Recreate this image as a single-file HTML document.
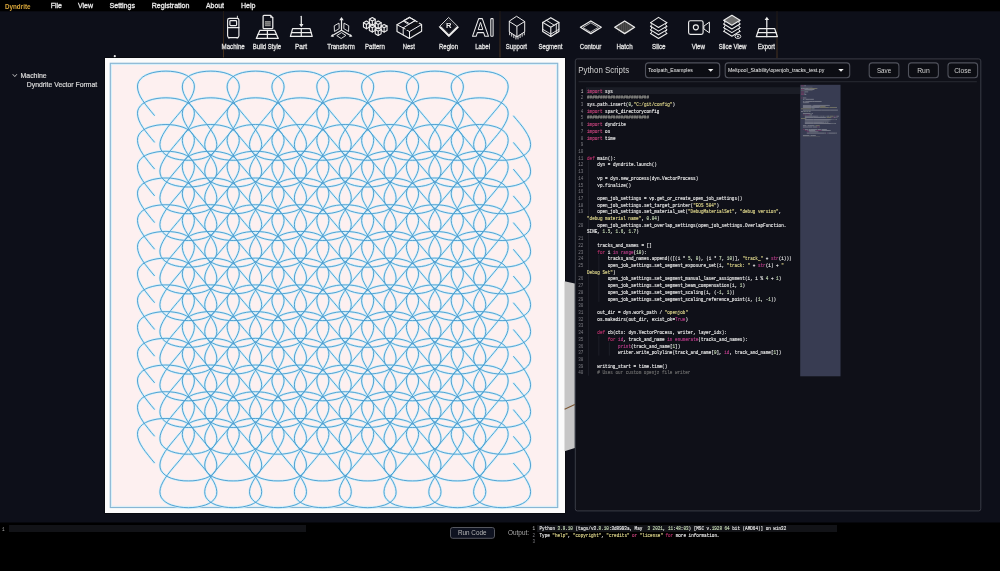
<!DOCTYPE html>
<html><head><meta charset="utf-8"><title>Dyndrite</title>
<style>html,body{margin:0;padding:0;width:1000px;height:571px;overflow:hidden;background:#0d0f19}
svg{display:block;will-change:transform;font-family:"Liberation Sans",sans-serif}.code .k{fill:#c8447e;stroke:#c8447e;stroke-width:0.16px}.code .d{fill:#b8306a;stroke:#b8306a;stroke-width:0.16px}.code .b{fill:#b83c88;stroke:#b83c88;stroke-width:0.16px}.code .s{fill:#dcd48a;stroke:#dcd48a;stroke-width:0.16px}.code .n{fill:#c2d6b2;stroke:#c2d6b2;stroke-width:0.16px}.code .c{fill:#6c6c6c;stroke:#6c6c6c;stroke-width:0.16px}.code .h{fill:#8a8a86;stroke:#8a8a86;stroke-width:0.16px}.code .i{fill:#e6e6e6;stroke:#e6e6e6;stroke-width:0.16px}.code .ln{fill:#7e7e84}.code .ln1{fill:#c8c8c8}</style></head>
<body><svg width="1000" height="571" viewBox="0 0 1000 571"><defs><linearGradient id="sepg" x1="0" y1="0" x2="0" y2="1"><stop offset="0" stop-color="#1e1814"/><stop offset="1" stop-color="#4a3420"/></linearGradient></defs><rect x="0" y="0" width="1000" height="571" fill="#0d0f19"/><rect x="0" y="0" width="1000" height="11.3" fill="#000"/><text x="5" y="8.5" font-size="7.8" fill="#dba83a" font-weight="bold" textLength="25.5" lengthAdjust="spacingAndGlyphs">Dyndrite</text><text x="50.75" y="8.4" font-size="7.5" fill="#e8e8e8" textLength="11.25" lengthAdjust="spacingAndGlyphs" stroke="#e8e8e8" stroke-width="0.3">File</text><text x="78" y="8.4" font-size="7.5" fill="#e8e8e8" textLength="15" lengthAdjust="spacingAndGlyphs" stroke="#e8e8e8" stroke-width="0.3">View</text><text x="109.5" y="8.4" font-size="7.5" fill="#e8e8e8" textLength="25.5" lengthAdjust="spacingAndGlyphs" stroke="#e8e8e8" stroke-width="0.3">Settings</text><text x="151.75" y="8.4" font-size="7.5" fill="#e8e8e8" textLength="37.75" lengthAdjust="spacingAndGlyphs" stroke="#e8e8e8" stroke-width="0.3">Registration</text><text x="206" y="8.4" font-size="7.5" fill="#e8e8e8" textLength="18" lengthAdjust="spacingAndGlyphs" stroke="#e8e8e8" stroke-width="0.3">About</text><text x="241" y="8.4" font-size="7.5" fill="#e8e8e8" textLength="14.5" lengthAdjust="spacingAndGlyphs" stroke="#e8e8e8" stroke-width="0.3">Help</text><rect x="223.0" y="11" width="1" height="47" fill="url(#sepg)"/><rect x="499.5" y="11" width="1" height="47" fill="url(#sepg)"/><rect x="776.5" y="11" width="1" height="47" fill="url(#sepg)"/><text x="221.6" y="49" font-size="6.8" fill="#dedede" textLength="23.2" lengthAdjust="spacingAndGlyphs" stroke="#e2e2e2" stroke-width="0.3">Machine</text><text x="252.8" y="49" font-size="6.8" fill="#dedede" textLength="28.4" lengthAdjust="spacingAndGlyphs" stroke="#e2e2e2" stroke-width="0.3">Build Style</text><text x="295" y="49" font-size="6.8" fill="#dedede" textLength="12" lengthAdjust="spacingAndGlyphs" stroke="#e2e2e2" stroke-width="0.3">Part</text><text x="327.2" y="49" font-size="6.8" fill="#dedede" textLength="27.6" lengthAdjust="spacingAndGlyphs" stroke="#e2e2e2" stroke-width="0.3">Transform</text><text x="365" y="49" font-size="6.8" fill="#dedede" textLength="19.8" lengthAdjust="spacingAndGlyphs" stroke="#e2e2e2" stroke-width="0.3">Pattern</text><text x="402.8" y="49" font-size="6.8" fill="#dedede" textLength="12.0" lengthAdjust="spacingAndGlyphs" stroke="#e2e2e2" stroke-width="0.3">Nest</text><text x="439" y="49" font-size="6.8" fill="#dedede" textLength="19" lengthAdjust="spacingAndGlyphs" stroke="#e2e2e2" stroke-width="0.3">Region</text><text x="475.2" y="49" font-size="6.8" fill="#dedede" textLength="14.8" lengthAdjust="spacingAndGlyphs" stroke="#e2e2e2" stroke-width="0.3">Label</text><text x="505.8" y="49" font-size="6.8" fill="#dedede" textLength="21.2" lengthAdjust="spacingAndGlyphs" stroke="#e2e2e2" stroke-width="0.3">Support</text><text x="538.4" y="49" font-size="6.8" fill="#dedede" textLength="24.0" lengthAdjust="spacingAndGlyphs" stroke="#e2e2e2" stroke-width="0.3">Segment</text><text x="579.8" y="49" font-size="6.8" fill="#dedede" textLength="21.6" lengthAdjust="spacingAndGlyphs" stroke="#e2e2e2" stroke-width="0.3">Contour</text><text x="616.4" y="49" font-size="6.8" fill="#dedede" textLength="16.2" lengthAdjust="spacingAndGlyphs" stroke="#e2e2e2" stroke-width="0.3">Hatch</text><text x="652" y="49" font-size="6.8" fill="#dedede" textLength="13.5" lengthAdjust="spacingAndGlyphs" stroke="#e2e2e2" stroke-width="0.3">Slice</text><text x="691.7" y="49" font-size="6.8" fill="#dedede" textLength="13.3" lengthAdjust="spacingAndGlyphs" stroke="#e2e2e2" stroke-width="0.3">View</text><text x="718.7" y="49" font-size="6.8" fill="#dedede" textLength="27.8" lengthAdjust="spacingAndGlyphs" stroke="#e2e2e2" stroke-width="0.3">Slice View</text><text x="757.7" y="49" font-size="6.8" fill="#dedede" textLength="17.3" lengthAdjust="spacingAndGlyphs" stroke="#e2e2e2" stroke-width="0.3">Export</text><g><rect x="227.6" y="18.3" width="11.3" height="19.3" rx="1.8" fill="none" stroke="#ececec" stroke-width="1.15"/><rect x="229.9" y="20.6" width="6.7" height="5" rx="0.9" fill="none" stroke="#ececec" stroke-width="1.15"/><path d="M227.6 27.6 H238.9" fill="none" stroke="#ececec" stroke-width="1.25" stroke-linejoin="round" stroke-linecap="round"/><path d="M237.4 16.2 V18.3" fill="none" stroke="#ececec" stroke-width="0.9" stroke-linejoin="round" stroke-linecap="round"/><path d="M228 37.2 h1.6 v1.2 h-1.6 Z M236.6 37.2 h1.6 v1.2 h-1.6 Z" fill="#ececec"/><path d="M264 15.4 H270.6 L272.8 17.6 V27.7 Q272.8 28.6 271.9 28.6 H264 Q263.1 28.6 263.1 27.7 V16.3 Q263.1 15.4 264 15.4 Z" fill="none" stroke="#ececec" stroke-width="1.25" stroke-linejoin="round" stroke-linecap="round"/><path d="M270.6 15.4 V17.6 H272.8" fill="none" stroke="#ececec" stroke-width="0.8" stroke-linejoin="round" stroke-linecap="round"/><path d="M264.9 21 H270.7 V26.2 H264.9 Z" fill="#8a8a8a"/><path d="M264.9 22.7 H270.7 M264.9 24.4 H270.7" fill="none" stroke="#4a4a4a" stroke-width="0.5" stroke-linejoin="round" stroke-linecap="round"/><path d="M259.9 30.3 L274.6 30.3 L278.3 38.4 L256.3 38.4 Z" fill="none" stroke="#ececec" stroke-width="1.25" stroke-linejoin="round" stroke-linecap="round"/><path d="M258.1 34.4 H276.5 M267.4 30.3 V38.4" fill="none" stroke="#ececec" stroke-width="1.25" stroke-linejoin="round" stroke-linecap="round"/><path d="M301.3 16.3 V24.5" fill="none" stroke="#ececec" stroke-width="1.25" stroke-linejoin="round" stroke-linecap="round"/><path d="M299.2 24 L303.5 24 L301.35 27.3 Z" fill="#ececec"/><path d="M292.6 28.7 L310 28.7 L312.2 36.4 L290.4 36.4 Z" fill="none" stroke="#ececec" stroke-width="1.25" stroke-linejoin="round" stroke-linecap="round"/><path d="M291.5 32.5 H311.1 M301.3 28.7 V36.4" fill="none" stroke="#ececec" stroke-width="1.25" stroke-linejoin="round" stroke-linecap="round"/><path d="M341.5 30.2 V19.5 M341.5 30.2 L332.5 35.5 M341.5 30.2 L350.5 35.5" fill="none" stroke="#ececec" stroke-width="1.25" stroke-linejoin="round" stroke-linecap="round"/><path d="M339.3 20.2 L343.7 20.2 L341.5 16.9 Z" fill="#ececec"/><path d="M330.6 36.6 L333.9 37.1 L332.3 34.1 Z M352.4 36.6 L349.1 37.1 L350.7 34.1 Z" fill="#ececec"/><path d="M334.6 25.6 L339 23.1 L339.2 28.6 L334.8 31.3 Z" fill="none" stroke="#ececec" stroke-width="0.9" stroke-linejoin="round" stroke-linecap="round"/><path d="M348.4 25.6 L344 23.1 L343.8 28.6 L348.2 31.3 Z" fill="none" stroke="#ececec" stroke-width="0.9" stroke-linejoin="round" stroke-linecap="round"/><path d="M337.1 35.4 L341.5 32.6 L345.9 35.4 L341.5 38.3 Z" fill="none" stroke="#ececec" stroke-width="0.9" stroke-linejoin="round" stroke-linecap="round"/><path d="M372.3 17.6 L375.25 19.3 L375.25 23.6 L372.3 25.3 L369.35 23.6 L369.35 19.3 Z" fill="none" stroke="#ececec" stroke-width="1.1" stroke-linejoin="round" stroke-linecap="round"/><path d="M369.35 19.3 L372.3 21 L375.25 19.3 M372.3 21 V25.3" fill="none" stroke="#ececec" stroke-width="1.1" stroke-linejoin="round" stroke-linecap="round"/><path d="M378.2 21 L381.15 22.7 L381.15 27 L378.2 28.7 L375.25 27 L375.25 22.7 Z" fill="none" stroke="#ececec" stroke-width="1.1" stroke-linejoin="round" stroke-linecap="round"/><path d="M375.25 22.7 L378.2 24.4 L381.15 22.7 M378.2 24.4 V28.7" fill="none" stroke="#ececec" stroke-width="1.1" stroke-linejoin="round" stroke-linecap="round"/><path d="M384.1 24.4 L387.05 26.1 L387.05 30.4 L384.1 32.1 L381.15 30.4 L381.15 26.1 Z" fill="none" stroke="#ececec" stroke-width="1.1" stroke-linejoin="round" stroke-linecap="round"/><path d="M381.15 26.1 L384.1 27.8 L387.05 26.1 M384.1 27.8 V32.1" fill="none" stroke="#ececec" stroke-width="1.1" stroke-linejoin="round" stroke-linecap="round"/><path d="M366.4 21 L369.35 22.7 L369.35 27 L366.4 28.7 L363.45 27 L363.45 22.7 Z" fill="none" stroke="#ececec" stroke-width="1.1" stroke-linejoin="round" stroke-linecap="round"/><path d="M363.45 22.7 L366.4 24.4 L369.35 22.7 M366.4 24.4 V28.7" fill="none" stroke="#ececec" stroke-width="1.1" stroke-linejoin="round" stroke-linecap="round"/><path d="M372.3 24.4 L375.25 26.1 L375.25 30.4 L372.3 32.1 L369.35 30.4 L369.35 26.1 Z" fill="none" stroke="#ececec" stroke-width="1.1" stroke-linejoin="round" stroke-linecap="round"/><path d="M369.35 26.1 L372.3 27.8 L375.25 26.1 M372.3 27.8 V32.1" fill="none" stroke="#ececec" stroke-width="1.1" stroke-linejoin="round" stroke-linecap="round"/><path d="M378.2 27.8 L381.15 29.5 L381.15 33.8 L378.2 35.5 L375.25 33.8 L375.25 29.5 Z" fill="none" stroke="#ececec" stroke-width="1.1" stroke-linejoin="round" stroke-linecap="round"/><path d="M375.25 29.5 L378.2 31.2 L381.15 29.5 M378.2 31.2 V35.5" fill="none" stroke="#ececec" stroke-width="1.1" stroke-linejoin="round" stroke-linecap="round"/><path d="M409.7 17.4 L421.6 24.5 L421.6 31.3 L409.5 38.4 L397 31.4 L397 24.8 L403.4 21 Z" fill="none" stroke="#ececec" stroke-width="1.15" stroke-linejoin="round" stroke-linecap="round"/><path d="M409.7 17.4 L415.2 20.6 L409.7 23.8 L404.2 20.6 Z" fill="none" stroke="#ececec" stroke-width="1.0" stroke-linejoin="round" stroke-linecap="round"/><path d="M403.4 21 L408.6 24.5 L403.2 27.9 L397 24.8" fill="none" stroke="#ececec" stroke-width="1.0" stroke-linejoin="round" stroke-linecap="round"/><path d="M403.2 27.9 V34.8" fill="none" stroke="#ececec" stroke-width="1.0" stroke-linejoin="round" stroke-linecap="round"/><path d="M403.2 27.9 L409.5 31.6 L421.6 24.5" fill="none" stroke="#ececec" stroke-width="1.0" stroke-linejoin="round" stroke-linecap="round"/><path d="M409.5 31.6 V38.4" fill="none" stroke="#ececec" stroke-width="1.0" stroke-linejoin="round" stroke-linecap="round"/><path d="M408.6 24.5 L415.2 20.6" fill="none" stroke="#ececec" stroke-width="1.0" stroke-linejoin="round" stroke-linecap="round"/><path d="M406 29.6 L418.6 22.5" fill="none" stroke="#111" stroke-width="1.6" stroke-linejoin="round" stroke-linecap="round"/><path d="M411.5 34.2 L420.6 28.9" fill="none" stroke="#111" stroke-width="1.5" stroke-linejoin="round" stroke-linecap="round"/><path d="M448.9 17.7 L458.3 27 L448.9 36.6 L439.6 27 Z" fill="none" stroke="#ececec" stroke-width="0.9" stroke-linejoin="round" stroke-linecap="round"/><path d="M440.4 27.2 L448.9 35.6 L457.5 27.2" fill="none" stroke="#ececec" stroke-width="2.0" stroke-linejoin="round" stroke-linecap="round"/><path d="M448.9 20.2 L455.8 27 L448.9 33.4 L442.1 27 Z" fill="none" stroke="#5a5a5a" stroke-width="0.6" stroke-linejoin="round" stroke-linecap="round"/><text x="448.8" y="28.1" font-size="7.6" font-weight="bold" fill="#ececec" text-anchor="middle" font-family="Liberation Sans">R</text><path d="M472.5 36.3 L478.7 18.6 L482.3 18.6 L488.5 36.3 L484.9 36.3 L483.6 32.6 L477.4 32.6 L476.1 36.3 Z" fill="none" stroke="#ececec" stroke-width="1.05" stroke-linejoin="round" stroke-linecap="round"/><path d="M478.3 29.2 L480.5 22.4 L482.7 29.2 Z" fill="none" stroke="#ececec" stroke-width="1.0" stroke-linejoin="round" stroke-linecap="round"/><rect x="490.8" y="18.6" width="2.3" height="17.7" rx="0.6" fill="none" stroke="#ececec" stroke-width="1.05"/><path d="M516.9 16.5 L524.7 21.5 L524.7 31.8 L516.9 36.9 L509.3 31.8 L509.3 21.5 Z" fill="none" stroke="#ececec" stroke-width="1" stroke-linejoin="round" stroke-linecap="round"/><path d="M509.3 21.5 L516.9 26.3 L524.7 21.5 M516.9 26.3 V36.9" fill="none" stroke="#ececec" stroke-width="1" stroke-linejoin="round" stroke-linecap="round"/><path d=" M509.6 32 V34.8 M511.7 33.41 V36.21 M513.8 34.82 V37.62 M515.9 36.23 V39.03 M518 36.18 V38.98 M520.1 34.81 V37.61 M522.2 33.43 V36.23 M524.3 32.06 V34.86" fill="none" stroke="#ececec" stroke-width="0.9" stroke-linejoin="round" stroke-linecap="round"/><path d="M550.8 17.7 L558.9 22.4 L558.9 31.5 L550.8 36.4 L542.7 31.5 L542.7 22.4 Z" fill="none" stroke="#ececec" stroke-width="1.2" stroke-linejoin="round" stroke-linecap="round"/><path d="M542.7 22.4 L550.8 27.2 L558.9 22.4 M550.8 27.2 V36.4" fill="none" stroke="#ececec" stroke-width="1.1" stroke-linejoin="round" stroke-linecap="round"/><path d="M542.7 29.3 L550.8 34.1 L558.9 29.3" fill="none" stroke="#ececec" stroke-width="0.9" stroke-linejoin="round" stroke-linecap="round"/><path d="M546.2 20.2 L554.2 25.2 M556.3 24 V33" fill="none" stroke="#ececec" stroke-width="0.9" stroke-linejoin="round" stroke-linecap="round"/><path d="M580.4 27.3 L590.85 21 L601.3 27.3 L590.85 33.6 Z" fill="none" stroke="#ececec" stroke-width="1.25" stroke-linejoin="round" stroke-linecap="round"/><path d="M583.3 27.3 L590.85 22.8 L598.4 27.3 L590.85 31.8 Z" fill="none" stroke="#bdbdbd" stroke-width="0.9" stroke-linejoin="round" stroke-linecap="round"/><path d="M614.7 27.3 L624.65 21 L634.6 27.3 L624.65 33.6 Z" fill="#4e4e4e"/><path d="M618.5 22 V32.6 M620.5 22 V32.6 M622.5 22 V32.6 M624.6 22 V32.6 M626.7 22 V32.6 M628.8 22 V32.6 M630.8 22 V32.6" fill="none" stroke="#2a2a2a" stroke-width="0.5" stroke-linejoin="round" stroke-linecap="round"/><path d="M614.7 27.3 L624.65 21 L634.6 27.3 L624.65 33.6 Z" fill="none" stroke="#ececec" stroke-width="1.25" stroke-linejoin="round" stroke-linecap="round"/><path d="M650.6 22.6 L658.5 17.4 L666.8 22.6 L658.5 27.5 Z" fill="none" stroke="#ececec" stroke-width="1.1" stroke-linejoin="round" stroke-linecap="round"/><path d="M650.6 26.25 L658.5 31.15 L666.8 26.25" fill="none" stroke="#ececec" stroke-width="1.1" stroke-linejoin="round" stroke-linecap="round"/><path d="M650.6 29.9 L658.5 34.8 L666.8 29.9" fill="none" stroke="#ececec" stroke-width="1.1" stroke-linejoin="round" stroke-linecap="round"/><path d="M650.6 33.55 L658.5 38.45 L666.8 33.55" fill="none" stroke="#ececec" stroke-width="1.1" stroke-linejoin="round" stroke-linecap="round"/><path d="M650.6 22.6 L651.9 24.45 L650.6 26.25 L651.9 28.1 L650.6 29.9 L651.9 31.75 L650.6 33.55" fill="none" stroke="#ececec" stroke-width="1.0" stroke-linejoin="round" stroke-linecap="round"/><path d="M666.8 22.6 L665.5 24.45 L666.8 26.25 L665.5 28.1 L666.8 29.9 L665.5 31.75 L666.8 33.55" fill="none" stroke="#ececec" stroke-width="1.0" stroke-linejoin="round" stroke-linecap="round"/><rect x="688.6" y="20.7" width="14.5" height="13.7" rx="1.8" fill="none" stroke="#ececec" stroke-width="1.15"/><circle cx="695.85" cy="27.3" r="2.5" fill="none" stroke="#ececec" stroke-width="1.15"/><path d="M704.2 25.9 L709.4 22.1 L709.4 32.8 L704.2 29.2 Z" fill="none" stroke="#ececec" stroke-width="1" stroke-linejoin="round" stroke-linecap="round"/><path d="M723.8 20.3 L731.9 15.2 L740 20.3 L731.9 25.3 Z" fill="#6e6e6e"/><path d="M723.8 20.3 L731.9 15.2 L740 20.3 L731.9 25.3 Z" fill="none" stroke="#ececec" stroke-width="1.1" stroke-linejoin="round" stroke-linecap="round"/><path d="M723.8 23.95 L731.9 28.95 L740 23.95" fill="none" stroke="#ececec" stroke-width="1.1" stroke-linejoin="round" stroke-linecap="round"/><path d="M723.8 27.6 L731.9 32.6 L740 27.6" fill="none" stroke="#ececec" stroke-width="1.1" stroke-linejoin="round" stroke-linecap="round"/><path d="M723.8 31.25 L731.9 36.25 L740 31.25" fill="none" stroke="#ececec" stroke-width="1.1" stroke-linejoin="round" stroke-linecap="round"/><path d="M723.8 20.3 L725.1 22.15 L723.8 23.95 L725.1 25.8 L723.8 27.6 L725.1 29.45 L723.8 31.25" fill="none" stroke="#ececec" stroke-width="1.0" stroke-linejoin="round" stroke-linecap="round"/><path d="M740 20.3 L738.7 22.15 L740 23.95 L738.7 25.8 L740 27.6 L738.7 29.45 L740 31.25" fill="none" stroke="#ececec" stroke-width="1.0" stroke-linejoin="round" stroke-linecap="round"/><ellipse cx="737.9" cy="36.4" rx="2.9" ry="2.1" fill="#0d0f19" stroke="#ececec" stroke-width="0.9"/><circle cx="737.9" cy="36.4" r="0.9" fill="#ececec"/><path d="M766.8 27.3 V19.3" fill="none" stroke="#ececec" stroke-width="1.25" stroke-linejoin="round" stroke-linecap="round"/><path d="M764.6 20 L769.1 20 L766.85 16.8 Z" fill="#ececec"/><path d="M759 28.6 L774.7 28.6 L777.4 36.7 L756.3 36.7 Z" fill="none" stroke="#ececec" stroke-width="1.25" stroke-linejoin="round" stroke-linecap="round"/><path d="M757.7 32.6 H776 M766.8 28.6 V36.7" fill="none" stroke="#ececec" stroke-width="1.25" stroke-linejoin="round" stroke-linecap="round"/></g><path d="M12.7 74.2 L14.8 76.6 L16.9 74.2" fill="none" stroke="#cfcfcf" stroke-width="0.9"/><text x="20.5" y="78.4" font-size="7.2" fill="#dadada" textLength="26.2" lengthAdjust="spacingAndGlyphs" stroke="#dadada" stroke-width="0.2">Machine</text><text x="26.8" y="87" font-size="7.2" fill="#dadada" textLength="70.4" lengthAdjust="spacingAndGlyphs" stroke="#dadada" stroke-width="0.2">Dyndrite Vector Format</text><rect x="104.5" y="57.5" width="461" height="456" fill="#050608"/><rect x="105" y="58" width="460" height="455" fill="#fbfbfb"/><rect x="110.3" y="63.3" width="447.4" height="444.2" fill="#fdf0f0" stroke="#88b6d4" stroke-width="1.2"/><rect x="111.5" y="64.5" width="445" height="441.8" fill="none" stroke="#d8f0fa" stroke-width="1"/><defs><path id="pat" d="M154.7 115.7l-3.3 -3.9 -3.1 -3.8 -3 -3.8 -2.6 -3.8 -2.2 -3.5 -1.6 -3.5 -1 -3.3 -0.4 -3.1 0.2 -2.8 1 -2.7 1.7 -2.3 2.2 -2.1 2.9 -1.8 3.4 -1.5 3.9 -1.2 4.2 -0.8 4.4 -0.5 4.5 -0.2 4.6 0.2 4.4 0.5 4.2 0.8 3.9 1.2 3.4 1.5 2.9 1.8 2.2 2.1 1.7 2.3 1 2.7 0.2 2.8 -0.4 3.1 -1 3.3 -1.6 3.5 -2.2 3.5 -2.6 3.8 -3 3.8 -3.1 3.8 -3.3 3.9 -3.3 3.9 -3.2 3.8 -3 3.8 -2.6 3.8 -2.1 3.5 -1.7 3.5 -1 3.3 -0.4 3.1 0.3 2.8 0.9 2.7 1.7 2.3 2.3 2.1 2.8 1.8 3.4 1.5 3.9 1.2 4.2 0.8 4.4 0.5 4.6 0.2 4.5 -0.2 4.4 -0.5 4.2 -0.8 3.9 -1.2 3.4 -1.5 2.9 -1.8 2.3 -2.1 1.6 -2.3 1 -2.7 0.2 -2.8 -0.4 -3.1 -1 -3.3 -1.6 -3.5 -2.2 -3.5 -2.6 -3.8 -2.9 -3.8 -3.2 -3.8 -3.3 -3.9 -3.3 -3.9 -3.2 -3.8 -3 -3.8 -2.6 -3.8 -2.1 -3.5 -1.7 -3.5 -1 -3.3 -0.4 -3.1 0.3 -2.8 0.9 -2.7 1.7 -2.3 2.3 -2.1 2.8 -1.8 3.5 -1.5 3.8 -1.2 4.2 -0.8 4.4 -0.5 4.6 -0.2 4.5 0.2 4.4 0.5 4.2 0.8 3.9 1.2 3.4 1.5 2.9 1.8 2.3 2.1 1.6 2.3 1 2.7 0.3 2.8 -0.4 3.1 -1.1 3.3 -1.6 3.5 -2.2 3.5 -2.6 3.8 -2.9 3.8 -3.2 3.8 -3.3 3.9 -3.3 3.9 -3.2 3.8 -3 3.8 -2.6 3.8 -2.1 3.5 -1.7 3.5 -1 3.3 -0.4 3.1 0.3 2.8 0.9 2.7 1.7 2.3 2.3 2.1 2.9 1.8 3.4 1.5 3.8 1.2 4.2 0.8 4.4 0.5 4.6 0.2 4.5 -0.2 4.5 -0.5 4.2 -0.8 3.8 -1.2 3.4 -1.5 2.9 -1.8 2.3 -2.1 1.6 -2.3 1 -2.7 0.3 -2.8 -0.4 -3.1 -1.1 -3.3 -1.6 -3.5 -2.2 -3.5 -2.6 -3.8 -2.9 -3.8 -3.2 -3.8 -3.3 -3.9 -3.3 -3.9 -3.2 -3.8 -2.9 -3.8 -2.6 -3.8 -2.2 -3.5 -1.6 -3.5 -1.1 -3.3 -0.4 -3.1 0.3 -2.8 1 -2.7 1.6 -2.3 2.3 -2.1 2.9 -1.8 3.4 -1.5 3.8 -1.2 4.2 -0.8 4.5 -0.5 4.5 -0.2 4.5 0.2 4.5 0.5 4.2 0.8 3.8 1.2 3.4 1.5 2.9 1.8 2.3 2.1 1.6 2.3 1 2.7 0.3 2.8 -0.4 3.1 -1.1 3.3 -1.6 3.5 -2.2 3.5 -2.6 3.8 -2.9 3.8 -3.2 3.8 -3.3 3.9 -3.3 3.9 -3.2 3.8 -2.9 3.8 -2.6 3.8 -2.2 3.5 -1.6 3.5 -1.1 3.3 -0.4 3.1 0.3 2.8 1 2.7 1.6 2.3 2.3 2.1 2.9 1.8 3.4 1.5 3.8 1.2 4.2 0.8 4.5 0.5 4.5 0.2 4.6 -0.2 4.4 -0.5 4.2 -0.8 3.8 -1.2 3.4 -1.5 2.9 -1.8 2.3 -2.1 1.6 -2.3 1 -2.7 0.3 -2.8 -0.4 -3.1 -1 -3.3 -1.7 -3.5 -2.1 -3.5 -2.7 -3.8 -2.9 -3.8 -3.2 -3.8 -3.3 -3.9 -3.3 -3.9 -3.2 -3.8 -2.9 -3.8 -2.6 -3.8 -2.2 -3.5 -1.6 -3.5 -1.1 -3.3 -0.4 -3.1 0.3 -2.8 1 -2.7 1.6 -2.3 2.3 -2.1 2.9 -1.8 3.4 -1.5 3.9 -1.2 4.1 -0.8 4.5 -0.5 4.5 -0.2 4.6 0.2 4.4 0.5 4.2 0.8 3.8 1.2 3.4 1.5 2.9 1.8 2.3 2.1 1.7 2.3 0.9 2.7 0.3 2.8 -0.4 3.1 -1 3.3 -1.7 3.5 -2.1 3.5 -2.6 3.8 -3 3.8 -3.2 3.8 -3.3 3.9 -3.3 3.9 -3.2 3.8 -2.9 3.8 -2.6 3.8 -2.2 3.5 -1.6 3.5 -1.1 3.3 -0.3 3.1 0.2 2.8 1 2.7 1.6 2.3 2.3 2.1 2.9 1.8 3.4 1.5 3.9 1.2 4.2 0.8 4.4 0.5 4.5 0.2 4.6 -0.2 4.4 -0.5 4.2 -0.8 3.9 -1.2 3.4 -1.5 2.8 -1.8 2.3 -2.1 1.7 -2.3 0.9 -2.7 0.3 -2.8 -0.4 -3.1 -1 -3.3 -1.7 -3.5 -2.1 -3.5 -2.6 -3.8 -3 -3.8 -3.2 -3.8 -3.3 -3.9 -3.3 -3.9 -3.1 -3.8 -3 -3.8 -2.6 -3.8 -2.2 -3.5 -1.6 -3.5 -1 -3.3 -0.4 -3.1 0.2 -2.8 1 -2.7 1.7 -2.3 2.2 -2.1 2.9 -1.8 3.4 -1.5 3.9 -1.2 4.2 -0.8 4.4 -0.5 4.5 -0.2 4.6 0.2 4.4 0.5 4.2 0.8 3.9 1.2 3.4 1.5 2.9 1.8 2.2 2.1 1.7 2.3 1 2.7 0.2 2.8 -0.4 3.1 -1 3.3 -1.6 3.5 -2.2 3.5 -2.6 3.8 -3 3.8 -3.1 3.8 -3.3 3.9 -3.3 3.9 -3.2 3.8 -3 3.8 -2.6 3.8 -2.1 3.5 -1.7 3.5 -1 3.3 -0.4 3.1 0.3 2.8 0.9 2.7 1.7 2.3 2.3 2.1 2.8 1.8 3.4 1.5 3.9 1.2 4.2 0.8 4.4 0.5 4.6 0.2 4.5 -0.2 4.4 -0.5 4.2 -0.8 3.9 -1.2 3.4 -1.5 2.9 -1.8 2.3 -2.1 1.6 -2.3 1 -2.7 0.2 -2.8 -0.4 -3.1 -1 -3.3 -1.6 -3.5 -2.2 -3.5 -2.6 -3.8 -3 -3.8 -3.1 -3.8 -3.3 -3.9 -3.3 -3.9 -3.2 -3.8 -3 -3.8 -2.6 -3.8 -2.1 -3.5 -1.7 -3.5 -1 -3.3 -0.4 -3.1 0.3 -2.8 0.9 -2.7 1.7 -2.3 2.3 -2.1 2.8 -1.8 3.5 -1.5 3.8 -1.2 4.2 -0.8 4.4 -0.5 4.6 -0.2 4.5 0.2 4.4 0.5 4.2 0.8 3.9 1.2 3.4 1.5 2.9 1.8 2.3 2.1 1.6 2.3 1 2.7 0.3 2.8 -0.4 3.1 -1.1 3.3 -1.6 3.5 -2.2 3.5 -2.6 3.8 -2.9 3.8 -3.2 3.8 -3.3 3.9 -3.3 3.9 -3.2 3.8 -3 3.8 -2.6 3.8 -2.1 3.5 -1.7 3.5 -1 3.3 -0.4 3.1 0.3 2.8 0.9 2.7 1.7 2.3 2.3 2.1 2.9 1.8 3.4 1.5 3.8 1.2 4.2 0.8 4.4 0.5 4.6 0.2 4.5 -0.2 4.5 -0.5 4.2 -0.8 3.8 -1.2 3.4 -1.5 2.9 -1.8 2.3 -2.1 1.6 -2.3 1 -2.7 0.3 -2.8 -0.4 -3.1 -1.1 -3.3 -1.6 -3.5 -2.2 -3.5 -2.6 -3.8 -2.9 -3.8 -3.2 -3.8 -3.3 -3.9 -3.3 -3.9 -3.2 -3.8 -2.9 -3.8 -2.6 -3.8 -2.2 -3.5 -1.6 -3.5 -1.1 -3.3 -0.4 -3.1 0.3 -2.8 1 -2.7 1.6 -2.3 2.3 -2.1 2.9 -1.8 3.4 -1.5 3.8 -1.2 4.2 -0.8 4.4 -0.5 4.6 -0.2 4.5 0.2 4.5 0.5 4.2 0.8 3.8 1.2 3.4 1.5 2.9 1.8 2.3 2.1 1.6 2.3 1 2.7 0.3 2.8 -0.4 3.1 -1.1 3.3 -1.6 3.5 -2.2 3.5 -2.6 3.8 -2.9 3.8 -3.2 3.8 -3.3 3.9 -3.3 3.9 -3.2 3.8 -2.9 3.8 -2.6 3.8 -2.2 3.5 -1.6 3.5 -1.1 3.3 -0.4 3.1 0.3 2.8 1 2.7 1.6 2.3 2.3 2.1 2.9 1.8 3.4 1.5 3.8 1.2 4.2 0.8 4.5 0.5 4.5 0.2 4.6 -0.2 4.4 -0.5 4.2 -0.8 3.8 -1.2 3.4 -1.5 2.9 -1.8 2.3 -2.1 1.6 -2.3 1 -2.7 0.3 -2.8 -0.4 -3.1 -1 -3.3 -1.7 -3.5 -2.1 -3.5 -2.7 -3.8 -2.9 -3.8 -3.2 -3.8 -3.3 -3.9 -3.3 -3.9 -3.2 -3.8 -2.9 -3.8 -2.6 -3.8 -2.2 -3.5 -1.6 -3.5 -1.1 -3.3 -0.4 -3.1 0.3 -2.8 1 -2.7 1.6 -2.3 2.3 -2.1 2.9 -1.8 3.4 -1.5 3.9 -1.2 4.1 -0.8 4.5 -0.5 4.5 -0.2 4.6 0.2 4.4 0.5 4.2 0.8 3.8 1.2 3.4 1.5 2.9 1.8 2.3 2.1 1.7 2.3 0.9 2.7 0.3 2.8 -0.4 3.1 -1 3.3 -1.7 3.5 -2.1 3.5 -2.6 3.8 -3 3.8 -3.2 3.8 -3.3 3.9 -3.3 3.9 -3.2 3.8 -2.9 3.8 -2.6 3.8 -2.2 3.5 -1.6 3.5 -1.1 3.3 -0.4 3.1 0.3 2.8 1 2.7 1.6 2.3 2.3 2.1 2.9 1.8 3.4 1.5 3.9 1.2 4.2 0.8 4.4 0.5 4.5 0.2 4.6 -0.2 4.4 -0.5 4.2 -0.8 3.8 -1.2 3.5 -1.5 2.8 -1.8 2.3 -2.1 1.7 -2.3 0.9 -2.7 0.3 -2.8 -0.4 -3.1 -1 -3.3 -1.7 -3.5 -2.1 -3.5 -2.6 -3.8 -3 -3.8 -3.2 -3.8 -3.3 -3.9M154.7 142.4l-3.3 -3.9 -3.1 -3.8 -3 -3.8 -2.6 -3.7 -2.2 -3.6 -1.6 -3.5 -1 -3.3 -0.4 -3 0.2 -2.9 1 -2.6 1.7 -2.4 2.2 -2.1 2.9 -1.8 3.4 -1.5 3.9 -1.2 4.2 -0.8 4.4 -0.5 4.5 -0.2 4.6 0.2 4.4 0.5 4.2 0.8 3.9 1.2 3.4 1.5 2.9 1.8 2.2 2.1 1.7 2.4 1 2.6 0.2 2.9 -0.4 3 -1 3.3 -1.6 3.5 -2.2 3.6 -2.6 3.7 -3 3.8 -3.1 3.8 -3.3 3.9 -3.3 3.9 -3.2 3.9 -3 3.8 -2.6 3.7 -2.1 3.6 -1.7 3.4 -1 3.3 -0.4 3.1 0.3 2.9 0.9 2.6 1.7 2.4 2.3 2 2.8 1.8 3.4 1.5 3.9 1.2 4.2 0.8 4.4 0.6 4.6 0.1 4.5 -0.1 4.4 -0.6 4.2 -0.8 3.9 -1.2 3.4 -1.5 2.9 -1.8 2.3 -2 1.6 -2.4 1 -2.6 0.2 -2.9 -0.4 -3.1 -1 -3.3 -1.6 -3.4 -2.2 -3.6 -2.6 -3.7 -2.9 -3.8 -3.2 -3.9 -3.3 -3.9 -3.3 -3.9 -3.2 -3.8 -3 -3.8 -2.6 -3.7 -2.1 -3.6 -1.7 -3.5 -1 -3.3 -0.4 -3 0.3 -2.9 0.9 -2.6 1.7 -2.4 2.3 -2.1 2.8 -1.8 3.5 -1.5 3.8 -1.2 4.2 -0.8 4.4 -0.5 4.6 -0.2 4.5 0.2 4.4 0.5 4.2 0.8 3.9 1.2 3.4 1.5 2.9 1.8 2.3 2.1 1.6 2.4 1 2.6 0.3 2.9 -0.4 3 -1.1 3.3 -1.6 3.5 -2.2 3.6 -2.6 3.7 -2.9 3.8 -3.2 3.8 -3.3 3.9 -3.3 3.9 -3.2 3.9 -3 3.8 -2.6 3.7 -2.1 3.6 -1.7 3.4 -1 3.3 -0.4 3.1 0.3 2.9 0.9 2.6 1.7 2.4 2.3 2 2.9 1.8 3.4 1.5 3.8 1.2 4.2 0.8 4.4 0.6 4.6 0.1 4.5 -0.1 4.5 -0.6 4.2 -0.8 3.8 -1.2 3.4 -1.5 2.9 -1.8 2.3 -2 1.6 -2.4 1 -2.6 0.3 -2.9 -0.4 -3.1 -1.1 -3.3 -1.6 -3.4 -2.2 -3.6 -2.6 -3.7 -2.9 -3.8 -3.2 -3.9 -3.3 -3.9 -3.3 -3.9 -3.2 -3.8 -2.9 -3.8 -2.6 -3.7 -2.2 -3.6 -1.6 -3.5 -1.1 -3.3 -0.4 -3 0.3 -2.9 1 -2.6 1.6 -2.4 2.3 -2.1 2.9 -1.8 3.4 -1.5 3.8 -1.2 4.2 -0.8 4.5 -0.5 4.5 -0.2 4.5 0.2 4.5 0.5 4.2 0.8 3.8 1.2 3.4 1.5 2.9 1.8 2.3 2.1 1.6 2.4 1 2.6 0.3 2.9 -0.4 3 -1.1 3.3 -1.6 3.5 -2.2 3.6 -2.6 3.7 -2.9 3.8 -3.2 3.8 -3.3 3.9 -3.3 3.9 -3.2 3.9 -2.9 3.8 -2.6 3.7 -2.2 3.6 -1.6 3.4 -1.1 3.3 -0.4 3.1 0.3 2.9 1 2.6 1.6 2.4 2.3 2 2.9 1.8 3.4 1.5 3.8 1.2 4.2 0.8 4.5 0.6 4.5 0.1 4.6 -0.1 4.4 -0.6 4.2 -0.8 3.8 -1.2 3.4 -1.5 2.9 -1.8 2.3 -2 1.6 -2.4 1 -2.6 0.3 -2.9 -0.4 -3.1 -1 -3.3 -1.7 -3.4 -2.1 -3.6 -2.7 -3.7 -2.9 -3.8 -3.2 -3.9 -3.3 -3.9 -3.3 -3.9 -3.2 -3.8 -2.9 -3.8 -2.6 -3.7 -2.2 -3.6 -1.6 -3.5 -1.1 -3.3 -0.4 -3 0.3 -2.9 1 -2.6 1.6 -2.4 2.3 -2.1 2.9 -1.8 3.4 -1.5 3.9 -1.2 4.1 -0.8 4.5 -0.5 4.5 -0.2 4.6 0.2 4.4 0.5 4.2 0.8 3.8 1.2 3.4 1.5 2.9 1.8 2.3 2.1 1.7 2.4 0.9 2.6 0.3 2.9 -0.4 3 -1 3.3 -1.7 3.5 -2.1 3.6 -2.6 3.7 -3 3.8 -3.2 3.8 -3.3 3.9 -3.3 3.9 -3.2 3.9 -2.9 3.8 -2.6 3.7 -2.2 3.6 -1.6 3.4 -1.1 3.3 -0.3 3.1 0.2 2.9 1 2.6 1.6 2.4 2.3 2 2.9 1.8 3.4 1.5 3.9 1.2 4.2 0.8 4.4 0.6 4.5 0.1 4.6 -0.1 4.4 -0.6 4.2 -0.8 3.9 -1.2 3.4 -1.5 2.8 -1.8 2.3 -2 1.7 -2.4 0.9 -2.6 0.3 -2.9 -0.4 -3.1 -1 -3.3 -1.7 -3.4 -2.1 -3.6 -2.6 -3.7 -3 -3.8 -3.2 -3.9 -3.3 -3.9 -3.3 -3.9 -3.1 -3.8 -3 -3.8 -2.6 -3.7 -2.2 -3.6 -1.6 -3.5 -1 -3.3 -0.4 -3 0.2 -2.9 1 -2.6 1.7 -2.4 2.2 -2.1 2.9 -1.8 3.4 -1.5 3.9 -1.2 4.2 -0.8 4.4 -0.5 4.5 -0.2 4.6 0.2 4.4 0.5 4.2 0.8 3.9 1.2 3.4 1.5 2.9 1.8 2.2 2.1 1.7 2.4 1 2.6 0.2 2.9 -0.4 3 -1 3.3 -1.6 3.5 -2.2 3.6 -2.6 3.7 -3 3.8 -3.1 3.8 -3.3 3.9 -3.3 3.9 -3.2 3.9 -3 3.8 -2.6 3.7 -2.1 3.6 -1.7 3.4 -1 3.3 -0.4 3.1 0.3 2.9 0.9 2.6 1.7 2.4 2.3 2 2.8 1.8 3.4 1.5 3.9 1.2 4.2 0.8 4.4 0.6 4.6 0.1 4.5 -0.1 4.4 -0.6 4.2 -0.8 3.9 -1.2 3.4 -1.5 2.9 -1.8 2.3 -2 1.6 -2.4 1 -2.6 0.2 -2.9 -0.4 -3.1 -1 -3.3 -1.6 -3.4 -2.2 -3.6 -2.6 -3.7 -3 -3.8 -3.1 -3.9 -3.3 -3.9 -3.3 -3.9 -3.2 -3.8 -3 -3.8 -2.6 -3.7 -2.1 -3.6 -1.7 -3.5 -1 -3.3 -0.4 -3 0.3 -2.9 0.9 -2.6 1.7 -2.4 2.3 -2.1 2.8 -1.8 3.5 -1.5 3.8 -1.2 4.2 -0.8 4.4 -0.5 4.6 -0.2 4.5 0.2 4.4 0.5 4.2 0.8 3.9 1.2 3.4 1.5 2.9 1.8 2.3 2.1 1.6 2.4 1 2.6 0.3 2.9 -0.4 3 -1.1 3.3 -1.6 3.5 -2.2 3.6 -2.6 3.7 -2.9 3.8 -3.2 3.8 -3.3 3.9 -3.3 3.9 -3.2 3.9 -3 3.8 -2.6 3.7 -2.1 3.6 -1.7 3.4 -1 3.3 -0.4 3.1 0.3 2.9 0.9 2.6 1.7 2.4 2.3 2 2.9 1.8 3.4 1.5 3.8 1.2 4.2 0.8 4.4 0.6 4.6 0.1 4.5 -0.1 4.5 -0.6 4.2 -0.8 3.8 -1.2 3.4 -1.5 2.9 -1.8 2.3 -2 1.6 -2.4 1 -2.6 0.3 -2.9 -0.4 -3.1 -1.1 -3.3 -1.6 -3.4 -2.2 -3.6 -2.6 -3.7 -2.9 -3.8 -3.2 -3.9 -3.3 -3.9 -3.3 -3.9 -3.2 -3.8 -2.9 -3.8 -2.6 -3.7 -2.2 -3.6 -1.6 -3.5 -1.1 -3.3 -0.4 -3 0.3 -2.9 1 -2.6 1.6 -2.4 2.3 -2.1 2.9 -1.8 3.4 -1.5 3.8 -1.2 4.2 -0.8 4.4 -0.5 4.6 -0.2 4.5 0.2 4.5 0.5 4.2 0.8 3.8 1.2 3.4 1.5 2.9 1.8 2.3 2.1 1.6 2.4 1 2.6 0.3 2.9 -0.4 3 -1.1 3.3 -1.6 3.5 -2.2 3.6 -2.6 3.7 -2.9 3.8 -3.2 3.8 -3.3 3.9 -3.3 3.9 -3.2 3.9 -2.9 3.8 -2.6 3.7 -2.2 3.6 -1.6 3.4 -1.1 3.3 -0.4 3.1 0.3 2.9 1 2.6 1.6 2.4 2.3 2 2.9 1.8 3.4 1.5 3.8 1.2 4.2 0.8 4.5 0.6 4.5 0.1 4.6 -0.1 4.4 -0.6 4.2 -0.8 3.8 -1.2 3.4 -1.5 2.9 -1.8 2.3 -2 1.6 -2.4 1 -2.6 0.3 -2.9 -0.4 -3.1 -1 -3.3 -1.7 -3.4 -2.1 -3.6 -2.7 -3.7 -2.9 -3.8 -3.2 -3.9 -3.3 -3.9 -3.3 -3.9 -3.2 -3.8 -2.9 -3.8 -2.6 -3.7 -2.2 -3.6 -1.6 -3.5 -1.1 -3.3 -0.4 -3 0.3 -2.9 1 -2.6 1.6 -2.4 2.3 -2.1 2.9 -1.8 3.4 -1.5 3.9 -1.2 4.1 -0.8 4.5 -0.5 4.5 -0.2 4.6 0.2 4.4 0.5 4.2 0.8 3.8 1.2 3.4 1.5 2.9 1.8 2.3 2.1 1.7 2.4 0.9 2.6 0.3 2.9 -0.4 3 -1 3.3 -1.7 3.5 -2.1 3.6 -2.6 3.7 -3 3.8 -3.2 3.8 -3.3 3.9 -3.3 3.9 -3.2 3.9 -2.9 3.8 -2.6 3.7 -2.2 3.6 -1.6 3.4 -1.1 3.3 -0.4 3.1 0.3 2.9 1 2.6 1.6 2.4 2.3 2 2.9 1.8 3.4 1.5 3.9 1.2 4.2 0.8 4.4 0.6 4.5 0.1 4.6 -0.1 4.4 -0.6 4.2 -0.8 3.8 -1.2 3.5 -1.5 2.8 -1.8 2.3 -2 1.7 -2.4 0.9 -2.6 0.3 -2.9 -0.4 -3.1 -1 -3.3 -1.7 -3.4 -2.1 -3.6 -2.6 -3.7 -3 -3.8 -3.2 -3.9 -3.3 -3.9M154.7 169.1l-3.3 -3.8 -3.1 -3.9 -3 -3.8 -2.6 -3.7 -2.2 -3.6 -1.6 -3.5 -1 -3.2 -0.4 -3.1 0.2 -2.9 1 -2.6 1.7 -2.4 2.2 -2.1 2.9 -1.8 3.4 -1.5 3.9 -1.1 4.2 -0.9 4.4 -0.5 4.5 -0.2 4.6 0.2 4.4 0.5 4.2 0.9 3.9 1.1 3.4 1.5 2.9 1.8 2.2 2.1 1.7 2.4 1 2.6 0.2 2.9 -0.4 3.1 -1 3.2 -1.6 3.5 -2.2 3.6 -2.6 3.7 -3 3.8 -3.1 3.9 -3.3 3.8 -3.3 3.9 -3.2 3.9 -3 3.8 -2.6 3.7 -2.1 3.6 -1.7 3.4 -1 3.3 -0.4 3.1 0.3 2.9 0.9 2.6 1.7 2.4 2.3 2.1 2.8 1.8 3.4 1.5 3.9 1.1 4.2 0.9 4.4 0.5 4.6 0.1 4.5 -0.1 4.4 -0.5 4.2 -0.9 3.9 -1.1 3.4 -1.5 2.9 -1.8 2.3 -2.1 1.6 -2.4 1 -2.6 0.2 -2.9 -0.4 -3.1 -1 -3.3 -1.6 -3.4 -2.2 -3.6 -2.6 -3.7 -2.9 -3.8 -3.2 -3.9 -3.3 -3.9 -3.3 -3.8 -3.2 -3.9 -3 -3.8 -2.6 -3.7 -2.1 -3.6 -1.7 -3.5 -1 -3.2 -0.4 -3.1 0.3 -2.9 0.9 -2.6 1.7 -2.4 2.3 -2.1 2.8 -1.8 3.5 -1.5 3.8 -1.1 4.2 -0.9 4.4 -0.5 4.6 -0.2 4.5 0.2 4.4 0.5 4.2 0.9 3.9 1.1 3.4 1.5 2.9 1.8 2.3 2.1 1.6 2.4 1 2.6 0.3 2.9 -0.4 3.1 -1.1 3.2 -1.6 3.5 -2.2 3.6 -2.6 3.7 -2.9 3.8 -3.2 3.9 -3.3 3.8 -3.3 3.9 -3.2 3.9 -3 3.8 -2.6 3.7 -2.1 3.6 -1.7 3.4 -1 3.3 -0.4 3.1 0.3 2.9 0.9 2.6 1.7 2.4 2.3 2.1 2.9 1.8 3.4 1.5 3.8 1.1 4.2 0.9 4.4 0.5 4.6 0.1 4.5 -0.1 4.5 -0.5 4.2 -0.9 3.8 -1.1 3.4 -1.5 2.9 -1.8 2.3 -2.1 1.6 -2.4 1 -2.6 0.3 -2.9 -0.4 -3.1 -1.1 -3.3 -1.6 -3.4 -2.2 -3.6 -2.6 -3.7 -2.9 -3.8 -3.2 -3.9 -3.3 -3.9 -3.3 -3.8 -3.2 -3.9 -2.9 -3.8 -2.6 -3.7 -2.2 -3.6 -1.6 -3.5 -1.1 -3.2 -0.4 -3.1 0.3 -2.9 1 -2.6 1.6 -2.4 2.3 -2.1 2.9 -1.8 3.4 -1.5 3.8 -1.1 4.2 -0.9 4.5 -0.5 4.5 -0.2 4.5 0.2 4.5 0.5 4.2 0.9 3.8 1.1 3.4 1.5 2.9 1.8 2.3 2.1 1.6 2.4 1 2.6 0.3 2.9 -0.4 3.1 -1.1 3.2 -1.6 3.5 -2.2 3.6 -2.6 3.7 -2.9 3.8 -3.2 3.9 -3.3 3.8 -3.3 3.9 -3.2 3.9 -2.9 3.8 -2.6 3.7 -2.2 3.6 -1.6 3.4 -1.1 3.3 -0.4 3.1 0.3 2.9 1 2.6 1.6 2.4 2.3 2.1 2.9 1.8 3.4 1.5 3.8 1.1 4.2 0.9 4.5 0.5 4.5 0.1 4.6 -0.1 4.4 -0.5 4.2 -0.9 3.8 -1.1 3.4 -1.5 2.9 -1.8 2.3 -2.1 1.6 -2.4 1 -2.6 0.3 -2.9 -0.4 -3.1 -1 -3.3 -1.7 -3.4 -2.1 -3.6 -2.7 -3.7 -2.9 -3.8 -3.2 -3.9 -3.3 -3.9 -3.3 -3.8 -3.2 -3.9 -2.9 -3.8 -2.6 -3.7 -2.2 -3.6 -1.6 -3.5 -1.1 -3.2 -0.4 -3.1 0.3 -2.9 1 -2.6 1.6 -2.4 2.3 -2.1 2.9 -1.8 3.4 -1.5 3.9 -1.1 4.1 -0.9 4.5 -0.5 4.5 -0.2 4.6 0.2 4.4 0.5 4.2 0.9 3.8 1.1 3.4 1.5 2.9 1.8 2.3 2.1 1.7 2.4 0.9 2.6 0.3 2.9 -0.4 3.1 -1 3.2 -1.7 3.5 -2.1 3.6 -2.6 3.7 -3 3.8 -3.2 3.9 -3.3 3.8 -3.3 3.9 -3.2 3.9 -2.9 3.8 -2.6 3.7 -2.2 3.6 -1.6 3.4 -1.1 3.3 -0.3 3.1 0.2 2.9 1 2.6 1.6 2.4 2.3 2.1 2.9 1.8 3.4 1.5 3.9 1.1 4.2 0.9 4.4 0.5 4.5 0.1 4.6 -0.1 4.4 -0.5 4.2 -0.9 3.9 -1.1 3.4 -1.5 2.8 -1.8 2.3 -2.1 1.7 -2.4 0.9 -2.6 0.3 -2.9 -0.4 -3.1 -1 -3.3 -1.7 -3.4 -2.1 -3.6 -2.6 -3.7 -3 -3.8 -3.2 -3.9 -3.3 -3.9 -3.3 -3.8 -3.1 -3.9 -3 -3.8 -2.6 -3.7 -2.2 -3.6 -1.6 -3.5 -1 -3.2 -0.4 -3.1 0.2 -2.9 1 -2.6 1.7 -2.4 2.2 -2.1 2.9 -1.8 3.4 -1.5 3.9 -1.1 4.2 -0.9 4.4 -0.5 4.5 -0.2 4.6 0.2 4.4 0.5 4.2 0.9 3.9 1.1 3.4 1.5 2.9 1.8 2.2 2.1 1.7 2.4 1 2.6 0.2 2.9 -0.4 3.1 -1 3.2 -1.6 3.5 -2.2 3.6 -2.6 3.7 -3 3.8 -3.1 3.9 -3.3 3.8 -3.3 3.9 -3.2 3.9 -3 3.8 -2.6 3.7 -2.1 3.6 -1.7 3.4 -1 3.3 -0.4 3.1 0.3 2.9 0.9 2.6 1.7 2.4 2.3 2.1 2.8 1.8 3.4 1.5 3.9 1.1 4.2 0.9 4.4 0.5 4.6 0.1 4.5 -0.1 4.4 -0.5 4.2 -0.9 3.9 -1.1 3.4 -1.5 2.9 -1.8 2.3 -2.1 1.6 -2.4 1 -2.6 0.2 -2.9 -0.4 -3.1 -1 -3.3 -1.6 -3.4 -2.2 -3.6 -2.6 -3.7 -3 -3.8 -3.1 -3.9 -3.3 -3.9 -3.3 -3.8 -3.2 -3.9 -3 -3.8 -2.6 -3.7 -2.1 -3.6 -1.7 -3.5 -1 -3.2 -0.4 -3.1 0.3 -2.9 0.9 -2.6 1.7 -2.4 2.3 -2.1 2.8 -1.8 3.5 -1.5 3.8 -1.1 4.2 -0.9 4.4 -0.5 4.6 -0.2 4.5 0.2 4.4 0.5 4.2 0.9 3.9 1.1 3.4 1.5 2.9 1.8 2.3 2.1 1.6 2.4 1 2.6 0.3 2.9 -0.4 3.1 -1.1 3.2 -1.6 3.5 -2.2 3.6 -2.6 3.7 -2.9 3.8 -3.2 3.9 -3.3 3.8 -3.3 3.9 -3.2 3.9 -3 3.8 -2.6 3.7 -2.1 3.6 -1.7 3.4 -1 3.3 -0.4 3.1 0.3 2.9 0.9 2.6 1.7 2.4 2.3 2.1 2.9 1.8 3.4 1.5 3.8 1.1 4.2 0.9 4.4 0.5 4.6 0.1 4.5 -0.1 4.5 -0.5 4.2 -0.9 3.8 -1.1 3.4 -1.5 2.9 -1.8 2.3 -2.1 1.6 -2.4 1 -2.6 0.3 -2.9 -0.4 -3.1 -1.1 -3.3 -1.6 -3.4 -2.2 -3.6 -2.6 -3.7 -2.9 -3.8 -3.2 -3.9 -3.3 -3.9 -3.3 -3.8 -3.2 -3.9 -2.9 -3.8 -2.6 -3.7 -2.2 -3.6 -1.6 -3.5 -1.1 -3.2 -0.4 -3.1 0.3 -2.9 1 -2.6 1.6 -2.4 2.3 -2.1 2.9 -1.8 3.4 -1.5 3.8 -1.1 4.2 -0.9 4.4 -0.5 4.6 -0.2 4.5 0.2 4.5 0.5 4.2 0.9 3.8 1.1 3.4 1.5 2.9 1.8 2.3 2.1 1.6 2.4 1 2.6 0.3 2.9 -0.4 3.1 -1.1 3.2 -1.6 3.5 -2.2 3.6 -2.6 3.7 -2.9 3.8 -3.2 3.9 -3.3 3.8 -3.3 3.9 -3.2 3.9 -2.9 3.8 -2.6 3.7 -2.2 3.6 -1.6 3.4 -1.1 3.3 -0.4 3.1 0.3 2.9 1 2.6 1.6 2.4 2.3 2.1 2.9 1.8 3.4 1.5 3.8 1.1 4.2 0.9 4.5 0.5 4.5 0.1 4.6 -0.1 4.4 -0.5 4.2 -0.9 3.8 -1.1 3.4 -1.5 2.9 -1.8 2.3 -2.1 1.6 -2.4 1 -2.6 0.3 -2.9 -0.4 -3.1 -1 -3.3 -1.7 -3.4 -2.1 -3.6 -2.7 -3.7 -2.9 -3.8 -3.2 -3.9 -3.3 -3.9 -3.3 -3.8 -3.2 -3.9 -2.9 -3.8 -2.6 -3.7 -2.2 -3.6 -1.6 -3.5 -1.1 -3.2 -0.4 -3.1 0.3 -2.9 1 -2.6 1.6 -2.4 2.3 -2.1 2.9 -1.8 3.4 -1.5 3.9 -1.1 4.1 -0.9 4.5 -0.5 4.5 -0.2 4.6 0.2 4.4 0.5 4.2 0.9 3.8 1.1 3.4 1.5 2.9 1.8 2.3 2.1 1.7 2.4 0.9 2.6 0.3 2.9 -0.4 3.1 -1 3.2 -1.7 3.5 -2.1 3.6 -2.6 3.7 -3 3.8 -3.2 3.9 -3.3 3.8 -3.3 3.9 -3.2 3.9 -2.9 3.8 -2.6 3.7 -2.2 3.6 -1.6 3.4 -1.1 3.3 -0.4 3.1 0.3 2.9 1 2.6 1.6 2.4 2.3 2.1 2.9 1.8 3.4 1.5 3.9 1.1 4.2 0.9 4.4 0.5 4.5 0.1 4.6 -0.1 4.4 -0.5 4.2 -0.9 3.8 -1.1 3.5 -1.5 2.8 -1.8 2.3 -2.1 1.7 -2.4 0.9 -2.6 0.3 -2.9 -0.4 -3.1 -1 -3.3 -1.7 -3.4 -2.1 -3.6 -2.6 -3.7 -3 -3.8 -3.2 -3.9 -3.3 -3.9M154.7 195.9l-3.3 -3.9 -3.1 -3.9 -3 -3.8 -2.6 -3.7 -2.2 -3.6 -1.6 -3.4 -1 -3.3 -0.4 -3.1 0.2 -2.9 1 -2.6 1.7 -2.4 2.2 -2.1 2.9 -1.8 3.4 -1.5 3.9 -1.1 4.2 -0.9 4.4 -0.5 4.5 -0.1 4.6 0.1 4.4 0.5 4.2 0.9 3.9 1.1 3.4 1.5 2.9 1.8 2.2 2.1 1.7 2.4 1 2.6 0.2 2.9 -0.4 3.1 -1 3.3 -1.6 3.4 -2.2 3.6 -2.6 3.7 -3 3.8 -3.1 3.9 -3.3 3.9 -3.3 3.8 -3.2 3.9 -3 3.8 -2.6 3.7 -2.1 3.6 -1.7 3.5 -1 3.2 -0.4 3.1 0.3 2.9 0.9 2.6 1.7 2.4 2.3 2.1 2.8 1.8 3.4 1.5 3.9 1.1 4.2 0.9 4.4 0.5 4.6 0.2 4.5 -0.2 4.4 -0.5 4.2 -0.9 3.9 -1.1 3.4 -1.5 2.9 -1.8 2.3 -2.1 1.6 -2.4 1 -2.6 0.2 -2.9 -0.4 -3.1 -1 -3.2 -1.6 -3.5 -2.2 -3.6 -2.6 -3.7 -2.9 -3.8 -3.2 -3.9 -3.3 -3.8 -3.3 -3.9 -3.2 -3.9 -3 -3.8 -2.6 -3.7 -2.1 -3.6 -1.7 -3.4 -1 -3.3 -0.4 -3.1 0.3 -2.9 0.9 -2.6 1.7 -2.4 2.3 -2.1 2.8 -1.8 3.5 -1.5 3.8 -1.1 4.2 -0.9 4.4 -0.5 4.6 -0.1 4.5 0.1 4.4 0.5 4.2 0.9 3.9 1.1 3.4 1.5 2.9 1.8 2.3 2.1 1.6 2.4 1 2.6 0.3 2.9 -0.4 3.1 -1.1 3.3 -1.6 3.4 -2.2 3.6 -2.6 3.7 -2.9 3.8 -3.2 3.9 -3.3 3.9 -3.3 3.8 -3.2 3.9 -3 3.8 -2.6 3.7 -2.1 3.6 -1.7 3.5 -1 3.2 -0.4 3.1 0.3 2.9 0.9 2.6 1.7 2.4 2.3 2.1 2.9 1.8 3.4 1.5 3.8 1.1 4.2 0.9 4.4 0.5 4.6 0.2 4.5 -0.2 4.5 -0.5 4.2 -0.9 3.8 -1.1 3.4 -1.5 2.9 -1.8 2.3 -2.1 1.6 -2.4 1 -2.6 0.3 -2.9 -0.4 -3.1 -1.1 -3.2 -1.6 -3.5 -2.2 -3.6 -2.6 -3.7 -2.9 -3.8 -3.2 -3.9 -3.3 -3.8 -3.3 -3.9 -3.2 -3.9 -2.9 -3.8 -2.6 -3.7 -2.2 -3.6 -1.6 -3.4 -1.1 -3.3 -0.4 -3.1 0.3 -2.9 1 -2.6 1.6 -2.4 2.3 -2.1 2.9 -1.8 3.4 -1.5 3.8 -1.1 4.2 -0.9 4.5 -0.5 4.5 -0.1 4.5 0.1 4.5 0.5 4.2 0.9 3.8 1.1 3.4 1.5 2.9 1.8 2.3 2.1 1.6 2.4 1 2.6 0.3 2.9 -0.4 3.1 -1.1 3.3 -1.6 3.4 -2.2 3.6 -2.6 3.7 -2.9 3.8 -3.2 3.9 -3.3 3.9 -3.3 3.8 -3.2 3.9 -2.9 3.8 -2.6 3.7 -2.2 3.6 -1.6 3.5 -1.1 3.2 -0.4 3.1 0.3 2.9 1 2.6 1.6 2.4 2.3 2.1 2.9 1.8 3.4 1.5 3.8 1.1 4.2 0.9 4.5 0.5 4.5 0.2 4.6 -0.2 4.4 -0.5 4.2 -0.9 3.8 -1.1 3.4 -1.5 2.9 -1.8 2.3 -2.1 1.6 -2.4 1 -2.6 0.3 -2.9 -0.4 -3.1 -1 -3.2 -1.7 -3.5 -2.1 -3.6 -2.7 -3.7 -2.9 -3.8 -3.2 -3.9 -3.3 -3.8 -3.3 -3.9 -3.2 -3.9 -2.9 -3.8 -2.6 -3.7 -2.2 -3.6 -1.6 -3.4 -1.1 -3.3 -0.4 -3.1 0.3 -2.9 1 -2.6 1.6 -2.4 2.3 -2.1 2.9 -1.8 3.4 -1.5 3.9 -1.1 4.1 -0.9 4.5 -0.5 4.5 -0.1 4.6 0.1 4.4 0.5 4.2 0.9 3.8 1.1 3.4 1.5 2.9 1.8 2.3 2.1 1.7 2.4 0.9 2.6 0.3 2.9 -0.4 3.1 -1 3.3 -1.7 3.4 -2.1 3.6 -2.6 3.7 -3 3.8 -3.2 3.9 -3.3 3.9 -3.3 3.8 -3.2 3.9 -2.9 3.8 -2.6 3.7 -2.2 3.6 -1.6 3.5 -1.1 3.2 -0.3 3.1 0.2 2.9 1 2.6 1.6 2.4 2.3 2.1 2.9 1.8 3.4 1.5 3.9 1.1 4.2 0.9 4.4 0.5 4.5 0.2 4.6 -0.2 4.4 -0.5 4.2 -0.9 3.9 -1.1 3.4 -1.5 2.8 -1.8 2.3 -2.1 1.7 -2.4 0.9 -2.6 0.3 -2.9 -0.4 -3.1 -1 -3.2 -1.7 -3.5 -2.1 -3.6 -2.6 -3.7 -3 -3.8 -3.2 -3.9 -3.3 -3.8 -3.3 -3.9 -3.1 -3.9 -3 -3.8 -2.6 -3.7 -2.2 -3.6 -1.6 -3.4 -1 -3.3 -0.4 -3.1 0.2 -2.9 1 -2.6 1.7 -2.4 2.2 -2.1 2.9 -1.8 3.4 -1.5 3.9 -1.1 4.2 -0.9 4.4 -0.5 4.5 -0.1 4.6 0.1 4.4 0.5 4.2 0.9 3.9 1.1 3.4 1.5 2.9 1.8 2.2 2.1 1.7 2.4 1 2.6 0.2 2.9 -0.4 3.1 -1 3.3 -1.6 3.4 -2.2 3.6 -2.6 3.7 -3 3.8 -3.1 3.9 -3.3 3.9 -3.3 3.8 -3.2 3.9 -3 3.8 -2.6 3.7 -2.1 3.6 -1.7 3.5 -1 3.2 -0.4 3.1 0.3 2.9 0.9 2.6 1.7 2.4 2.3 2.1 2.8 1.8 3.4 1.5 3.9 1.1 4.2 0.9 4.4 0.5 4.6 0.2 4.5 -0.2 4.4 -0.5 4.2 -0.9 3.9 -1.1 3.4 -1.5 2.9 -1.8 2.3 -2.1 1.6 -2.4 1 -2.6 0.2 -2.9 -0.4 -3.1 -1 -3.2 -1.6 -3.5 -2.2 -3.6 -2.6 -3.7 -3 -3.8 -3.1 -3.9 -3.3 -3.8 -3.3 -3.9 -3.2 -3.9 -3 -3.8 -2.6 -3.7 -2.1 -3.6 -1.7 -3.4 -1 -3.3 -0.4 -3.1 0.3 -2.9 0.9 -2.6 1.7 -2.4 2.3 -2.1 2.8 -1.8 3.5 -1.5 3.8 -1.1 4.2 -0.9 4.4 -0.5 4.6 -0.1 4.5 0.1 4.4 0.5 4.2 0.9 3.9 1.1 3.4 1.5 2.9 1.8 2.3 2.1 1.6 2.4 1 2.6 0.3 2.9 -0.4 3.1 -1.1 3.3 -1.6 3.4 -2.2 3.6 -2.6 3.7 -2.9 3.8 -3.2 3.9 -3.3 3.9 -3.3 3.8 -3.2 3.9 -3 3.8 -2.6 3.7 -2.1 3.6 -1.7 3.5 -1 3.2 -0.4 3.1 0.3 2.9 0.9 2.6 1.7 2.4 2.3 2.1 2.9 1.8 3.4 1.5 3.8 1.1 4.2 0.9 4.4 0.5 4.6 0.2 4.5 -0.2 4.5 -0.5 4.2 -0.9 3.8 -1.1 3.4 -1.5 2.9 -1.8 2.3 -2.1 1.6 -2.4 1 -2.6 0.3 -2.9 -0.4 -3.1 -1.1 -3.2 -1.6 -3.5 -2.2 -3.6 -2.6 -3.7 -2.9 -3.8 -3.2 -3.9 -3.3 -3.8 -3.3 -3.9 -3.2 -3.9 -2.9 -3.8 -2.6 -3.7 -2.2 -3.6 -1.6 -3.4 -1.1 -3.3 -0.4 -3.1 0.3 -2.9 1 -2.6 1.6 -2.4 2.3 -2.1 2.9 -1.8 3.4 -1.5 3.8 -1.1 4.2 -0.9 4.4 -0.5 4.6 -0.1 4.5 0.1 4.5 0.5 4.2 0.9 3.8 1.1 3.4 1.5 2.9 1.8 2.3 2.1 1.6 2.4 1 2.6 0.3 2.9 -0.4 3.1 -1.1 3.3 -1.6 3.4 -2.2 3.6 -2.6 3.7 -2.9 3.8 -3.2 3.9 -3.3 3.9 -3.3 3.8 -3.2 3.9 -2.9 3.8 -2.6 3.7 -2.2 3.6 -1.6 3.5 -1.1 3.2 -0.4 3.1 0.3 2.9 1 2.6 1.6 2.4 2.3 2.1 2.9 1.8 3.4 1.5 3.8 1.1 4.2 0.9 4.5 0.5 4.5 0.2 4.6 -0.2 4.4 -0.5 4.2 -0.9 3.8 -1.1 3.4 -1.5 2.9 -1.8 2.3 -2.1 1.6 -2.4 1 -2.6 0.3 -2.9 -0.4 -3.1 -1 -3.2 -1.7 -3.5 -2.1 -3.6 -2.7 -3.7 -2.9 -3.8 -3.2 -3.9 -3.3 -3.8 -3.3 -3.9 -3.2 -3.9 -2.9 -3.8 -2.6 -3.7 -2.2 -3.6 -1.6 -3.4 -1.1 -3.3 -0.4 -3.1 0.3 -2.9 1 -2.6 1.6 -2.4 2.3 -2.1 2.9 -1.8 3.4 -1.5 3.9 -1.1 4.1 -0.9 4.5 -0.5 4.5 -0.1 4.6 0.1 4.4 0.5 4.2 0.9 3.8 1.1 3.4 1.5 2.9 1.8 2.3 2.1 1.7 2.4 0.9 2.6 0.3 2.9 -0.4 3.1 -1 3.3 -1.7 3.4 -2.1 3.6 -2.6 3.7 -3 3.8 -3.2 3.9 -3.3 3.9 -3.3 3.8 -3.2 3.9 -2.9 3.8 -2.6 3.7 -2.2 3.6 -1.6 3.5 -1.1 3.2 -0.4 3.1 0.3 2.9 1 2.6 1.6 2.4 2.3 2.1 2.9 1.8 3.4 1.5 3.9 1.1 4.2 0.9 4.4 0.5 4.5 0.2 4.6 -0.2 4.4 -0.5 4.2 -0.9 3.8 -1.1 3.5 -1.5 2.8 -1.8 2.3 -2.1 1.7 -2.4 0.9 -2.6 0.3 -2.9 -0.4 -3.1 -1 -3.2 -1.7 -3.5 -2.1 -3.6 -2.6 -3.7 -3 -3.8 -3.2 -3.9 -3.3 -3.8M154.7 222.6l-3.3 -3.9 -3.1 -3.9 -3 -3.8 -2.6 -3.7 -2.2 -3.6 -1.6 -3.4 -1 -3.3 -0.4 -3.1 0.2 -2.9 1 -2.6 1.7 -2.4 2.2 -2 2.9 -1.8 3.4 -1.5 3.9 -1.2 4.2 -0.8 4.4 -0.6 4.5 -0.1 4.6 0.1 4.4 0.6 4.2 0.8 3.9 1.2 3.4 1.5 2.9 1.8 2.2 2 1.7 2.4 1 2.6 0.2 2.9 -0.4 3.1 -1 3.3 -1.6 3.4 -2.2 3.6 -2.6 3.7 -3 3.8 -3.1 3.9 -3.3 3.9 -3.3 3.9 -3.2 3.8 -3 3.8 -2.6 3.7 -2.1 3.6 -1.7 3.5 -1 3.3 -0.4 3 0.3 2.9 0.9 2.6 1.7 2.4 2.3 2.1 2.8 1.8 3.4 1.5 3.9 1.2 4.2 0.8 4.4 0.5 4.6 0.2 4.5 -0.2 4.4 -0.5 4.2 -0.8 3.9 -1.2 3.4 -1.5 2.9 -1.8 2.3 -2.1 1.6 -2.4 1 -2.6 0.2 -2.9 -0.4 -3 -1 -3.3 -1.6 -3.5 -2.2 -3.6 -2.6 -3.7 -2.9 -3.8 -3.2 -3.8 -3.3 -3.9 -3.3 -3.9 -3.2 -3.9 -3 -3.8 -2.6 -3.7 -2.1 -3.6 -1.7 -3.4 -1 -3.3 -0.4 -3.1 0.3 -2.9 0.9 -2.6 1.7 -2.4 2.3 -2 2.8 -1.8 3.5 -1.5 3.8 -1.2 4.2 -0.8 4.4 -0.6 4.6 -0.1 4.5 0.1 4.4 0.6 4.2 0.8 3.9 1.2 3.4 1.5 2.9 1.8 2.3 2 1.6 2.4 1 2.6 0.3 2.9 -0.4 3.1 -1.1 3.3 -1.6 3.4 -2.2 3.6 -2.6 3.7 -2.9 3.8 -3.2 3.9 -3.3 3.9 -3.3 3.9 -3.2 3.8 -3 3.8 -2.6 3.7 -2.1 3.6 -1.7 3.5 -1 3.3 -0.4 3 0.3 2.9 0.9 2.6 1.7 2.4 2.3 2.1 2.9 1.8 3.4 1.5 3.8 1.2 4.2 0.8 4.4 0.5 4.6 0.2 4.5 -0.2 4.5 -0.5 4.2 -0.8 3.8 -1.2 3.4 -1.5 2.9 -1.8 2.3 -2.1 1.6 -2.4 1 -2.6 0.3 -2.9 -0.4 -3 -1.1 -3.3 -1.6 -3.5 -2.2 -3.6 -2.6 -3.7 -2.9 -3.8 -3.2 -3.8 -3.3 -3.9 -3.3 -3.9 -3.2 -3.9 -2.9 -3.8 -2.6 -3.7 -2.2 -3.6 -1.6 -3.4 -1.1 -3.3 -0.4 -3.1 0.3 -2.9 1 -2.6 1.6 -2.4 2.3 -2 2.9 -1.8 3.4 -1.5 3.8 -1.2 4.2 -0.8 4.5 -0.6 4.5 -0.1 4.5 0.1 4.5 0.6 4.2 0.8 3.8 1.2 3.4 1.5 2.9 1.8 2.3 2 1.6 2.4 1 2.6 0.3 2.9 -0.4 3.1 -1.1 3.3 -1.6 3.4 -2.2 3.6 -2.6 3.7 -2.9 3.8 -3.2 3.9 -3.3 3.9 -3.3 3.9 -3.2 3.8 -2.9 3.8 -2.6 3.7 -2.2 3.6 -1.6 3.5 -1.1 3.3 -0.4 3 0.3 2.9 1 2.6 1.6 2.4 2.3 2.1 2.9 1.8 3.4 1.5 3.8 1.2 4.2 0.8 4.5 0.5 4.5 0.2 4.6 -0.2 4.4 -0.5 4.2 -0.8 3.8 -1.2 3.4 -1.5 2.9 -1.8 2.3 -2.1 1.6 -2.4 1 -2.6 0.3 -2.9 -0.4 -3 -1 -3.3 -1.7 -3.5 -2.1 -3.6 -2.7 -3.7 -2.9 -3.8 -3.2 -3.8 -3.3 -3.9 -3.3 -3.9 -3.2 -3.9 -2.9 -3.8 -2.6 -3.7 -2.2 -3.6 -1.6 -3.4 -1.1 -3.3 -0.4 -3.1 0.3 -2.9 1 -2.6 1.6 -2.4 2.3 -2 2.9 -1.8 3.4 -1.5 3.9 -1.2 4.1 -0.8 4.5 -0.6 4.5 -0.1 4.6 0.1 4.4 0.6 4.2 0.8 3.8 1.2 3.4 1.5 2.9 1.8 2.3 2 1.7 2.4 0.9 2.6 0.3 2.9 -0.4 3.1 -1 3.3 -1.7 3.4 -2.1 3.6 -2.6 3.7 -3 3.8 -3.2 3.9 -3.3 3.9 -3.3 3.9 -3.2 3.8 -2.9 3.8 -2.6 3.7 -2.2 3.6 -1.6 3.5 -1.1 3.3 -0.3 3 0.2 2.9 1 2.6 1.6 2.4 2.3 2.1 2.9 1.8 3.4 1.5 3.9 1.2 4.2 0.8 4.4 0.5 4.5 0.2 4.6 -0.2 4.4 -0.5 4.2 -0.8 3.9 -1.2 3.4 -1.5 2.8 -1.8 2.3 -2.1 1.7 -2.4 0.9 -2.6 0.3 -2.9 -0.4 -3 -1 -3.3 -1.7 -3.5 -2.1 -3.6 -2.6 -3.7 -3 -3.8 -3.2 -3.8 -3.3 -3.9 -3.3 -3.9 -3.1 -3.9 -3 -3.8 -2.6 -3.7 -2.2 -3.6 -1.6 -3.4 -1 -3.3 -0.4 -3.1 0.2 -2.9 1 -2.6 1.7 -2.4 2.2 -2 2.9 -1.8 3.4 -1.5 3.9 -1.2 4.2 -0.8 4.4 -0.6 4.5 -0.1 4.6 0.1 4.4 0.6 4.2 0.8 3.9 1.2 3.4 1.5 2.9 1.8 2.2 2 1.7 2.4 1 2.6 0.2 2.9 -0.4 3.1 -1 3.3 -1.6 3.4 -2.2 3.6 -2.6 3.7 -3 3.8 -3.1 3.9 -3.3 3.9 -3.3 3.9 -3.2 3.8 -3 3.8 -2.6 3.7 -2.1 3.6 -1.7 3.5 -1 3.3 -0.4 3 0.3 2.9 0.9 2.6 1.7 2.4 2.3 2.1 2.8 1.8 3.4 1.5 3.9 1.2 4.2 0.8 4.4 0.5 4.6 0.2 4.5 -0.2 4.4 -0.5 4.2 -0.8 3.9 -1.2 3.4 -1.5 2.9 -1.8 2.3 -2.1 1.6 -2.4 1 -2.6 0.2 -2.9 -0.4 -3 -1 -3.3 -1.6 -3.5 -2.2 -3.6 -2.6 -3.7 -3 -3.8 -3.1 -3.8 -3.3 -3.9 -3.3 -3.9 -3.2 -3.9 -3 -3.8 -2.6 -3.7 -2.1 -3.6 -1.7 -3.4 -1 -3.3 -0.4 -3.1 0.3 -2.9 0.9 -2.6 1.7 -2.4 2.3 -2 2.8 -1.8 3.5 -1.5 3.8 -1.2 4.2 -0.8 4.4 -0.6 4.6 -0.1 4.5 0.1 4.4 0.6 4.2 0.8 3.9 1.2 3.4 1.5 2.9 1.8 2.3 2 1.6 2.4 1 2.6 0.3 2.9 -0.4 3.1 -1.1 3.3 -1.6 3.4 -2.2 3.6 -2.6 3.7 -2.9 3.8 -3.2 3.9 -3.3 3.9 -3.3 3.9 -3.2 3.8 -3 3.8 -2.6 3.7 -2.1 3.6 -1.7 3.5 -1 3.3 -0.4 3 0.3 2.9 0.9 2.6 1.7 2.4 2.3 2.1 2.9 1.8 3.4 1.5 3.8 1.2 4.2 0.8 4.4 0.5 4.6 0.2 4.5 -0.2 4.5 -0.5 4.2 -0.8 3.8 -1.2 3.4 -1.5 2.9 -1.8 2.3 -2.1 1.6 -2.4 1 -2.6 0.3 -2.9 -0.4 -3 -1.1 -3.3 -1.6 -3.5 -2.2 -3.6 -2.6 -3.7 -2.9 -3.8 -3.2 -3.8 -3.3 -3.9 -3.3 -3.9 -3.2 -3.9 -2.9 -3.8 -2.6 -3.7 -2.2 -3.6 -1.6 -3.4 -1.1 -3.3 -0.4 -3.1 0.3 -2.9 1 -2.6 1.6 -2.4 2.3 -2 2.9 -1.8 3.4 -1.5 3.8 -1.2 4.2 -0.8 4.4 -0.6 4.6 -0.1 4.5 0.1 4.5 0.6 4.2 0.8 3.8 1.2 3.4 1.5 2.9 1.8 2.3 2 1.6 2.4 1 2.6 0.3 2.9 -0.4 3.1 -1.1 3.3 -1.6 3.4 -2.2 3.6 -2.6 3.7 -2.9 3.8 -3.2 3.9 -3.3 3.9 -3.3 3.9 -3.2 3.8 -2.9 3.8 -2.6 3.7 -2.2 3.6 -1.6 3.5 -1.1 3.3 -0.4 3 0.3 2.9 1 2.6 1.6 2.4 2.3 2.1 2.9 1.8 3.4 1.5 3.8 1.2 4.2 0.8 4.5 0.5 4.5 0.2 4.6 -0.2 4.4 -0.5 4.2 -0.8 3.8 -1.2 3.4 -1.5 2.9 -1.8 2.3 -2.1 1.6 -2.4 1 -2.6 0.3 -2.9 -0.4 -3 -1 -3.3 -1.7 -3.5 -2.1 -3.6 -2.7 -3.7 -2.9 -3.8 -3.2 -3.8 -3.3 -3.9 -3.3 -3.9 -3.2 -3.9 -2.9 -3.8 -2.6 -3.7 -2.2 -3.6 -1.6 -3.4 -1.1 -3.3 -0.4 -3.1 0.3 -2.9 1 -2.6 1.6 -2.4 2.3 -2 2.9 -1.8 3.4 -1.5 3.9 -1.2 4.1 -0.8 4.5 -0.6 4.5 -0.1 4.6 0.1 4.4 0.6 4.2 0.8 3.8 1.2 3.4 1.5 2.9 1.8 2.3 2 1.7 2.4 0.9 2.6 0.3 2.9 -0.4 3.1 -1 3.3 -1.7 3.4 -2.1 3.6 -2.6 3.7 -3 3.8 -3.2 3.9 -3.3 3.9 -3.3 3.9 -3.2 3.8 -2.9 3.8 -2.6 3.7 -2.2 3.6 -1.6 3.5 -1.1 3.3 -0.4 3 0.3 2.9 1 2.6 1.6 2.4 2.3 2.1 2.9 1.8 3.4 1.5 3.9 1.2 4.2 0.8 4.4 0.5 4.5 0.2 4.6 -0.2 4.4 -0.5 4.2 -0.8 3.8 -1.2 3.5 -1.5 2.8 -1.8 2.3 -2.1 1.7 -2.4 0.9 -2.6 0.3 -2.9 -0.4 -3 -1 -3.3 -1.7 -3.5 -2.1 -3.6 -2.6 -3.7 -3 -3.8 -3.2 -3.8 -3.3 -3.9M154.7 249.3l-3.3 -3.9 -3.1 -3.8 -3 -3.8 -2.6 -3.8 -2.2 -3.5 -1.6 -3.5 -1 -3.3 -0.4 -3.1 0.2 -2.8 1 -2.7 1.7 -2.3 2.2 -2.1 2.9 -1.8 3.4 -1.5 3.9 -1.2 4.2 -0.8 4.4 -0.5 4.5 -0.2 4.6 0.2 4.4 0.5 4.2 0.8 3.9 1.2 3.4 1.5 2.9 1.8 2.2 2.1 1.7 2.3 1 2.7 0.2 2.8 -0.4 3.1 -1 3.3 -1.6 3.5 -2.2 3.5 -2.6 3.8 -3 3.8 -3.1 3.8 -3.3 3.9 -3.3 3.9 -3.2 3.8 -3 3.8 -2.6 3.8 -2.1 3.5 -1.7 3.5 -1 3.3 -0.4 3.1 0.3 2.8 0.9 2.7 1.7 2.3 2.3 2.1 2.8 1.8 3.4 1.5 3.9 1.2 4.2 0.8 4.4 0.5 4.6 0.2 4.5 -0.2 4.4 -0.5 4.2 -0.8 3.9 -1.2 3.4 -1.5 2.9 -1.8 2.3 -2.1 1.6 -2.3 1 -2.7 0.2 -2.8 -0.4 -3.1 -1 -3.3 -1.6 -3.5 -2.2 -3.5 -2.6 -3.8 -2.9 -3.8 -3.2 -3.8 -3.3 -3.9 -3.3 -3.9 -3.2 -3.8 -3 -3.8 -2.6 -3.8 -2.1 -3.5 -1.7 -3.5 -1 -3.3 -0.4 -3.1 0.3 -2.8 0.9 -2.7 1.7 -2.3 2.3 -2.1 2.8 -1.8 3.5 -1.5 3.8 -1.2 4.2 -0.8 4.4 -0.5 4.6 -0.2 4.5 0.2 4.4 0.5 4.2 0.8 3.9 1.2 3.4 1.5 2.9 1.8 2.3 2.1 1.6 2.3 1 2.7 0.3 2.8 -0.4 3.1 -1.1 3.3 -1.6 3.5 -2.2 3.5 -2.6 3.8 -2.9 3.8 -3.2 3.8 -3.3 3.9 -3.3 3.9 -3.2 3.8 -3 3.8 -2.6 3.8 -2.1 3.5 -1.7 3.5 -1 3.3 -0.4 3.1 0.3 2.8 0.9 2.7 1.7 2.3 2.3 2.1 2.9 1.8 3.4 1.5 3.8 1.2 4.2 0.8 4.4 0.5 4.6 0.2 4.5 -0.2 4.5 -0.5 4.2 -0.8 3.8 -1.2 3.4 -1.5 2.9 -1.8 2.3 -2.1 1.6 -2.3 1 -2.7 0.3 -2.8 -0.4 -3.1 -1.1 -3.3 -1.6 -3.5 -2.2 -3.5 -2.6 -3.8 -2.9 -3.8 -3.2 -3.8 -3.3 -3.9 -3.3 -3.9 -3.2 -3.8 -2.9 -3.8 -2.6 -3.8 -2.2 -3.5 -1.6 -3.5 -1.1 -3.3 -0.4 -3.1 0.3 -2.8 1 -2.7 1.6 -2.3 2.3 -2.1 2.9 -1.8 3.4 -1.5 3.8 -1.2 4.2 -0.8 4.5 -0.5 4.5 -0.2 4.5 0.2 4.5 0.5 4.2 0.8 3.8 1.2 3.4 1.5 2.9 1.8 2.3 2.1 1.6 2.3 1 2.7 0.3 2.8 -0.4 3.1 -1.1 3.3 -1.6 3.5 -2.2 3.5 -2.6 3.8 -2.9 3.8 -3.2 3.8 -3.3 3.9 -3.3 3.9 -3.2 3.8 -2.9 3.8 -2.6 3.8 -2.2 3.5 -1.6 3.5 -1.1 3.3 -0.4 3.1 0.3 2.8 1 2.7 1.6 2.3 2.3 2.1 2.9 1.8 3.4 1.5 3.8 1.2 4.2 0.8 4.5 0.5 4.5 0.2 4.6 -0.2 4.4 -0.5 4.2 -0.8 3.8 -1.2 3.4 -1.5 2.9 -1.8 2.3 -2.1 1.6 -2.3 1 -2.7 0.3 -2.8 -0.4 -3.1 -1 -3.3 -1.7 -3.5 -2.1 -3.5 -2.7 -3.8 -2.9 -3.8 -3.2 -3.8 -3.3 -3.9 -3.3 -3.9 -3.2 -3.8 -2.9 -3.8 -2.6 -3.8 -2.2 -3.5 -1.6 -3.5 -1.1 -3.3 -0.4 -3.1 0.3 -2.8 1 -2.7 1.6 -2.3 2.3 -2.1 2.9 -1.8 3.4 -1.5 3.9 -1.2 4.1 -0.8 4.5 -0.5 4.5 -0.2 4.6 0.2 4.4 0.5 4.2 0.8 3.8 1.2 3.4 1.5 2.9 1.8 2.3 2.1 1.7 2.3 0.9 2.7 0.3 2.8 -0.4 3.1 -1 3.3 -1.7 3.5 -2.1 3.5 -2.6 3.8 -3 3.8 -3.2 3.8 -3.3 3.9 -3.3 3.9 -3.2 3.8 -2.9 3.8 -2.6 3.8 -2.2 3.5 -1.6 3.5 -1.1 3.3 -0.3 3.1 0.2 2.8 1 2.7 1.6 2.3 2.3 2.1 2.9 1.8 3.4 1.5 3.9 1.2 4.2 0.8 4.4 0.5 4.5 0.2 4.6 -0.2 4.4 -0.5 4.2 -0.8 3.9 -1.2 3.4 -1.5 2.8 -1.8 2.3 -2.1 1.7 -2.3 0.9 -2.7 0.3 -2.8 -0.4 -3.1 -1 -3.3 -1.7 -3.5 -2.1 -3.5 -2.6 -3.8 -3 -3.8 -3.2 -3.8 -3.3 -3.9 -3.3 -3.9 -3.1 -3.8 -3 -3.8 -2.6 -3.8 -2.2 -3.5 -1.6 -3.5 -1 -3.3 -0.4 -3.1 0.2 -2.8 1 -2.7 1.7 -2.3 2.2 -2.1 2.9 -1.8 3.4 -1.5 3.9 -1.2 4.2 -0.8 4.4 -0.5 4.5 -0.2 4.6 0.2 4.4 0.5 4.2 0.8 3.9 1.2 3.4 1.5 2.9 1.8 2.2 2.1 1.7 2.3 1 2.7 0.2 2.8 -0.4 3.1 -1 3.3 -1.6 3.5 -2.2 3.5 -2.6 3.8 -3 3.8 -3.1 3.8 -3.3 3.9 -3.3 3.9 -3.2 3.8 -3 3.8 -2.6 3.8 -2.1 3.5 -1.7 3.5 -1 3.3 -0.4 3.1 0.3 2.8 0.9 2.7 1.7 2.3 2.3 2.1 2.8 1.8 3.4 1.5 3.9 1.2 4.2 0.8 4.4 0.5 4.6 0.2 4.5 -0.2 4.4 -0.5 4.2 -0.8 3.9 -1.2 3.4 -1.5 2.9 -1.8 2.3 -2.1 1.6 -2.3 1 -2.7 0.2 -2.8 -0.4 -3.1 -1 -3.3 -1.6 -3.5 -2.2 -3.5 -2.6 -3.8 -3 -3.8 -3.1 -3.8 -3.3 -3.9 -3.3 -3.9 -3.2 -3.8 -3 -3.8 -2.6 -3.8 -2.1 -3.5 -1.7 -3.5 -1 -3.3 -0.4 -3.1 0.3 -2.8 0.9 -2.7 1.7 -2.3 2.3 -2.1 2.8 -1.8 3.5 -1.5 3.8 -1.2 4.2 -0.8 4.4 -0.5 4.6 -0.2 4.5 0.2 4.4 0.5 4.2 0.8 3.9 1.2 3.4 1.5 2.9 1.8 2.3 2.1 1.6 2.3 1 2.7 0.3 2.8 -0.4 3.1 -1.1 3.3 -1.6 3.5 -2.2 3.5 -2.6 3.8 -2.9 3.8 -3.2 3.8 -3.3 3.9 -3.3 3.9 -3.2 3.8 -3 3.8 -2.6 3.8 -2.1 3.5 -1.7 3.5 -1 3.3 -0.4 3.1 0.3 2.8 0.9 2.7 1.7 2.3 2.3 2.1 2.9 1.8 3.4 1.5 3.8 1.2 4.2 0.8 4.4 0.5 4.6 0.2 4.5 -0.2 4.5 -0.5 4.2 -0.8 3.8 -1.2 3.4 -1.5 2.9 -1.8 2.3 -2.1 1.6 -2.3 1 -2.7 0.3 -2.8 -0.4 -3.1 -1.1 -3.3 -1.6 -3.5 -2.2 -3.5 -2.6 -3.8 -2.9 -3.8 -3.2 -3.8 -3.3 -3.9 -3.3 -3.9 -3.2 -3.8 -2.9 -3.8 -2.6 -3.8 -2.2 -3.5 -1.6 -3.5 -1.1 -3.3 -0.4 -3.1 0.3 -2.8 1 -2.7 1.6 -2.3 2.3 -2.1 2.9 -1.8 3.4 -1.5 3.8 -1.2 4.2 -0.8 4.4 -0.5 4.6 -0.2 4.5 0.2 4.5 0.5 4.2 0.8 3.8 1.2 3.4 1.5 2.9 1.8 2.3 2.1 1.6 2.3 1 2.7 0.3 2.8 -0.4 3.1 -1.1 3.3 -1.6 3.5 -2.2 3.5 -2.6 3.8 -2.9 3.8 -3.2 3.8 -3.3 3.9 -3.3 3.9 -3.2 3.8 -2.9 3.8 -2.6 3.8 -2.2 3.5 -1.6 3.5 -1.1 3.3 -0.4 3.1 0.3 2.8 1 2.7 1.6 2.3 2.3 2.1 2.9 1.8 3.4 1.5 3.8 1.2 4.2 0.8 4.5 0.5 4.5 0.2 4.6 -0.2 4.4 -0.5 4.2 -0.8 3.8 -1.2 3.4 -1.5 2.9 -1.8 2.3 -2.1 1.6 -2.3 1 -2.7 0.3 -2.8 -0.4 -3.1 -1 -3.3 -1.7 -3.5 -2.1 -3.5 -2.7 -3.8 -2.9 -3.8 -3.2 -3.8 -3.3 -3.9 -3.3 -3.9 -3.2 -3.8 -2.9 -3.8 -2.6 -3.8 -2.2 -3.5 -1.6 -3.5 -1.1 -3.3 -0.4 -3.1 0.3 -2.8 1 -2.7 1.6 -2.3 2.3 -2.1 2.9 -1.8 3.4 -1.5 3.9 -1.2 4.1 -0.8 4.5 -0.5 4.5 -0.2 4.6 0.2 4.4 0.5 4.2 0.8 3.8 1.2 3.4 1.5 2.9 1.8 2.3 2.1 1.7 2.3 0.9 2.7 0.3 2.8 -0.4 3.1 -1 3.3 -1.7 3.5 -2.1 3.5 -2.6 3.8 -3 3.8 -3.2 3.8 -3.3 3.9 -3.3 3.9 -3.2 3.8 -2.9 3.8 -2.6 3.8 -2.2 3.5 -1.6 3.5 -1.1 3.3 -0.4 3.1 0.3 2.8 1 2.7 1.6 2.3 2.3 2.1 2.9 1.8 3.4 1.5 3.9 1.2 4.2 0.8 4.4 0.5 4.5 0.2 4.6 -0.2 4.4 -0.5 4.2 -0.8 3.8 -1.2 3.5 -1.5 2.8 -1.8 2.3 -2.1 1.7 -2.3 0.9 -2.7 0.3 -2.8 -0.4 -3.1 -1 -3.3 -1.7 -3.5 -2.1 -3.5 -2.6 -3.8 -3 -3.8 -3.2 -3.8 -3.3 -3.9M154.7 276.0l-3.3 -3.9 -3.1 -3.8 -3 -3.8 -2.6 -3.7 -2.2 -3.6 -1.6 -3.5 -1 -3.3 -0.4 -3 0.2 -2.9 1 -2.6 1.7 -2.4 2.2 -2.1 2.9 -1.8 3.4 -1.5 3.9 -1.2 4.2 -0.8 4.4 -0.5 4.5 -0.2 4.6 0.2 4.4 0.5 4.2 0.8 3.9 1.2 3.4 1.5 2.9 1.8 2.2 2.1 1.7 2.4 1 2.6 0.2 2.9 -0.4 3 -1 3.3 -1.6 3.5 -2.2 3.6 -2.6 3.7 -3 3.8 -3.1 3.8 -3.3 3.9 -3.3 3.9 -3.2 3.9 -3 3.8 -2.6 3.7 -2.1 3.6 -1.7 3.4 -1 3.3 -0.4 3.1 0.3 2.9 0.9 2.6 1.7 2.4 2.3 2 2.8 1.8 3.4 1.5 3.9 1.2 4.2 0.8 4.4 0.6 4.6 0.1 4.5 -0.1 4.4 -0.6 4.2 -0.8 3.9 -1.2 3.4 -1.5 2.9 -1.8 2.3 -2 1.6 -2.4 1 -2.6 0.2 -2.9 -0.4 -3.1 -1 -3.3 -1.6 -3.4 -2.2 -3.6 -2.6 -3.7 -2.9 -3.8 -3.2 -3.9 -3.3 -3.9 -3.3 -3.9 -3.2 -3.8 -3 -3.8 -2.6 -3.7 -2.1 -3.6 -1.7 -3.5 -1 -3.3 -0.4 -3 0.3 -2.9 0.9 -2.6 1.7 -2.4 2.3 -2.1 2.8 -1.8 3.5 -1.5 3.8 -1.2 4.2 -0.8 4.4 -0.5 4.6 -0.2 4.5 0.2 4.4 0.5 4.2 0.8 3.9 1.2 3.4 1.5 2.9 1.8 2.3 2.1 1.6 2.4 1 2.6 0.3 2.9 -0.4 3 -1.1 3.3 -1.6 3.5 -2.2 3.6 -2.6 3.7 -2.9 3.8 -3.2 3.8 -3.3 3.9 -3.3 3.9 -3.2 3.9 -3 3.8 -2.6 3.7 -2.1 3.6 -1.7 3.4 -1 3.3 -0.4 3.1 0.3 2.9 0.9 2.6 1.7 2.4 2.3 2 2.9 1.8 3.4 1.5 3.8 1.2 4.2 0.8 4.4 0.6 4.6 0.1 4.5 -0.1 4.5 -0.6 4.2 -0.8 3.8 -1.2 3.4 -1.5 2.9 -1.8 2.3 -2 1.6 -2.4 1 -2.6 0.3 -2.9 -0.4 -3.1 -1.1 -3.3 -1.6 -3.4 -2.2 -3.6 -2.6 -3.7 -2.9 -3.8 -3.2 -3.9 -3.3 -3.9 -3.3 -3.9 -3.2 -3.8 -2.9 -3.8 -2.6 -3.7 -2.2 -3.6 -1.6 -3.5 -1.1 -3.3 -0.4 -3 0.3 -2.9 1 -2.6 1.6 -2.4 2.3 -2.1 2.9 -1.8 3.4 -1.5 3.8 -1.2 4.2 -0.8 4.5 -0.5 4.5 -0.2 4.5 0.2 4.5 0.5 4.2 0.8 3.8 1.2 3.4 1.5 2.9 1.8 2.3 2.1 1.6 2.4 1 2.6 0.3 2.9 -0.4 3 -1.1 3.3 -1.6 3.5 -2.2 3.6 -2.6 3.7 -2.9 3.8 -3.2 3.8 -3.3 3.9 -3.3 3.9 -3.2 3.9 -2.9 3.8 -2.6 3.7 -2.2 3.6 -1.6 3.4 -1.1 3.3 -0.4 3.1 0.3 2.9 1 2.6 1.6 2.4 2.3 2 2.9 1.8 3.4 1.5 3.8 1.2 4.2 0.8 4.5 0.6 4.5 0.1 4.6 -0.1 4.4 -0.6 4.2 -0.8 3.8 -1.2 3.4 -1.5 2.9 -1.8 2.3 -2 1.6 -2.4 1 -2.6 0.3 -2.9 -0.4 -3.1 -1 -3.3 -1.7 -3.4 -2.1 -3.6 -2.7 -3.7 -2.9 -3.8 -3.2 -3.9 -3.3 -3.9 -3.3 -3.9 -3.2 -3.8 -2.9 -3.8 -2.6 -3.7 -2.2 -3.6 -1.6 -3.5 -1.1 -3.3 -0.4 -3 0.3 -2.9 1 -2.6 1.6 -2.4 2.3 -2.1 2.9 -1.8 3.4 -1.5 3.9 -1.2 4.1 -0.8 4.5 -0.5 4.5 -0.2 4.6 0.2 4.4 0.5 4.2 0.8 3.8 1.2 3.4 1.5 2.9 1.8 2.3 2.1 1.7 2.4 0.9 2.6 0.3 2.9 -0.4 3 -1 3.3 -1.7 3.5 -2.1 3.6 -2.6 3.7 -3 3.8 -3.2 3.8 -3.3 3.9 -3.3 3.9 -3.2 3.9 -2.9 3.8 -2.6 3.7 -2.2 3.6 -1.6 3.4 -1.1 3.3 -0.3 3.1 0.2 2.9 1 2.6 1.6 2.4 2.3 2 2.9 1.8 3.4 1.5 3.9 1.2 4.2 0.8 4.4 0.6 4.5 0.1 4.6 -0.1 4.4 -0.6 4.2 -0.8 3.9 -1.2 3.4 -1.5 2.8 -1.8 2.3 -2 1.7 -2.4 0.9 -2.6 0.3 -2.9 -0.4 -3.1 -1 -3.3 -1.7 -3.4 -2.1 -3.6 -2.6 -3.7 -3 -3.8 -3.2 -3.9 -3.3 -3.9 -3.3 -3.9 -3.1 -3.8 -3 -3.8 -2.6 -3.7 -2.2 -3.6 -1.6 -3.5 -1 -3.3 -0.4 -3 0.2 -2.9 1 -2.6 1.7 -2.4 2.2 -2.1 2.9 -1.8 3.4 -1.5 3.9 -1.2 4.2 -0.8 4.4 -0.5 4.5 -0.2 4.6 0.2 4.4 0.5 4.2 0.8 3.9 1.2 3.4 1.5 2.9 1.8 2.2 2.1 1.7 2.4 1 2.6 0.2 2.9 -0.4 3 -1 3.3 -1.6 3.5 -2.2 3.6 -2.6 3.7 -3 3.8 -3.1 3.8 -3.3 3.9 -3.3 3.9 -3.2 3.9 -3 3.8 -2.6 3.7 -2.1 3.6 -1.7 3.4 -1 3.3 -0.4 3.1 0.3 2.9 0.9 2.6 1.7 2.4 2.3 2 2.8 1.8 3.4 1.5 3.9 1.2 4.2 0.8 4.4 0.6 4.6 0.1 4.5 -0.1 4.4 -0.6 4.2 -0.8 3.9 -1.2 3.4 -1.5 2.9 -1.8 2.3 -2 1.6 -2.4 1 -2.6 0.2 -2.9 -0.4 -3.1 -1 -3.3 -1.6 -3.4 -2.2 -3.6 -2.6 -3.7 -3 -3.8 -3.1 -3.9 -3.3 -3.9 -3.3 -3.9 -3.2 -3.8 -3 -3.8 -2.6 -3.7 -2.1 -3.6 -1.7 -3.5 -1 -3.3 -0.4 -3 0.3 -2.9 0.9 -2.6 1.7 -2.4 2.3 -2.1 2.8 -1.8 3.5 -1.5 3.8 -1.2 4.2 -0.8 4.4 -0.5 4.6 -0.2 4.5 0.2 4.4 0.5 4.2 0.8 3.9 1.2 3.4 1.5 2.9 1.8 2.3 2.1 1.6 2.4 1 2.6 0.3 2.9 -0.4 3 -1.1 3.3 -1.6 3.5 -2.2 3.6 -2.6 3.7 -2.9 3.8 -3.2 3.8 -3.3 3.9 -3.3 3.9 -3.2 3.9 -3 3.8 -2.6 3.7 -2.1 3.6 -1.7 3.4 -1 3.3 -0.4 3.1 0.3 2.9 0.9 2.6 1.7 2.4 2.3 2 2.9 1.8 3.4 1.5 3.8 1.2 4.2 0.8 4.4 0.6 4.6 0.1 4.5 -0.1 4.5 -0.6 4.2 -0.8 3.8 -1.2 3.4 -1.5 2.9 -1.8 2.3 -2 1.6 -2.4 1 -2.6 0.3 -2.9 -0.4 -3.1 -1.1 -3.3 -1.6 -3.4 -2.2 -3.6 -2.6 -3.7 -2.9 -3.8 -3.2 -3.9 -3.3 -3.9 -3.3 -3.9 -3.2 -3.8 -2.9 -3.8 -2.6 -3.7 -2.2 -3.6 -1.6 -3.5 -1.1 -3.3 -0.4 -3 0.3 -2.9 1 -2.6 1.6 -2.4 2.3 -2.1 2.9 -1.8 3.4 -1.5 3.8 -1.2 4.2 -0.8 4.4 -0.5 4.6 -0.2 4.5 0.2 4.5 0.5 4.2 0.8 3.8 1.2 3.4 1.5 2.9 1.8 2.3 2.1 1.6 2.4 1 2.6 0.3 2.9 -0.4 3 -1.1 3.3 -1.6 3.5 -2.2 3.6 -2.6 3.7 -2.9 3.8 -3.2 3.8 -3.3 3.9 -3.3 3.9 -3.2 3.9 -2.9 3.8 -2.6 3.7 -2.2 3.6 -1.6 3.4 -1.1 3.3 -0.4 3.1 0.3 2.9 1 2.6 1.6 2.4 2.3 2 2.9 1.8 3.4 1.5 3.8 1.2 4.2 0.8 4.5 0.6 4.5 0.1 4.6 -0.1 4.4 -0.6 4.2 -0.8 3.8 -1.2 3.4 -1.5 2.9 -1.8 2.3 -2 1.6 -2.4 1 -2.6 0.3 -2.9 -0.4 -3.1 -1 -3.3 -1.7 -3.4 -2.1 -3.6 -2.7 -3.7 -2.9 -3.8 -3.2 -3.9 -3.3 -3.9 -3.3 -3.9 -3.2 -3.8 -2.9 -3.8 -2.6 -3.7 -2.2 -3.6 -1.6 -3.5 -1.1 -3.3 -0.4 -3 0.3 -2.9 1 -2.6 1.6 -2.4 2.3 -2.1 2.9 -1.8 3.4 -1.5 3.9 -1.2 4.1 -0.8 4.5 -0.5 4.5 -0.2 4.6 0.2 4.4 0.5 4.2 0.8 3.8 1.2 3.4 1.5 2.9 1.8 2.3 2.1 1.7 2.4 0.9 2.6 0.3 2.9 -0.4 3 -1 3.3 -1.7 3.5 -2.1 3.6 -2.6 3.7 -3 3.8 -3.2 3.8 -3.3 3.9 -3.3 3.9 -3.2 3.9 -2.9 3.8 -2.6 3.7 -2.2 3.6 -1.6 3.4 -1.1 3.3 -0.4 3.1 0.3 2.9 1 2.6 1.6 2.4 2.3 2 2.9 1.8 3.4 1.5 3.9 1.2 4.2 0.8 4.4 0.6 4.5 0.1 4.6 -0.1 4.4 -0.6 4.2 -0.8 3.8 -1.2 3.5 -1.5 2.8 -1.8 2.3 -2 1.7 -2.4 0.9 -2.6 0.3 -2.9 -0.4 -3.1 -1 -3.3 -1.7 -3.4 -2.1 -3.6 -2.6 -3.7 -3 -3.8 -3.2 -3.9 -3.3 -3.9M154.7 302.7l-3.3 -3.8 -3.1 -3.9 -3 -3.8 -2.6 -3.7 -2.2 -3.6 -1.6 -3.5 -1 -3.2 -0.4 -3.1 0.2 -2.9 1 -2.6 1.7 -2.4 2.2 -2.1 2.9 -1.8 3.4 -1.5 3.9 -1.1 4.2 -0.9 4.4 -0.5 4.5 -0.2 4.6 0.2 4.4 0.5 4.2 0.9 3.9 1.1 3.4 1.5 2.9 1.8 2.2 2.1 1.7 2.4 1 2.6 0.2 2.9 -0.4 3.1 -1 3.2 -1.6 3.5 -2.2 3.6 -2.6 3.7 -3 3.8 -3.1 3.9 -3.3 3.8 -3.3 3.9 -3.2 3.9 -3 3.8 -2.6 3.7 -2.1 3.6 -1.7 3.4 -1 3.3 -0.4 3.1 0.3 2.9 0.9 2.6 1.7 2.4 2.3 2.1 2.8 1.8 3.4 1.5 3.9 1.1 4.2 0.9 4.4 0.5 4.6 0.1 4.5 -0.1 4.4 -0.5 4.2 -0.9 3.9 -1.1 3.4 -1.5 2.9 -1.8 2.3 -2.1 1.6 -2.4 1 -2.6 0.2 -2.9 -0.4 -3.1 -1 -3.3 -1.6 -3.4 -2.2 -3.6 -2.6 -3.7 -2.9 -3.8 -3.2 -3.9 -3.3 -3.9 -3.3 -3.8 -3.2 -3.9 -3 -3.8 -2.6 -3.7 -2.1 -3.6 -1.7 -3.5 -1 -3.2 -0.4 -3.1 0.3 -2.9 0.9 -2.6 1.7 -2.4 2.3 -2.1 2.8 -1.8 3.5 -1.5 3.8 -1.1 4.2 -0.9 4.4 -0.5 4.6 -0.2 4.5 0.2 4.4 0.5 4.2 0.9 3.9 1.1 3.4 1.5 2.9 1.8 2.3 2.1 1.6 2.4 1 2.6 0.3 2.9 -0.4 3.1 -1.1 3.2 -1.6 3.5 -2.2 3.6 -2.6 3.7 -2.9 3.8 -3.2 3.9 -3.3 3.8 -3.3 3.9 -3.2 3.9 -3 3.8 -2.6 3.7 -2.1 3.6 -1.7 3.4 -1 3.3 -0.4 3.1 0.3 2.9 0.9 2.6 1.7 2.4 2.3 2.1 2.9 1.8 3.4 1.5 3.8 1.1 4.2 0.9 4.4 0.5 4.6 0.1 4.5 -0.1 4.5 -0.5 4.2 -0.9 3.8 -1.1 3.4 -1.5 2.9 -1.8 2.3 -2.1 1.6 -2.4 1 -2.6 0.3 -2.9 -0.4 -3.1 -1.1 -3.3 -1.6 -3.4 -2.2 -3.6 -2.6 -3.7 -2.9 -3.8 -3.2 -3.9 -3.3 -3.9 -3.3 -3.8 -3.2 -3.9 -2.9 -3.8 -2.6 -3.7 -2.2 -3.6 -1.6 -3.5 -1.1 -3.2 -0.4 -3.1 0.3 -2.9 1 -2.6 1.6 -2.4 2.3 -2.1 2.9 -1.8 3.4 -1.5 3.8 -1.1 4.2 -0.9 4.5 -0.5 4.5 -0.2 4.5 0.2 4.5 0.5 4.2 0.9 3.8 1.1 3.4 1.5 2.9 1.8 2.3 2.1 1.6 2.4 1 2.6 0.3 2.9 -0.4 3.1 -1.1 3.2 -1.6 3.5 -2.2 3.6 -2.6 3.7 -2.9 3.8 -3.2 3.9 -3.3 3.8 -3.3 3.9 -3.2 3.9 -2.9 3.8 -2.6 3.7 -2.2 3.6 -1.6 3.4 -1.1 3.3 -0.4 3.1 0.3 2.9 1 2.6 1.6 2.4 2.3 2.1 2.9 1.8 3.4 1.5 3.8 1.1 4.2 0.9 4.5 0.5 4.5 0.1 4.6 -0.1 4.4 -0.5 4.2 -0.9 3.8 -1.1 3.4 -1.5 2.9 -1.8 2.3 -2.1 1.6 -2.4 1 -2.6 0.3 -2.9 -0.4 -3.1 -1 -3.3 -1.7 -3.4 -2.1 -3.6 -2.7 -3.7 -2.9 -3.8 -3.2 -3.9 -3.3 -3.9 -3.3 -3.8 -3.2 -3.9 -2.9 -3.8 -2.6 -3.7 -2.2 -3.6 -1.6 -3.5 -1.1 -3.2 -0.4 -3.1 0.3 -2.9 1 -2.6 1.6 -2.4 2.3 -2.1 2.9 -1.8 3.4 -1.5 3.9 -1.1 4.1 -0.9 4.5 -0.5 4.5 -0.2 4.6 0.2 4.4 0.5 4.2 0.9 3.8 1.1 3.4 1.5 2.9 1.8 2.3 2.1 1.7 2.4 0.9 2.6 0.3 2.9 -0.4 3.1 -1 3.2 -1.7 3.5 -2.1 3.6 -2.6 3.7 -3 3.8 -3.2 3.9 -3.3 3.8 -3.3 3.9 -3.2 3.9 -2.9 3.8 -2.6 3.7 -2.2 3.6 -1.6 3.4 -1.1 3.3 -0.3 3.1 0.2 2.9 1 2.6 1.6 2.4 2.3 2.1 2.9 1.8 3.4 1.5 3.9 1.1 4.2 0.9 4.4 0.5 4.5 0.1 4.6 -0.1 4.4 -0.5 4.2 -0.9 3.9 -1.1 3.4 -1.5 2.8 -1.8 2.3 -2.1 1.7 -2.4 0.9 -2.6 0.3 -2.9 -0.4 -3.1 -1 -3.3 -1.7 -3.4 -2.1 -3.6 -2.6 -3.7 -3 -3.8 -3.2 -3.9 -3.3 -3.9 -3.3 -3.8 -3.1 -3.9 -3 -3.8 -2.6 -3.7 -2.2 -3.6 -1.6 -3.5 -1 -3.2 -0.4 -3.1 0.2 -2.9 1 -2.6 1.7 -2.4 2.2 -2.1 2.9 -1.8 3.4 -1.5 3.9 -1.1 4.2 -0.9 4.4 -0.5 4.5 -0.2 4.6 0.2 4.4 0.5 4.2 0.9 3.9 1.1 3.4 1.5 2.9 1.8 2.2 2.1 1.7 2.4 1 2.6 0.2 2.9 -0.4 3.1 -1 3.2 -1.6 3.5 -2.2 3.6 -2.6 3.7 -3 3.8 -3.1 3.9 -3.3 3.8 -3.3 3.9 -3.2 3.9 -3 3.8 -2.6 3.7 -2.1 3.6 -1.7 3.4 -1 3.3 -0.4 3.1 0.3 2.9 0.9 2.6 1.7 2.4 2.3 2.1 2.8 1.8 3.4 1.5 3.9 1.1 4.2 0.9 4.4 0.5 4.6 0.1 4.5 -0.1 4.4 -0.5 4.2 -0.9 3.9 -1.1 3.4 -1.5 2.9 -1.8 2.3 -2.1 1.6 -2.4 1 -2.6 0.2 -2.9 -0.4 -3.1 -1 -3.3 -1.6 -3.4 -2.2 -3.6 -2.6 -3.7 -3 -3.8 -3.1 -3.9 -3.3 -3.9 -3.3 -3.8 -3.2 -3.9 -3 -3.8 -2.6 -3.7 -2.1 -3.6 -1.7 -3.5 -1 -3.2 -0.4 -3.1 0.3 -2.9 0.9 -2.6 1.7 -2.4 2.3 -2.1 2.8 -1.8 3.5 -1.5 3.8 -1.1 4.2 -0.9 4.4 -0.5 4.6 -0.2 4.5 0.2 4.4 0.5 4.2 0.9 3.9 1.1 3.4 1.5 2.9 1.8 2.3 2.1 1.6 2.4 1 2.6 0.3 2.9 -0.4 3.1 -1.1 3.2 -1.6 3.5 -2.2 3.6 -2.6 3.7 -2.9 3.8 -3.2 3.9 -3.3 3.8 -3.3 3.9 -3.2 3.9 -3 3.8 -2.6 3.7 -2.1 3.6 -1.7 3.4 -1 3.3 -0.4 3.1 0.3 2.9 0.9 2.6 1.7 2.4 2.3 2.1 2.9 1.8 3.4 1.5 3.8 1.1 4.2 0.9 4.4 0.5 4.6 0.1 4.5 -0.1 4.5 -0.5 4.2 -0.9 3.8 -1.1 3.4 -1.5 2.9 -1.8 2.3 -2.1 1.6 -2.4 1 -2.6 0.3 -2.9 -0.4 -3.1 -1.1 -3.3 -1.6 -3.4 -2.2 -3.6 -2.6 -3.7 -2.9 -3.8 -3.2 -3.9 -3.3 -3.9 -3.3 -3.8 -3.2 -3.9 -2.9 -3.8 -2.6 -3.7 -2.2 -3.6 -1.6 -3.5 -1.1 -3.2 -0.4 -3.1 0.3 -2.9 1 -2.6 1.6 -2.4 2.3 -2.1 2.9 -1.8 3.4 -1.5 3.8 -1.1 4.2 -0.9 4.4 -0.5 4.6 -0.2 4.5 0.2 4.5 0.5 4.2 0.9 3.8 1.1 3.4 1.5 2.9 1.8 2.3 2.1 1.6 2.4 1 2.6 0.3 2.9 -0.4 3.1 -1.1 3.2 -1.6 3.5 -2.2 3.6 -2.6 3.7 -2.9 3.8 -3.2 3.9 -3.3 3.8 -3.3 3.9 -3.2 3.9 -2.9 3.8 -2.6 3.7 -2.2 3.6 -1.6 3.4 -1.1 3.3 -0.4 3.1 0.3 2.9 1 2.6 1.6 2.4 2.3 2.1 2.9 1.8 3.4 1.5 3.8 1.1 4.2 0.9 4.5 0.5 4.5 0.1 4.6 -0.1 4.4 -0.5 4.2 -0.9 3.8 -1.1 3.4 -1.5 2.9 -1.8 2.3 -2.1 1.6 -2.4 1 -2.6 0.3 -2.9 -0.4 -3.1 -1 -3.3 -1.7 -3.4 -2.1 -3.6 -2.7 -3.7 -2.9 -3.8 -3.2 -3.9 -3.3 -3.9 -3.3 -3.8 -3.2 -3.9 -2.9 -3.8 -2.6 -3.7 -2.2 -3.6 -1.6 -3.5 -1.1 -3.2 -0.4 -3.1 0.3 -2.9 1 -2.6 1.6 -2.4 2.3 -2.1 2.9 -1.8 3.4 -1.5 3.9 -1.1 4.1 -0.9 4.5 -0.5 4.5 -0.2 4.6 0.2 4.4 0.5 4.2 0.9 3.8 1.1 3.4 1.5 2.9 1.8 2.3 2.1 1.7 2.4 0.9 2.6 0.3 2.9 -0.4 3.1 -1 3.2 -1.7 3.5 -2.1 3.6 -2.6 3.7 -3 3.8 -3.2 3.9 -3.3 3.8 -3.3 3.9 -3.2 3.9 -2.9 3.8 -2.6 3.7 -2.2 3.6 -1.6 3.4 -1.1 3.3 -0.4 3.1 0.3 2.9 1 2.6 1.6 2.4 2.3 2.1 2.9 1.8 3.4 1.5 3.9 1.1 4.2 0.9 4.4 0.5 4.5 0.1 4.6 -0.1 4.4 -0.5 4.2 -0.9 3.8 -1.1 3.5 -1.5 2.8 -1.8 2.3 -2.1 1.7 -2.4 0.9 -2.6 0.3 -2.9 -0.4 -3.1 -1 -3.3 -1.7 -3.4 -2.1 -3.6 -2.6 -3.7 -3 -3.8 -3.2 -3.9 -3.3 -3.9M154.7 329.5l-3.3 -3.9 -3.1 -3.9 -3 -3.8 -2.6 -3.7 -2.2 -3.6 -1.6 -3.4 -1 -3.3 -0.4 -3.1 0.2 -2.9 1 -2.6 1.7 -2.4 2.2 -2.1 2.9 -1.8 3.4 -1.5 3.9 -1.1 4.2 -0.9 4.4 -0.5 4.5 -0.1 4.6 0.1 4.4 0.5 4.2 0.9 3.9 1.1 3.4 1.5 2.9 1.8 2.2 2.1 1.7 2.4 1 2.6 0.2 2.9 -0.4 3.1 -1 3.3 -1.6 3.4 -2.2 3.6 -2.6 3.7 -3 3.8 -3.1 3.9 -3.3 3.9 -3.3 3.8 -3.2 3.9 -3 3.8 -2.6 3.7 -2.1 3.6 -1.7 3.5 -1 3.2 -0.4 3.1 0.3 2.9 0.9 2.6 1.7 2.4 2.3 2.1 2.8 1.8 3.4 1.5 3.9 1.1 4.2 0.9 4.4 0.5 4.6 0.2 4.5 -0.2 4.4 -0.5 4.2 -0.9 3.9 -1.1 3.4 -1.5 2.9 -1.8 2.3 -2.1 1.6 -2.4 1 -2.6 0.2 -2.9 -0.4 -3.1 -1 -3.2 -1.6 -3.5 -2.2 -3.6 -2.6 -3.7 -2.9 -3.8 -3.2 -3.9 -3.3 -3.8 -3.3 -3.9 -3.2 -3.9 -3 -3.8 -2.6 -3.7 -2.1 -3.6 -1.7 -3.4 -1 -3.3 -0.4 -3.1 0.3 -2.9 0.9 -2.6 1.7 -2.4 2.3 -2.1 2.8 -1.8 3.5 -1.5 3.8 -1.1 4.2 -0.9 4.4 -0.5 4.6 -0.1 4.5 0.1 4.4 0.5 4.2 0.9 3.9 1.1 3.4 1.5 2.9 1.8 2.3 2.1 1.6 2.4 1 2.6 0.3 2.9 -0.4 3.1 -1.1 3.3 -1.6 3.4 -2.2 3.6 -2.6 3.7 -2.9 3.8 -3.2 3.9 -3.3 3.9 -3.3 3.8 -3.2 3.9 -3 3.8 -2.6 3.7 -2.1 3.6 -1.7 3.5 -1 3.2 -0.4 3.1 0.3 2.9 0.9 2.6 1.7 2.4 2.3 2.1 2.9 1.8 3.4 1.5 3.8 1.1 4.2 0.9 4.4 0.5 4.6 0.2 4.5 -0.2 4.5 -0.5 4.2 -0.9 3.8 -1.1 3.4 -1.5 2.9 -1.8 2.3 -2.1 1.6 -2.4 1 -2.6 0.3 -2.9 -0.4 -3.1 -1.1 -3.2 -1.6 -3.5 -2.2 -3.6 -2.6 -3.7 -2.9 -3.8 -3.2 -3.9 -3.3 -3.8 -3.3 -3.9 -3.2 -3.9 -2.9 -3.8 -2.6 -3.7 -2.2 -3.6 -1.6 -3.4 -1.1 -3.3 -0.4 -3.1 0.3 -2.9 1 -2.6 1.6 -2.4 2.3 -2.1 2.9 -1.8 3.4 -1.5 3.8 -1.1 4.2 -0.9 4.5 -0.5 4.5 -0.1 4.5 0.1 4.5 0.5 4.2 0.9 3.8 1.1 3.4 1.5 2.9 1.8 2.3 2.1 1.6 2.4 1 2.6 0.3 2.9 -0.4 3.1 -1.1 3.3 -1.6 3.4 -2.2 3.6 -2.6 3.7 -2.9 3.8 -3.2 3.9 -3.3 3.9 -3.3 3.8 -3.2 3.9 -2.9 3.8 -2.6 3.7 -2.2 3.6 -1.6 3.5 -1.1 3.2 -0.4 3.1 0.3 2.9 1 2.6 1.6 2.4 2.3 2.1 2.9 1.8 3.4 1.5 3.8 1.1 4.2 0.9 4.5 0.5 4.5 0.2 4.6 -0.2 4.4 -0.5 4.2 -0.9 3.8 -1.1 3.4 -1.5 2.9 -1.8 2.3 -2.1 1.6 -2.4 1 -2.6 0.3 -2.9 -0.4 -3.1 -1 -3.2 -1.7 -3.5 -2.1 -3.6 -2.7 -3.7 -2.9 -3.8 -3.2 -3.9 -3.3 -3.8 -3.3 -3.9 -3.2 -3.9 -2.9 -3.8 -2.6 -3.7 -2.2 -3.6 -1.6 -3.4 -1.1 -3.3 -0.4 -3.1 0.3 -2.9 1 -2.6 1.6 -2.4 2.3 -2.1 2.9 -1.8 3.4 -1.5 3.9 -1.1 4.1 -0.9 4.5 -0.5 4.5 -0.1 4.6 0.1 4.4 0.5 4.2 0.9 3.8 1.1 3.4 1.5 2.9 1.8 2.3 2.1 1.7 2.4 0.9 2.6 0.3 2.9 -0.4 3.1 -1 3.3 -1.7 3.4 -2.1 3.6 -2.6 3.7 -3 3.8 -3.2 3.9 -3.3 3.9 -3.3 3.8 -3.2 3.9 -2.9 3.8 -2.6 3.7 -2.2 3.6 -1.6 3.5 -1.1 3.2 -0.3 3.1 0.2 2.9 1 2.6 1.6 2.4 2.3 2.1 2.9 1.8 3.4 1.5 3.9 1.1 4.2 0.9 4.4 0.5 4.5 0.2 4.6 -0.2 4.4 -0.5 4.2 -0.9 3.9 -1.1 3.4 -1.5 2.8 -1.8 2.3 -2.1 1.7 -2.4 0.9 -2.6 0.3 -2.9 -0.4 -3.1 -1 -3.2 -1.7 -3.5 -2.1 -3.6 -2.6 -3.7 -3 -3.8 -3.2 -3.9 -3.3 -3.8 -3.3 -3.9 -3.1 -3.9 -3 -3.8 -2.6 -3.7 -2.2 -3.6 -1.6 -3.4 -1 -3.3 -0.4 -3.1 0.2 -2.9 1 -2.6 1.7 -2.4 2.2 -2.1 2.9 -1.8 3.4 -1.5 3.9 -1.1 4.2 -0.9 4.4 -0.5 4.5 -0.1 4.6 0.1 4.4 0.5 4.2 0.9 3.9 1.1 3.4 1.5 2.9 1.8 2.2 2.1 1.7 2.4 1 2.6 0.2 2.9 -0.4 3.1 -1 3.3 -1.6 3.4 -2.2 3.6 -2.6 3.7 -3 3.8 -3.1 3.9 -3.3 3.9 -3.3 3.8 -3.2 3.9 -3 3.8 -2.6 3.7 -2.1 3.6 -1.7 3.5 -1 3.2 -0.4 3.1 0.3 2.9 0.9 2.6 1.7 2.4 2.3 2.1 2.8 1.8 3.4 1.5 3.9 1.1 4.2 0.9 4.4 0.5 4.6 0.2 4.5 -0.2 4.4 -0.5 4.2 -0.9 3.9 -1.1 3.4 -1.5 2.9 -1.8 2.3 -2.1 1.6 -2.4 1 -2.6 0.2 -2.9 -0.4 -3.1 -1 -3.2 -1.6 -3.5 -2.2 -3.6 -2.6 -3.7 -3 -3.8 -3.1 -3.9 -3.3 -3.8 -3.3 -3.9 -3.2 -3.9 -3 -3.8 -2.6 -3.7 -2.1 -3.6 -1.7 -3.4 -1 -3.3 -0.4 -3.1 0.3 -2.9 0.9 -2.6 1.7 -2.4 2.3 -2.1 2.8 -1.8 3.5 -1.5 3.8 -1.1 4.2 -0.9 4.4 -0.5 4.6 -0.1 4.5 0.1 4.4 0.5 4.2 0.9 3.9 1.1 3.4 1.5 2.9 1.8 2.3 2.1 1.6 2.4 1 2.6 0.3 2.9 -0.4 3.1 -1.1 3.3 -1.6 3.4 -2.2 3.6 -2.6 3.7 -2.9 3.8 -3.2 3.9 -3.3 3.9 -3.3 3.8 -3.2 3.9 -3 3.8 -2.6 3.7 -2.1 3.6 -1.7 3.5 -1 3.2 -0.4 3.1 0.3 2.9 0.9 2.6 1.7 2.4 2.3 2.1 2.9 1.8 3.4 1.5 3.8 1.1 4.2 0.9 4.4 0.5 4.6 0.2 4.5 -0.2 4.5 -0.5 4.2 -0.9 3.8 -1.1 3.4 -1.5 2.9 -1.8 2.3 -2.1 1.6 -2.4 1 -2.6 0.3 -2.9 -0.4 -3.1 -1.1 -3.2 -1.6 -3.5 -2.2 -3.6 -2.6 -3.7 -2.9 -3.8 -3.2 -3.9 -3.3 -3.8 -3.3 -3.9 -3.2 -3.9 -2.9 -3.8 -2.6 -3.7 -2.2 -3.6 -1.6 -3.4 -1.1 -3.3 -0.4 -3.1 0.3 -2.9 1 -2.6 1.6 -2.4 2.3 -2.1 2.9 -1.8 3.4 -1.5 3.8 -1.1 4.2 -0.9 4.4 -0.5 4.6 -0.1 4.5 0.1 4.5 0.5 4.2 0.9 3.8 1.1 3.4 1.5 2.9 1.8 2.3 2.1 1.6 2.4 1 2.6 0.3 2.9 -0.4 3.1 -1.1 3.3 -1.6 3.4 -2.2 3.6 -2.6 3.7 -2.9 3.8 -3.2 3.9 -3.3 3.9 -3.3 3.8 -3.2 3.9 -2.9 3.8 -2.6 3.7 -2.2 3.6 -1.6 3.5 -1.1 3.2 -0.4 3.1 0.3 2.9 1 2.6 1.6 2.4 2.3 2.1 2.9 1.8 3.4 1.5 3.8 1.1 4.2 0.9 4.5 0.5 4.5 0.2 4.6 -0.2 4.4 -0.5 4.2 -0.9 3.8 -1.1 3.4 -1.5 2.9 -1.8 2.3 -2.1 1.6 -2.4 1 -2.6 0.3 -2.9 -0.4 -3.1 -1 -3.2 -1.7 -3.5 -2.1 -3.6 -2.7 -3.7 -2.9 -3.8 -3.2 -3.9 -3.3 -3.8 -3.3 -3.9 -3.2 -3.9 -2.9 -3.8 -2.6 -3.7 -2.2 -3.6 -1.6 -3.4 -1.1 -3.3 -0.4 -3.1 0.3 -2.9 1 -2.6 1.6 -2.4 2.3 -2.1 2.9 -1.8 3.4 -1.5 3.9 -1.1 4.1 -0.9 4.5 -0.5 4.5 -0.1 4.6 0.1 4.4 0.5 4.2 0.9 3.8 1.1 3.4 1.5 2.9 1.8 2.3 2.1 1.7 2.4 0.9 2.6 0.3 2.9 -0.4 3.1 -1 3.3 -1.7 3.4 -2.1 3.6 -2.6 3.7 -3 3.8 -3.2 3.9 -3.3 3.9 -3.3 3.8 -3.2 3.9 -2.9 3.8 -2.6 3.7 -2.2 3.6 -1.6 3.5 -1.1 3.2 -0.4 3.1 0.3 2.9 1 2.6 1.6 2.4 2.3 2.1 2.9 1.8 3.4 1.5 3.9 1.1 4.2 0.9 4.4 0.5 4.5 0.2 4.6 -0.2 4.4 -0.5 4.2 -0.9 3.8 -1.1 3.5 -1.5 2.8 -1.8 2.3 -2.1 1.7 -2.4 0.9 -2.6 0.3 -2.9 -0.4 -3.1 -1 -3.2 -1.7 -3.5 -2.1 -3.6 -2.6 -3.7 -3 -3.8 -3.2 -3.9 -3.3 -3.8M154.7 356.2l-3.3 -3.9 -3.1 -3.9 -3 -3.8 -2.6 -3.7 -2.2 -3.6 -1.6 -3.4 -1 -3.3 -0.4 -3.1 0.2 -2.9 1 -2.6 1.7 -2.4 2.2 -2 2.9 -1.8 3.4 -1.5 3.9 -1.2 4.2 -0.8 4.4 -0.6 4.5 -0.1 4.6 0.1 4.4 0.6 4.2 0.8 3.9 1.2 3.4 1.5 2.9 1.8 2.2 2 1.7 2.4 1 2.6 0.2 2.9 -0.4 3.1 -1 3.3 -1.6 3.4 -2.2 3.6 -2.6 3.7 -3 3.8 -3.1 3.9 -3.3 3.9 -3.3 3.9 -3.2 3.8 -3 3.8 -2.6 3.7 -2.1 3.6 -1.7 3.5 -1 3.3 -0.4 3 0.3 2.9 0.9 2.6 1.7 2.4 2.3 2.1 2.8 1.8 3.4 1.5 3.9 1.2 4.2 0.8 4.4 0.5 4.6 0.2 4.5 -0.2 4.4 -0.5 4.2 -0.8 3.9 -1.2 3.4 -1.5 2.9 -1.8 2.3 -2.1 1.6 -2.4 1 -2.6 0.2 -2.9 -0.4 -3 -1 -3.3 -1.6 -3.5 -2.2 -3.6 -2.6 -3.7 -2.9 -3.8 -3.2 -3.8 -3.3 -3.9 -3.3 -3.9 -3.2 -3.9 -3 -3.8 -2.6 -3.7 -2.1 -3.6 -1.7 -3.4 -1 -3.3 -0.4 -3.1 0.3 -2.9 0.9 -2.6 1.7 -2.4 2.3 -2 2.8 -1.8 3.5 -1.5 3.8 -1.2 4.2 -0.8 4.4 -0.6 4.6 -0.1 4.5 0.1 4.4 0.6 4.2 0.8 3.9 1.2 3.4 1.5 2.9 1.8 2.3 2 1.6 2.4 1 2.6 0.3 2.9 -0.4 3.1 -1.1 3.3 -1.6 3.4 -2.2 3.6 -2.6 3.7 -2.9 3.8 -3.2 3.9 -3.3 3.9 -3.3 3.9 -3.2 3.8 -3 3.8 -2.6 3.7 -2.1 3.6 -1.7 3.5 -1 3.3 -0.4 3 0.3 2.9 0.9 2.6 1.7 2.4 2.3 2.1 2.9 1.8 3.4 1.5 3.8 1.2 4.2 0.8 4.4 0.5 4.6 0.2 4.5 -0.2 4.5 -0.5 4.2 -0.8 3.8 -1.2 3.4 -1.5 2.9 -1.8 2.3 -2.1 1.6 -2.4 1 -2.6 0.3 -2.9 -0.4 -3 -1.1 -3.3 -1.6 -3.5 -2.2 -3.6 -2.6 -3.7 -2.9 -3.8 -3.2 -3.8 -3.3 -3.9 -3.3 -3.9 -3.2 -3.9 -2.9 -3.8 -2.6 -3.7 -2.2 -3.6 -1.6 -3.4 -1.1 -3.3 -0.4 -3.1 0.3 -2.9 1 -2.6 1.6 -2.4 2.3 -2 2.9 -1.8 3.4 -1.5 3.8 -1.2 4.2 -0.8 4.5 -0.6 4.5 -0.1 4.5 0.1 4.5 0.6 4.2 0.8 3.8 1.2 3.4 1.5 2.9 1.8 2.3 2 1.6 2.4 1 2.6 0.3 2.9 -0.4 3.1 -1.1 3.3 -1.6 3.4 -2.2 3.6 -2.6 3.7 -2.9 3.8 -3.2 3.9 -3.3 3.9 -3.3 3.9 -3.2 3.8 -2.9 3.8 -2.6 3.7 -2.2 3.6 -1.6 3.5 -1.1 3.3 -0.4 3 0.3 2.9 1 2.6 1.6 2.4 2.3 2.1 2.9 1.8 3.4 1.5 3.8 1.2 4.2 0.8 4.5 0.5 4.5 0.2 4.6 -0.2 4.4 -0.5 4.2 -0.8 3.8 -1.2 3.4 -1.5 2.9 -1.8 2.3 -2.1 1.6 -2.4 1 -2.6 0.3 -2.9 -0.4 -3 -1 -3.3 -1.7 -3.5 -2.1 -3.6 -2.7 -3.7 -2.9 -3.8 -3.2 -3.8 -3.3 -3.9 -3.3 -3.9 -3.2 -3.9 -2.9 -3.8 -2.6 -3.7 -2.2 -3.6 -1.6 -3.4 -1.1 -3.3 -0.4 -3.1 0.3 -2.9 1 -2.6 1.6 -2.4 2.3 -2 2.9 -1.8 3.4 -1.5 3.9 -1.2 4.1 -0.8 4.5 -0.6 4.5 -0.1 4.6 0.1 4.4 0.6 4.2 0.8 3.8 1.2 3.4 1.5 2.9 1.8 2.3 2 1.7 2.4 0.9 2.6 0.3 2.9 -0.4 3.1 -1 3.3 -1.7 3.4 -2.1 3.6 -2.6 3.7 -3 3.8 -3.2 3.9 -3.3 3.9 -3.3 3.9 -3.2 3.8 -2.9 3.8 -2.6 3.7 -2.2 3.6 -1.6 3.5 -1.1 3.3 -0.3 3 0.2 2.9 1 2.6 1.6 2.4 2.3 2.1 2.9 1.8 3.4 1.5 3.9 1.2 4.2 0.8 4.4 0.5 4.5 0.2 4.6 -0.2 4.4 -0.5 4.2 -0.8 3.9 -1.2 3.4 -1.5 2.8 -1.8 2.3 -2.1 1.7 -2.4 0.9 -2.6 0.3 -2.9 -0.4 -3 -1 -3.3 -1.7 -3.5 -2.1 -3.6 -2.6 -3.7 -3 -3.8 -3.2 -3.8 -3.3 -3.9 -3.3 -3.9 -3.1 -3.9 -3 -3.8 -2.6 -3.7 -2.2 -3.6 -1.6 -3.4 -1 -3.3 -0.4 -3.1 0.2 -2.9 1 -2.6 1.7 -2.4 2.2 -2 2.9 -1.8 3.4 -1.5 3.9 -1.2 4.2 -0.8 4.4 -0.6 4.5 -0.1 4.6 0.1 4.4 0.6 4.2 0.8 3.9 1.2 3.4 1.5 2.9 1.8 2.2 2 1.7 2.4 1 2.6 0.2 2.9 -0.4 3.1 -1 3.3 -1.6 3.4 -2.2 3.6 -2.6 3.7 -3 3.8 -3.1 3.9 -3.3 3.9 -3.3 3.9 -3.2 3.8 -3 3.8 -2.6 3.7 -2.1 3.6 -1.7 3.5 -1 3.3 -0.4 3 0.3 2.9 0.9 2.6 1.7 2.4 2.3 2.1 2.8 1.8 3.4 1.5 3.9 1.2 4.2 0.8 4.4 0.5 4.6 0.2 4.5 -0.2 4.4 -0.5 4.2 -0.8 3.9 -1.2 3.4 -1.5 2.9 -1.8 2.3 -2.1 1.6 -2.4 1 -2.6 0.2 -2.9 -0.4 -3 -1 -3.3 -1.6 -3.5 -2.2 -3.6 -2.6 -3.7 -3 -3.8 -3.1 -3.8 -3.3 -3.9 -3.3 -3.9 -3.2 -3.9 -3 -3.8 -2.6 -3.7 -2.1 -3.6 -1.7 -3.4 -1 -3.3 -0.4 -3.1 0.3 -2.9 0.9 -2.6 1.7 -2.4 2.3 -2 2.8 -1.8 3.5 -1.5 3.8 -1.2 4.2 -0.8 4.4 -0.6 4.6 -0.1 4.5 0.1 4.4 0.6 4.2 0.8 3.9 1.2 3.4 1.5 2.9 1.8 2.3 2 1.6 2.4 1 2.6 0.3 2.9 -0.4 3.1 -1.1 3.3 -1.6 3.4 -2.2 3.6 -2.6 3.7 -2.9 3.8 -3.2 3.9 -3.3 3.9 -3.3 3.9 -3.2 3.8 -3 3.8 -2.6 3.7 -2.1 3.6 -1.7 3.5 -1 3.3 -0.4 3 0.3 2.9 0.9 2.6 1.7 2.4 2.3 2.1 2.9 1.8 3.4 1.5 3.8 1.2 4.2 0.8 4.4 0.5 4.6 0.2 4.5 -0.2 4.5 -0.5 4.2 -0.8 3.8 -1.2 3.4 -1.5 2.9 -1.8 2.3 -2.1 1.6 -2.4 1 -2.6 0.3 -2.9 -0.4 -3 -1.1 -3.3 -1.6 -3.5 -2.2 -3.6 -2.6 -3.7 -2.9 -3.8 -3.2 -3.8 -3.3 -3.9 -3.3 -3.9 -3.2 -3.9 -2.9 -3.8 -2.6 -3.7 -2.2 -3.6 -1.6 -3.4 -1.1 -3.3 -0.4 -3.1 0.3 -2.9 1 -2.6 1.6 -2.4 2.3 -2 2.9 -1.8 3.4 -1.5 3.8 -1.2 4.2 -0.8 4.4 -0.6 4.6 -0.1 4.5 0.1 4.5 0.6 4.2 0.8 3.8 1.2 3.4 1.5 2.9 1.8 2.3 2 1.6 2.4 1 2.6 0.3 2.9 -0.4 3.1 -1.1 3.3 -1.6 3.4 -2.2 3.6 -2.6 3.7 -2.9 3.8 -3.2 3.9 -3.3 3.9 -3.3 3.9 -3.2 3.8 -2.9 3.8 -2.6 3.7 -2.2 3.6 -1.6 3.5 -1.1 3.3 -0.4 3 0.3 2.9 1 2.6 1.6 2.4 2.3 2.1 2.9 1.8 3.4 1.5 3.8 1.2 4.2 0.8 4.5 0.5 4.5 0.2 4.6 -0.2 4.4 -0.5 4.2 -0.8 3.8 -1.2 3.4 -1.5 2.9 -1.8 2.3 -2.1 1.6 -2.4 1 -2.6 0.3 -2.9 -0.4 -3 -1 -3.3 -1.7 -3.5 -2.1 -3.6 -2.7 -3.7 -2.9 -3.8 -3.2 -3.8 -3.3 -3.9 -3.3 -3.9 -3.2 -3.9 -2.9 -3.8 -2.6 -3.7 -2.2 -3.6 -1.6 -3.4 -1.1 -3.3 -0.4 -3.1 0.3 -2.9 1 -2.6 1.6 -2.4 2.3 -2 2.9 -1.8 3.4 -1.5 3.9 -1.2 4.1 -0.8 4.5 -0.6 4.5 -0.1 4.6 0.1 4.4 0.6 4.2 0.8 3.8 1.2 3.4 1.5 2.9 1.8 2.3 2 1.7 2.4 0.9 2.6 0.3 2.9 -0.4 3.1 -1 3.3 -1.7 3.4 -2.1 3.6 -2.6 3.7 -3 3.8 -3.2 3.9 -3.3 3.9 -3.3 3.9 -3.2 3.8 -2.9 3.8 -2.6 3.7 -2.2 3.6 -1.6 3.5 -1.1 3.3 -0.4 3 0.3 2.9 1 2.6 1.6 2.4 2.3 2.1 2.9 1.8 3.4 1.5 3.9 1.2 4.2 0.8 4.4 0.5 4.5 0.2 4.6 -0.2 4.4 -0.5 4.2 -0.8 3.8 -1.2 3.5 -1.5 2.8 -1.8 2.3 -2.1 1.7 -2.4 0.9 -2.6 0.3 -2.9 -0.4 -3 -1 -3.3 -1.7 -3.5 -2.1 -3.6 -2.6 -3.7 -3 -3.8 -3.2 -3.8 -3.3 -3.9M154.7 382.9l-3.3 -3.9 -3.1 -3.8 -3 -3.8 -2.6 -3.8 -2.2 -3.5 -1.6 -3.5 -1 -3.3 -0.4 -3.1 0.2 -2.8 1 -2.7 1.7 -2.3 2.2 -2.1 2.9 -1.8 3.4 -1.5 3.9 -1.2 4.2 -0.8 4.4 -0.5 4.5 -0.2 4.6 0.2 4.4 0.5 4.2 0.8 3.9 1.2 3.4 1.5 2.9 1.8 2.2 2.1 1.7 2.3 1 2.7 0.2 2.8 -0.4 3.1 -1 3.3 -1.6 3.5 -2.2 3.5 -2.6 3.8 -3 3.8 -3.1 3.8 -3.3 3.9 -3.3 3.9 -3.2 3.8 -3 3.8 -2.6 3.8 -2.1 3.5 -1.7 3.5 -1 3.3 -0.4 3.1 0.3 2.8 0.9 2.7 1.7 2.3 2.3 2.1 2.8 1.8 3.4 1.5 3.9 1.2 4.2 0.8 4.4 0.5 4.6 0.2 4.5 -0.2 4.4 -0.5 4.2 -0.8 3.9 -1.2 3.4 -1.5 2.9 -1.8 2.3 -2.1 1.6 -2.3 1 -2.7 0.2 -2.8 -0.4 -3.1 -1 -3.3 -1.6 -3.5 -2.2 -3.5 -2.6 -3.8 -2.9 -3.8 -3.2 -3.8 -3.3 -3.9 -3.3 -3.9 -3.2 -3.8 -3 -3.8 -2.6 -3.8 -2.1 -3.5 -1.7 -3.5 -1 -3.3 -0.4 -3.1 0.3 -2.8 0.9 -2.7 1.7 -2.3 2.3 -2.1 2.8 -1.8 3.5 -1.5 3.8 -1.2 4.2 -0.8 4.4 -0.5 4.6 -0.2 4.5 0.2 4.4 0.5 4.2 0.8 3.9 1.2 3.4 1.5 2.9 1.8 2.3 2.1 1.6 2.3 1 2.7 0.3 2.8 -0.4 3.1 -1.1 3.3 -1.6 3.5 -2.2 3.5 -2.6 3.8 -2.9 3.8 -3.2 3.8 -3.3 3.9 -3.3 3.9 -3.2 3.8 -3 3.8 -2.6 3.8 -2.1 3.5 -1.7 3.5 -1 3.3 -0.4 3.1 0.3 2.8 0.9 2.7 1.7 2.3 2.3 2.1 2.9 1.8 3.4 1.5 3.8 1.2 4.2 0.8 4.4 0.5 4.6 0.2 4.5 -0.2 4.5 -0.5 4.2 -0.8 3.8 -1.2 3.4 -1.5 2.9 -1.8 2.3 -2.1 1.6 -2.3 1 -2.7 0.3 -2.8 -0.4 -3.1 -1.1 -3.3 -1.6 -3.5 -2.2 -3.5 -2.6 -3.8 -2.9 -3.8 -3.2 -3.8 -3.3 -3.9 -3.3 -3.9 -3.2 -3.8 -2.9 -3.8 -2.6 -3.8 -2.2 -3.5 -1.6 -3.5 -1.1 -3.3 -0.4 -3.1 0.3 -2.8 1 -2.7 1.6 -2.3 2.3 -2.1 2.9 -1.8 3.4 -1.5 3.8 -1.2 4.2 -0.8 4.5 -0.5 4.5 -0.2 4.5 0.2 4.5 0.5 4.2 0.8 3.8 1.2 3.4 1.5 2.9 1.8 2.3 2.1 1.6 2.3 1 2.7 0.3 2.8 -0.4 3.1 -1.1 3.3 -1.6 3.5 -2.2 3.5 -2.6 3.8 -2.9 3.8 -3.2 3.8 -3.3 3.9 -3.3 3.9 -3.2 3.8 -2.9 3.8 -2.6 3.8 -2.2 3.5 -1.6 3.5 -1.1 3.3 -0.4 3.1 0.3 2.8 1 2.7 1.6 2.3 2.3 2.1 2.9 1.8 3.4 1.5 3.8 1.2 4.2 0.8 4.5 0.5 4.5 0.2 4.6 -0.2 4.4 -0.5 4.2 -0.8 3.8 -1.2 3.4 -1.5 2.9 -1.8 2.3 -2.1 1.6 -2.3 1 -2.7 0.3 -2.8 -0.4 -3.1 -1 -3.3 -1.7 -3.5 -2.1 -3.5 -2.7 -3.8 -2.9 -3.8 -3.2 -3.8 -3.3 -3.9 -3.3 -3.9 -3.2 -3.8 -2.9 -3.8 -2.6 -3.8 -2.2 -3.5 -1.6 -3.5 -1.1 -3.3 -0.4 -3.1 0.3 -2.8 1 -2.7 1.6 -2.3 2.3 -2.1 2.9 -1.8 3.4 -1.5 3.9 -1.2 4.1 -0.8 4.5 -0.5 4.5 -0.2 4.6 0.2 4.4 0.5 4.2 0.8 3.8 1.2 3.4 1.5 2.9 1.8 2.3 2.1 1.7 2.3 0.9 2.7 0.3 2.8 -0.4 3.1 -1 3.3 -1.7 3.5 -2.1 3.5 -2.6 3.8 -3 3.8 -3.2 3.8 -3.3 3.9 -3.3 3.9 -3.2 3.8 -2.9 3.8 -2.6 3.8 -2.2 3.5 -1.6 3.5 -1.1 3.3 -0.3 3.1 0.2 2.8 1 2.7 1.6 2.3 2.3 2.1 2.9 1.8 3.4 1.5 3.9 1.2 4.2 0.8 4.4 0.5 4.5 0.2 4.6 -0.2 4.4 -0.5 4.2 -0.8 3.9 -1.2 3.4 -1.5 2.8 -1.8 2.3 -2.1 1.7 -2.3 0.9 -2.7 0.3 -2.8 -0.4 -3.1 -1 -3.3 -1.7 -3.5 -2.1 -3.5 -2.6 -3.8 -3 -3.8 -3.2 -3.8 -3.3 -3.9 -3.3 -3.9 -3.1 -3.8 -3 -3.8 -2.6 -3.8 -2.2 -3.5 -1.6 -3.5 -1 -3.3 -0.4 -3.1 0.2 -2.8 1 -2.7 1.7 -2.3 2.2 -2.1 2.9 -1.8 3.4 -1.5 3.9 -1.2 4.2 -0.8 4.4 -0.5 4.5 -0.2 4.6 0.2 4.4 0.5 4.2 0.8 3.9 1.2 3.4 1.5 2.9 1.8 2.2 2.1 1.7 2.3 1 2.7 0.2 2.8 -0.4 3.1 -1 3.3 -1.6 3.5 -2.2 3.5 -2.6 3.8 -3 3.8 -3.1 3.8 -3.3 3.9 -3.3 3.9 -3.2 3.8 -3 3.8 -2.6 3.8 -2.1 3.5 -1.7 3.5 -1 3.3 -0.4 3.1 0.3 2.8 0.9 2.7 1.7 2.3 2.3 2.1 2.8 1.8 3.4 1.5 3.9 1.2 4.2 0.8 4.4 0.5 4.6 0.2 4.5 -0.2 4.4 -0.5 4.2 -0.8 3.9 -1.2 3.4 -1.5 2.9 -1.8 2.3 -2.1 1.6 -2.3 1 -2.7 0.2 -2.8 -0.4 -3.1 -1 -3.3 -1.6 -3.5 -2.2 -3.5 -2.6 -3.8 -3 -3.8 -3.1 -3.8 -3.3 -3.9 -3.3 -3.9 -3.2 -3.8 -3 -3.8 -2.6 -3.8 -2.1 -3.5 -1.7 -3.5 -1 -3.3 -0.4 -3.1 0.3 -2.8 0.9 -2.7 1.7 -2.3 2.3 -2.1 2.8 -1.8 3.5 -1.5 3.8 -1.2 4.2 -0.8 4.4 -0.5 4.6 -0.2 4.5 0.2 4.4 0.5 4.2 0.8 3.9 1.2 3.4 1.5 2.9 1.8 2.3 2.1 1.6 2.3 1 2.7 0.3 2.8 -0.4 3.1 -1.1 3.3 -1.6 3.5 -2.2 3.5 -2.6 3.8 -2.9 3.8 -3.2 3.8 -3.3 3.9 -3.3 3.9 -3.2 3.8 -3 3.8 -2.6 3.8 -2.1 3.5 -1.7 3.5 -1 3.3 -0.4 3.1 0.3 2.8 0.9 2.7 1.7 2.3 2.3 2.1 2.9 1.8 3.4 1.5 3.8 1.2 4.2 0.8 4.4 0.5 4.6 0.2 4.5 -0.2 4.5 -0.5 4.2 -0.8 3.8 -1.2 3.4 -1.5 2.9 -1.8 2.3 -2.1 1.6 -2.3 1 -2.7 0.3 -2.8 -0.4 -3.1 -1.1 -3.3 -1.6 -3.5 -2.2 -3.5 -2.6 -3.8 -2.9 -3.8 -3.2 -3.8 -3.3 -3.9 -3.3 -3.9 -3.2 -3.8 -2.9 -3.8 -2.6 -3.8 -2.2 -3.5 -1.6 -3.5 -1.1 -3.3 -0.4 -3.1 0.3 -2.8 1 -2.7 1.6 -2.3 2.3 -2.1 2.9 -1.8 3.4 -1.5 3.8 -1.2 4.2 -0.8 4.4 -0.5 4.6 -0.2 4.5 0.2 4.5 0.5 4.2 0.8 3.8 1.2 3.4 1.5 2.9 1.8 2.3 2.1 1.6 2.3 1 2.7 0.3 2.8 -0.4 3.1 -1.1 3.3 -1.6 3.5 -2.2 3.5 -2.6 3.8 -2.9 3.8 -3.2 3.8 -3.3 3.9 -3.3 3.9 -3.2 3.8 -2.9 3.8 -2.6 3.8 -2.2 3.5 -1.6 3.5 -1.1 3.3 -0.4 3.1 0.3 2.8 1 2.7 1.6 2.3 2.3 2.1 2.9 1.8 3.4 1.5 3.8 1.2 4.2 0.8 4.5 0.5 4.5 0.2 4.6 -0.2 4.4 -0.5 4.2 -0.8 3.8 -1.2 3.4 -1.5 2.9 -1.8 2.3 -2.1 1.6 -2.3 1 -2.7 0.3 -2.8 -0.4 -3.1 -1 -3.3 -1.7 -3.5 -2.1 -3.5 -2.7 -3.8 -2.9 -3.8 -3.2 -3.8 -3.3 -3.9 -3.3 -3.9 -3.2 -3.8 -2.9 -3.8 -2.6 -3.8 -2.2 -3.5 -1.6 -3.5 -1.1 -3.3 -0.4 -3.1 0.3 -2.8 1 -2.7 1.6 -2.3 2.3 -2.1 2.9 -1.8 3.4 -1.5 3.9 -1.2 4.1 -0.8 4.5 -0.5 4.5 -0.2 4.6 0.2 4.4 0.5 4.2 0.8 3.8 1.2 3.4 1.5 2.9 1.8 2.3 2.1 1.7 2.3 0.9 2.7 0.3 2.8 -0.4 3.1 -1 3.3 -1.7 3.5 -2.1 3.5 -2.6 3.8 -3 3.8 -3.2 3.8 -3.3 3.9 -3.3 3.9 -3.2 3.8 -2.9 3.8 -2.6 3.8 -2.2 3.5 -1.6 3.5 -1.1 3.3 -0.4 3.1 0.3 2.8 1 2.7 1.6 2.3 2.3 2.1 2.9 1.8 3.4 1.5 3.9 1.2 4.2 0.8 4.4 0.5 4.5 0.2 4.6 -0.2 4.4 -0.5 4.2 -0.8 3.8 -1.2 3.5 -1.5 2.8 -1.8 2.3 -2.1 1.7 -2.3 0.9 -2.7 0.3 -2.8 -0.4 -3.1 -1 -3.3 -1.7 -3.5 -2.1 -3.5 -2.6 -3.8 -3 -3.8 -3.2 -3.8 -3.3 -3.9M154.7 409.6l-3.3 -3.9 -3.1 -3.8 -3 -3.8 -2.6 -3.7 -2.2 -3.6 -1.6 -3.5 -1 -3.3 -0.4 -3 0.2 -2.9 1 -2.6 1.7 -2.4 2.2 -2.1 2.9 -1.8 3.4 -1.5 3.9 -1.2 4.2 -0.8 4.4 -0.5 4.5 -0.2 4.6 0.2 4.4 0.5 4.2 0.8 3.9 1.2 3.4 1.5 2.9 1.8 2.2 2.1 1.7 2.4 1 2.6 0.2 2.9 -0.4 3 -1 3.3 -1.6 3.5 -2.2 3.6 -2.6 3.7 -3 3.8 -3.1 3.8 -3.3 3.9 -3.3 3.9 -3.2 3.9 -3 3.8 -2.6 3.7 -2.1 3.6 -1.7 3.4 -1 3.3 -0.4 3.1 0.3 2.9 0.9 2.6 1.7 2.4 2.3 2 2.8 1.8 3.4 1.5 3.9 1.2 4.2 0.8 4.4 0.6 4.6 0.1 4.5 -0.1 4.4 -0.6 4.2 -0.8 3.9 -1.2 3.4 -1.5 2.9 -1.8 2.3 -2 1.6 -2.4 1 -2.6 0.2 -2.9 -0.4 -3.1 -1 -3.3 -1.6 -3.4 -2.2 -3.6 -2.6 -3.7 -2.9 -3.8 -3.2 -3.9 -3.3 -3.9 -3.3 -3.9 -3.2 -3.8 -3 -3.8 -2.6 -3.7 -2.1 -3.6 -1.7 -3.5 -1 -3.3 -0.4 -3 0.3 -2.9 0.9 -2.6 1.7 -2.4 2.3 -2.1 2.8 -1.8 3.5 -1.5 3.8 -1.2 4.2 -0.8 4.4 -0.5 4.6 -0.2 4.5 0.2 4.4 0.5 4.2 0.8 3.9 1.2 3.4 1.5 2.9 1.8 2.3 2.1 1.6 2.4 1 2.6 0.3 2.9 -0.4 3 -1.1 3.3 -1.6 3.5 -2.2 3.6 -2.6 3.7 -2.9 3.8 -3.2 3.8 -3.3 3.9 -3.3 3.9 -3.2 3.9 -3 3.8 -2.6 3.7 -2.1 3.6 -1.7 3.4 -1 3.3 -0.4 3.1 0.3 2.9 0.9 2.6 1.7 2.4 2.3 2 2.9 1.8 3.4 1.5 3.8 1.2 4.2 0.8 4.4 0.6 4.6 0.1 4.5 -0.1 4.5 -0.6 4.2 -0.8 3.8 -1.2 3.4 -1.5 2.9 -1.8 2.3 -2 1.6 -2.4 1 -2.6 0.3 -2.9 -0.4 -3.1 -1.1 -3.3 -1.6 -3.4 -2.2 -3.6 -2.6 -3.7 -2.9 -3.8 -3.2 -3.9 -3.3 -3.9 -3.3 -3.9 -3.2 -3.8 -2.9 -3.8 -2.6 -3.7 -2.2 -3.6 -1.6 -3.5 -1.1 -3.3 -0.4 -3 0.3 -2.9 1 -2.6 1.6 -2.4 2.3 -2.1 2.9 -1.8 3.4 -1.5 3.8 -1.2 4.2 -0.8 4.5 -0.5 4.5 -0.2 4.5 0.2 4.5 0.5 4.2 0.8 3.8 1.2 3.4 1.5 2.9 1.8 2.3 2.1 1.6 2.4 1 2.6 0.3 2.9 -0.4 3 -1.1 3.3 -1.6 3.5 -2.2 3.6 -2.6 3.7 -2.9 3.8 -3.2 3.8 -3.3 3.9 -3.3 3.9 -3.2 3.9 -2.9 3.8 -2.6 3.7 -2.2 3.6 -1.6 3.4 -1.1 3.3 -0.4 3.1 0.3 2.9 1 2.6 1.6 2.4 2.3 2 2.9 1.8 3.4 1.5 3.8 1.2 4.2 0.8 4.5 0.6 4.5 0.1 4.6 -0.1 4.4 -0.6 4.2 -0.8 3.8 -1.2 3.4 -1.5 2.9 -1.8 2.3 -2 1.6 -2.4 1 -2.6 0.3 -2.9 -0.4 -3.1 -1 -3.3 -1.7 -3.4 -2.1 -3.6 -2.7 -3.7 -2.9 -3.8 -3.2 -3.9 -3.3 -3.9 -3.3 -3.9 -3.2 -3.8 -2.9 -3.8 -2.6 -3.7 -2.2 -3.6 -1.6 -3.5 -1.1 -3.3 -0.4 -3 0.3 -2.9 1 -2.6 1.6 -2.4 2.3 -2.1 2.9 -1.8 3.4 -1.5 3.9 -1.2 4.1 -0.8 4.5 -0.5 4.5 -0.2 4.6 0.2 4.4 0.5 4.2 0.8 3.8 1.2 3.4 1.5 2.9 1.8 2.3 2.1 1.7 2.4 0.9 2.6 0.3 2.9 -0.4 3 -1 3.3 -1.7 3.5 -2.1 3.6 -2.6 3.7 -3 3.8 -3.2 3.8 -3.3 3.9 -3.3 3.9 -3.2 3.9 -2.9 3.8 -2.6 3.7 -2.2 3.6 -1.6 3.4 -1.1 3.3 -0.3 3.1 0.2 2.9 1 2.6 1.6 2.4 2.3 2 2.9 1.8 3.4 1.5 3.9 1.2 4.2 0.8 4.4 0.6 4.5 0.1 4.6 -0.1 4.4 -0.6 4.2 -0.8 3.9 -1.2 3.4 -1.5 2.8 -1.8 2.3 -2 1.7 -2.4 0.9 -2.6 0.3 -2.9 -0.4 -3.1 -1 -3.3 -1.7 -3.4 -2.1 -3.6 -2.6 -3.7 -3 -3.8 -3.2 -3.9 -3.3 -3.9 -3.3 -3.9 -3.1 -3.8 -3 -3.8 -2.6 -3.7 -2.2 -3.6 -1.6 -3.5 -1 -3.3 -0.4 -3 0.2 -2.9 1 -2.6 1.7 -2.4 2.2 -2.1 2.9 -1.8 3.4 -1.5 3.9 -1.2 4.2 -0.8 4.4 -0.5 4.5 -0.2 4.6 0.2 4.4 0.5 4.2 0.8 3.9 1.2 3.4 1.5 2.9 1.8 2.2 2.1 1.7 2.4 1 2.6 0.2 2.9 -0.4 3 -1 3.3 -1.6 3.5 -2.2 3.6 -2.6 3.7 -3 3.8 -3.1 3.8 -3.3 3.9 -3.3 3.9 -3.2 3.9 -3 3.8 -2.6 3.7 -2.1 3.6 -1.7 3.4 -1 3.3 -0.4 3.1 0.3 2.9 0.9 2.6 1.7 2.4 2.3 2 2.8 1.8 3.4 1.5 3.9 1.2 4.2 0.8 4.4 0.6 4.6 0.1 4.5 -0.1 4.4 -0.6 4.2 -0.8 3.9 -1.2 3.4 -1.5 2.9 -1.8 2.3 -2 1.6 -2.4 1 -2.6 0.2 -2.9 -0.4 -3.1 -1 -3.3 -1.6 -3.4 -2.2 -3.6 -2.6 -3.7 -3 -3.8 -3.1 -3.9 -3.3 -3.9 -3.3 -3.9 -3.2 -3.8 -3 -3.8 -2.6 -3.7 -2.1 -3.6 -1.7 -3.5 -1 -3.3 -0.4 -3 0.3 -2.9 0.9 -2.6 1.7 -2.4 2.3 -2.1 2.8 -1.8 3.5 -1.5 3.8 -1.2 4.2 -0.8 4.4 -0.5 4.6 -0.2 4.5 0.2 4.4 0.5 4.2 0.8 3.9 1.2 3.4 1.5 2.9 1.8 2.3 2.1 1.6 2.4 1 2.6 0.3 2.9 -0.4 3 -1.1 3.3 -1.6 3.5 -2.2 3.6 -2.6 3.7 -2.9 3.8 -3.2 3.8 -3.3 3.9 -3.3 3.9 -3.2 3.9 -3 3.8 -2.6 3.7 -2.1 3.6 -1.7 3.4 -1 3.3 -0.4 3.1 0.3 2.9 0.9 2.6 1.7 2.4 2.3 2 2.9 1.8 3.4 1.5 3.8 1.2 4.2 0.8 4.4 0.6 4.6 0.1 4.5 -0.1 4.5 -0.6 4.2 -0.8 3.8 -1.2 3.4 -1.5 2.9 -1.8 2.3 -2 1.6 -2.4 1 -2.6 0.3 -2.9 -0.4 -3.1 -1.1 -3.3 -1.6 -3.4 -2.2 -3.6 -2.6 -3.7 -2.9 -3.8 -3.2 -3.9 -3.3 -3.9 -3.3 -3.9 -3.2 -3.8 -2.9 -3.8 -2.6 -3.7 -2.2 -3.6 -1.6 -3.5 -1.1 -3.3 -0.4 -3 0.3 -2.9 1 -2.6 1.6 -2.4 2.3 -2.1 2.9 -1.8 3.4 -1.5 3.8 -1.2 4.2 -0.8 4.4 -0.5 4.6 -0.2 4.5 0.2 4.5 0.5 4.2 0.8 3.8 1.2 3.4 1.5 2.9 1.8 2.3 2.1 1.6 2.4 1 2.6 0.3 2.9 -0.4 3 -1.1 3.3 -1.6 3.5 -2.2 3.6 -2.6 3.7 -2.9 3.8 -3.2 3.8 -3.3 3.9 -3.3 3.9 -3.2 3.9 -2.9 3.8 -2.6 3.7 -2.2 3.6 -1.6 3.4 -1.1 3.3 -0.4 3.1 0.3 2.9 1 2.6 1.6 2.4 2.3 2 2.9 1.8 3.4 1.5 3.8 1.2 4.2 0.8 4.5 0.6 4.5 0.1 4.6 -0.1 4.4 -0.6 4.2 -0.8 3.8 -1.2 3.4 -1.5 2.9 -1.8 2.3 -2 1.6 -2.4 1 -2.6 0.3 -2.9 -0.4 -3.1 -1 -3.3 -1.7 -3.4 -2.1 -3.6 -2.7 -3.7 -2.9 -3.8 -3.2 -3.9 -3.3 -3.9 -3.3 -3.9 -3.2 -3.8 -2.9 -3.8 -2.6 -3.7 -2.2 -3.6 -1.6 -3.5 -1.1 -3.3 -0.4 -3 0.3 -2.9 1 -2.6 1.6 -2.4 2.3 -2.1 2.9 -1.8 3.4 -1.5 3.9 -1.2 4.1 -0.8 4.5 -0.5 4.5 -0.2 4.6 0.2 4.4 0.5 4.2 0.8 3.8 1.2 3.4 1.5 2.9 1.8 2.3 2.1 1.7 2.4 0.9 2.6 0.3 2.9 -0.4 3 -1 3.3 -1.7 3.5 -2.1 3.6 -2.6 3.7 -3 3.8 -3.2 3.8 -3.3 3.9 -3.3 3.9 -3.2 3.9 -2.9 3.8 -2.6 3.7 -2.2 3.6 -1.6 3.4 -1.1 3.3 -0.4 3.1 0.3 2.9 1 2.6 1.6 2.4 2.3 2 2.9 1.8 3.4 1.5 3.9 1.2 4.2 0.8 4.4 0.6 4.5 0.1 4.6 -0.1 4.4 -0.6 4.2 -0.8 3.8 -1.2 3.5 -1.5 2.8 -1.8 2.3 -2 1.7 -2.4 0.9 -2.6 0.3 -2.9 -0.4 -3.1 -1 -3.3 -1.7 -3.4 -2.1 -3.6 -2.6 -3.7 -3 -3.8 -3.2 -3.9 -3.3 -3.9M154.7 436.3l-3.3 -3.8 -3.1 -3.9 -3 -3.8 -2.6 -3.7 -2.2 -3.6 -1.6 -3.5 -1 -3.2 -0.4 -3.1 0.2 -2.9 1 -2.6 1.7 -2.4 2.2 -2.1 2.9 -1.8 3.4 -1.5 3.9 -1.1 4.2 -0.9 4.4 -0.5 4.5 -0.2 4.6 0.2 4.4 0.5 4.2 0.9 3.9 1.1 3.4 1.5 2.9 1.8 2.2 2.1 1.7 2.4 1 2.6 0.2 2.9 -0.4 3.1 -1 3.2 -1.6 3.5 -2.2 3.6 -2.6 3.7 -3 3.8 -3.1 3.9 -3.3 3.8 -3.3 3.9 -3.2 3.9 -3 3.8 -2.6 3.7 -2.1 3.6 -1.7 3.4 -1 3.3 -0.4 3.1 0.3 2.9 0.9 2.6 1.7 2.4 2.3 2.1 2.8 1.8 3.4 1.5 3.9 1.1 4.2 0.9 4.4 0.5 4.6 0.1 4.5 -0.1 4.4 -0.5 4.2 -0.9 3.9 -1.1 3.4 -1.5 2.9 -1.8 2.3 -2.1 1.6 -2.4 1 -2.6 0.2 -2.9 -0.4 -3.1 -1 -3.3 -1.6 -3.4 -2.2 -3.6 -2.6 -3.7 -2.9 -3.8 -3.2 -3.9 -3.3 -3.9 -3.3 -3.8 -3.2 -3.9 -3 -3.8 -2.6 -3.7 -2.1 -3.6 -1.7 -3.5 -1 -3.2 -0.4 -3.1 0.3 -2.9 0.9 -2.6 1.7 -2.4 2.3 -2.1 2.8 -1.8 3.5 -1.5 3.8 -1.1 4.2 -0.9 4.4 -0.5 4.6 -0.2 4.5 0.2 4.4 0.5 4.2 0.9 3.9 1.1 3.4 1.5 2.9 1.8 2.3 2.1 1.6 2.4 1 2.6 0.3 2.9 -0.4 3.1 -1.1 3.2 -1.6 3.5 -2.2 3.6 -2.6 3.7 -2.9 3.8 -3.2 3.9 -3.3 3.8 -3.3 3.9 -3.2 3.9 -3 3.8 -2.6 3.7 -2.1 3.6 -1.7 3.4 -1 3.3 -0.4 3.1 0.3 2.9 0.9 2.6 1.7 2.4 2.3 2.1 2.9 1.8 3.4 1.5 3.8 1.1 4.2 0.9 4.4 0.5 4.6 0.1 4.5 -0.1 4.5 -0.5 4.2 -0.9 3.8 -1.1 3.4 -1.5 2.9 -1.8 2.3 -2.1 1.6 -2.4 1 -2.6 0.3 -2.9 -0.4 -3.1 -1.1 -3.3 -1.6 -3.4 -2.2 -3.6 -2.6 -3.7 -2.9 -3.8 -3.2 -3.9 -3.3 -3.9 -3.3 -3.8 -3.2 -3.9 -2.9 -3.8 -2.6 -3.7 -2.2 -3.6 -1.6 -3.5 -1.1 -3.2 -0.4 -3.1 0.3 -2.9 1 -2.6 1.6 -2.4 2.3 -2.1 2.9 -1.8 3.4 -1.5 3.8 -1.1 4.2 -0.9 4.5 -0.5 4.5 -0.2 4.5 0.2 4.5 0.5 4.2 0.9 3.8 1.1 3.4 1.5 2.9 1.8 2.3 2.1 1.6 2.4 1 2.6 0.3 2.9 -0.4 3.1 -1.1 3.2 -1.6 3.5 -2.2 3.6 -2.6 3.7 -2.9 3.8 -3.2 3.9 -3.3 3.8 -3.3 3.9 -3.2 3.9 -2.9 3.8 -2.6 3.7 -2.2 3.6 -1.6 3.4 -1.1 3.3 -0.4 3.1 0.3 2.9 1 2.6 1.6 2.4 2.3 2.1 2.9 1.8 3.4 1.5 3.8 1.1 4.2 0.9 4.5 0.5 4.5 0.1 4.6 -0.1 4.4 -0.5 4.2 -0.9 3.8 -1.1 3.4 -1.5 2.9 -1.8 2.3 -2.1 1.6 -2.4 1 -2.6 0.3 -2.9 -0.4 -3.1 -1 -3.3 -1.7 -3.4 -2.1 -3.6 -2.7 -3.7 -2.9 -3.8 -3.2 -3.9 -3.3 -3.9 -3.3 -3.8 -3.2 -3.9 -2.9 -3.8 -2.6 -3.7 -2.2 -3.6 -1.6 -3.5 -1.1 -3.2 -0.4 -3.1 0.3 -2.9 1 -2.6 1.6 -2.4 2.3 -2.1 2.9 -1.8 3.4 -1.5 3.9 -1.1 4.1 -0.9 4.5 -0.5 4.5 -0.2 4.6 0.2 4.4 0.5 4.2 0.9 3.8 1.1 3.4 1.5 2.9 1.8 2.3 2.1 1.7 2.4 0.9 2.6 0.3 2.9 -0.4 3.1 -1 3.2 -1.7 3.5 -2.1 3.6 -2.6 3.7 -3 3.8 -3.2 3.9 -3.3 3.8 -3.3 3.9 -3.2 3.9 -2.9 3.8 -2.6 3.7 -2.2 3.6 -1.6 3.4 -1.1 3.3 -0.3 3.1 0.2 2.9 1 2.6 1.6 2.4 2.3 2.1 2.9 1.8 3.4 1.5 3.9 1.1 4.2 0.9 4.4 0.5 4.5 0.1 4.6 -0.1 4.4 -0.5 4.2 -0.9 3.9 -1.1 3.4 -1.5 2.8 -1.8 2.3 -2.1 1.7 -2.4 0.9 -2.6 0.3 -2.9 -0.4 -3.1 -1 -3.3 -1.7 -3.4 -2.1 -3.6 -2.6 -3.7 -3 -3.8 -3.2 -3.9 -3.3 -3.9 -3.3 -3.8 -3.1 -3.9 -3 -3.8 -2.6 -3.7 -2.2 -3.6 -1.6 -3.5 -1 -3.2 -0.4 -3.1 0.2 -2.9 1 -2.6 1.7 -2.4 2.2 -2.1 2.9 -1.8 3.4 -1.5 3.9 -1.1 4.2 -0.9 4.4 -0.5 4.5 -0.2 4.6 0.2 4.4 0.5 4.2 0.9 3.9 1.1 3.4 1.5 2.9 1.8 2.2 2.1 1.7 2.4 1 2.6 0.2 2.9 -0.4 3.1 -1 3.2 -1.6 3.5 -2.2 3.6 -2.6 3.7 -3 3.8 -3.1 3.9 -3.3 3.8 -3.3 3.9 -3.2 3.9 -3 3.8 -2.6 3.7 -2.1 3.6 -1.7 3.4 -1 3.3 -0.4 3.1 0.3 2.9 0.9 2.6 1.7 2.4 2.3 2.1 2.8 1.8 3.4 1.5 3.9 1.1 4.2 0.9 4.4 0.5 4.6 0.1 4.5 -0.1 4.4 -0.5 4.2 -0.9 3.9 -1.1 3.4 -1.5 2.9 -1.8 2.3 -2.1 1.6 -2.4 1 -2.6 0.2 -2.9 -0.4 -3.1 -1 -3.3 -1.6 -3.4 -2.2 -3.6 -2.6 -3.7 -3 -3.8 -3.1 -3.9 -3.3 -3.9 -3.3 -3.8 -3.2 -3.9 -3 -3.8 -2.6 -3.7 -2.1 -3.6 -1.7 -3.5 -1 -3.2 -0.4 -3.1 0.3 -2.9 0.9 -2.6 1.7 -2.4 2.3 -2.1 2.8 -1.8 3.5 -1.5 3.8 -1.1 4.2 -0.9 4.4 -0.5 4.6 -0.2 4.5 0.2 4.4 0.5 4.2 0.9 3.9 1.1 3.4 1.5 2.9 1.8 2.3 2.1 1.6 2.4 1 2.6 0.3 2.9 -0.4 3.1 -1.1 3.2 -1.6 3.5 -2.2 3.6 -2.6 3.7 -2.9 3.8 -3.2 3.9 -3.3 3.8 -3.3 3.9 -3.2 3.9 -3 3.8 -2.6 3.7 -2.1 3.6 -1.7 3.4 -1 3.3 -0.4 3.1 0.3 2.9 0.9 2.6 1.7 2.4 2.3 2.1 2.9 1.8 3.4 1.5 3.8 1.1 4.2 0.9 4.4 0.5 4.6 0.1 4.5 -0.1 4.5 -0.5 4.2 -0.9 3.8 -1.1 3.4 -1.5 2.9 -1.8 2.3 -2.1 1.6 -2.4 1 -2.6 0.3 -2.9 -0.4 -3.1 -1.1 -3.3 -1.6 -3.4 -2.2 -3.6 -2.6 -3.7 -2.9 -3.8 -3.2 -3.9 -3.3 -3.9 -3.3 -3.8 -3.2 -3.9 -2.9 -3.8 -2.6 -3.7 -2.2 -3.6 -1.6 -3.5 -1.1 -3.2 -0.4 -3.1 0.3 -2.9 1 -2.6 1.6 -2.4 2.3 -2.1 2.9 -1.8 3.4 -1.5 3.8 -1.1 4.2 -0.9 4.4 -0.5 4.6 -0.2 4.5 0.2 4.5 0.5 4.2 0.9 3.8 1.1 3.4 1.5 2.9 1.8 2.3 2.1 1.6 2.4 1 2.6 0.3 2.9 -0.4 3.1 -1.1 3.2 -1.6 3.5 -2.2 3.6 -2.6 3.7 -2.9 3.8 -3.2 3.9 -3.3 3.8 -3.3 3.9 -3.2 3.9 -2.9 3.8 -2.6 3.7 -2.2 3.6 -1.6 3.4 -1.1 3.3 -0.4 3.1 0.3 2.9 1 2.6 1.6 2.4 2.3 2.1 2.9 1.8 3.4 1.5 3.8 1.1 4.2 0.9 4.5 0.5 4.5 0.1 4.6 -0.1 4.4 -0.5 4.2 -0.9 3.8 -1.1 3.4 -1.5 2.9 -1.8 2.3 -2.1 1.6 -2.4 1 -2.6 0.3 -2.9 -0.4 -3.1 -1 -3.3 -1.7 -3.4 -2.1 -3.6 -2.7 -3.7 -2.9 -3.8 -3.2 -3.9 -3.3 -3.9 -3.3 -3.8 -3.2 -3.9 -2.9 -3.8 -2.6 -3.7 -2.2 -3.6 -1.6 -3.5 -1.1 -3.2 -0.4 -3.1 0.3 -2.9 1 -2.6 1.6 -2.4 2.3 -2.1 2.9 -1.8 3.4 -1.5 3.9 -1.1 4.1 -0.9 4.5 -0.5 4.5 -0.2 4.6 0.2 4.4 0.5 4.2 0.9 3.8 1.1 3.4 1.5 2.9 1.8 2.3 2.1 1.7 2.4 0.9 2.6 0.3 2.9 -0.4 3.1 -1 3.2 -1.7 3.5 -2.1 3.6 -2.6 3.7 -3 3.8 -3.2 3.9 -3.3 3.8 -3.3 3.9 -3.2 3.9 -2.9 3.8 -2.6 3.7 -2.2 3.6 -1.6 3.4 -1.1 3.3 -0.4 3.1 0.3 2.9 1 2.6 1.6 2.4 2.3 2.1 2.9 1.8 3.4 1.5 3.9 1.1 4.2 0.9 4.4 0.5 4.5 0.1 4.6 -0.1 4.4 -0.5 4.2 -0.9 3.8 -1.1 3.5 -1.5 2.8 -1.8 2.3 -2.1 1.7 -2.4 0.9 -2.6 0.3 -2.9 -0.4 -3.1 -1 -3.3 -1.7 -3.4 -2.1 -3.6 -2.6 -3.7 -3 -3.8 -3.2 -3.9 -3.3 -3.9M154.7 463.1l-3.3 -3.9 -3.1 -3.9 -3 -3.8 -2.6 -3.7 -2.2 -3.6 -1.6 -3.4 -1 -3.3 -0.4 -3.1 0.2 -2.9 1 -2.6 1.7 -2.4 2.2 -2.1 2.9 -1.8 3.4 -1.5 3.9 -1.1 4.2 -0.9 4.4 -0.5 4.5 -0.1 4.6 0.1 4.4 0.5 4.2 0.9 3.9 1.1 3.4 1.5 2.9 1.8 2.2 2.1 1.7 2.4 1 2.6 0.2 2.9 -0.4 3.1 -1 3.3 -1.6 3.4 -2.2 3.6 -2.6 3.7 -3 3.8 -3.1 3.9 -3.3 3.9 -3.3 3.8 -3.2 3.9 -3 3.8 -2.6 3.7 -2.1 3.6 -1.7 3.5 -1 3.2 -0.4 3.1 0.3 2.9 0.9 2.6 1.7 2.4 2.3 2.1 2.8 1.8 3.4 1.5 3.9 1.1 4.2 0.9 4.4 0.5 4.6 0.2 4.5 -0.2 4.4 -0.5 4.2 -0.9 3.9 -1.1 3.4 -1.5 2.9 -1.8 2.3 -2.1 1.6 -2.4 1 -2.6 0.2 -2.9 -0.4 -3.1 -1 -3.2 -1.6 -3.5 -2.2 -3.6 -2.6 -3.7 -2.9 -3.8 -3.2 -3.9 -3.3 -3.8 -3.3 -3.9 -3.2 -3.9 -3 -3.8 -2.6 -3.7 -2.1 -3.6 -1.7 -3.4 -1 -3.3 -0.4 -3.1 0.3 -2.9 0.9 -2.6 1.7 -2.4 2.3 -2.1 2.8 -1.8 3.5 -1.5 3.8 -1.1 4.2 -0.9 4.4 -0.5 4.6 -0.1 4.5 0.1 4.4 0.5 4.2 0.9 3.9 1.1 3.4 1.5 2.9 1.8 2.3 2.1 1.6 2.4 1 2.6 0.3 2.9 -0.4 3.1 -1.1 3.3 -1.6 3.4 -2.2 3.6 -2.6 3.7 -2.9 3.8 -3.2 3.9 -3.3 3.9 -3.3 3.8 -3.2 3.9 -3 3.8 -2.6 3.7 -2.1 3.6 -1.7 3.5 -1 3.2 -0.4 3.1 0.3 2.9 0.9 2.6 1.7 2.4 2.3 2.1 2.9 1.8 3.4 1.5 3.8 1.1 4.2 0.9 4.4 0.5 4.6 0.2 4.5 -0.2 4.5 -0.5 4.2 -0.9 3.8 -1.1 3.4 -1.5 2.9 -1.8 2.3 -2.1 1.6 -2.4 1 -2.6 0.3 -2.9 -0.4 -3.1 -1.1 -3.2 -1.6 -3.5 -2.2 -3.6 -2.6 -3.7 -2.9 -3.8 -3.2 -3.9 -3.3 -3.8 -3.3 -3.9 -3.2 -3.9 -2.9 -3.8 -2.6 -3.7 -2.2 -3.6 -1.6 -3.4 -1.1 -3.3 -0.4 -3.1 0.3 -2.9 1 -2.6 1.6 -2.4 2.3 -2.1 2.9 -1.8 3.4 -1.5 3.8 -1.1 4.2 -0.9 4.5 -0.5 4.5 -0.1 4.5 0.1 4.5 0.5 4.2 0.9 3.8 1.1 3.4 1.5 2.9 1.8 2.3 2.1 1.6 2.4 1 2.6 0.3 2.9 -0.4 3.1 -1.1 3.3 -1.6 3.4 -2.2 3.6 -2.6 3.7 -2.9 3.8 -3.2 3.9 -3.3 3.9 -3.3 3.8 -3.2 3.9 -2.9 3.8 -2.6 3.7 -2.2 3.6 -1.6 3.5 -1.1 3.2 -0.4 3.1 0.3 2.9 1 2.6 1.6 2.4 2.3 2.1 2.9 1.8 3.4 1.5 3.8 1.1 4.2 0.9 4.5 0.5 4.5 0.2 4.6 -0.2 4.4 -0.5 4.2 -0.9 3.8 -1.1 3.4 -1.5 2.9 -1.8 2.3 -2.1 1.6 -2.4 1 -2.6 0.3 -2.9 -0.4 -3.1 -1 -3.2 -1.7 -3.5 -2.1 -3.6 -2.7 -3.7 -2.9 -3.8 -3.2 -3.9 -3.3 -3.8 -3.3 -3.9 -3.2 -3.9 -2.9 -3.8 -2.6 -3.7 -2.2 -3.6 -1.6 -3.4 -1.1 -3.3 -0.4 -3.1 0.3 -2.9 1 -2.6 1.6 -2.4 2.3 -2.1 2.9 -1.8 3.4 -1.5 3.9 -1.1 4.1 -0.9 4.5 -0.5 4.5 -0.1 4.6 0.1 4.4 0.5 4.2 0.9 3.8 1.1 3.4 1.5 2.9 1.8 2.3 2.1 1.7 2.4 0.9 2.6 0.3 2.9 -0.4 3.1 -1 3.3 -1.7 3.4 -2.1 3.6 -2.6 3.7 -3 3.8 -3.2 3.9 -3.3 3.9 -3.3 3.8 -3.2 3.9 -2.9 3.8 -2.6 3.7 -2.2 3.6 -1.6 3.5 -1.1 3.2 -0.3 3.1 0.2 2.9 1 2.6 1.6 2.4 2.3 2.1 2.9 1.8 3.4 1.5 3.9 1.1 4.2 0.9 4.4 0.5 4.5 0.2 4.6 -0.2 4.4 -0.5 4.2 -0.9 3.9 -1.1 3.4 -1.5 2.8 -1.8 2.3 -2.1 1.7 -2.4 0.9 -2.6 0.3 -2.9 -0.4 -3.1 -1 -3.2 -1.7 -3.5 -2.1 -3.6 -2.6 -3.7 -3 -3.8 -3.2 -3.9 -3.3 -3.8 -3.3 -3.9 -3.1 -3.9 -3 -3.8 -2.6 -3.7 -2.2 -3.6 -1.6 -3.4 -1 -3.3 -0.4 -3.1 0.2 -2.9 1 -2.6 1.7 -2.4 2.2 -2.1 2.9 -1.8 3.4 -1.5 3.9 -1.1 4.2 -0.9 4.4 -0.5 4.5 -0.1 4.6 0.1 4.4 0.5 4.2 0.9 3.9 1.1 3.4 1.5 2.9 1.8 2.2 2.1 1.7 2.4 1 2.6 0.2 2.9 -0.4 3.1 -1 3.3 -1.6 3.4 -2.2 3.6 -2.6 3.7 -3 3.8 -3.1 3.9 -3.3 3.9 -3.3 3.8 -3.2 3.9 -3 3.8 -2.6 3.7 -2.1 3.6 -1.7 3.5 -1 3.2 -0.4 3.1 0.3 2.9 0.9 2.6 1.7 2.4 2.3 2.1 2.8 1.8 3.4 1.5 3.9 1.1 4.2 0.9 4.4 0.5 4.6 0.2 4.5 -0.2 4.4 -0.5 4.2 -0.9 3.9 -1.1 3.4 -1.5 2.9 -1.8 2.3 -2.1 1.6 -2.4 1 -2.6 0.2 -2.9 -0.4 -3.1 -1 -3.2 -1.6 -3.5 -2.2 -3.6 -2.6 -3.7 -3 -3.8 -3.1 -3.9 -3.3 -3.8 -3.3 -3.9 -3.2 -3.9 -3 -3.8 -2.6 -3.7 -2.1 -3.6 -1.7 -3.4 -1 -3.3 -0.4 -3.1 0.3 -2.9 0.9 -2.6 1.7 -2.4 2.3 -2.1 2.8 -1.8 3.5 -1.5 3.8 -1.1 4.2 -0.9 4.4 -0.5 4.6 -0.1 4.5 0.1 4.4 0.5 4.2 0.9 3.9 1.1 3.4 1.5 2.9 1.8 2.3 2.1 1.6 2.4 1 2.6 0.3 2.9 -0.4 3.1 -1.1 3.3 -1.6 3.4 -2.2 3.6 -2.6 3.7 -2.9 3.8 -3.2 3.9 -3.3 3.9 -3.3 3.8 -3.2 3.9 -3 3.8 -2.6 3.7 -2.1 3.6 -1.7 3.5 -1 3.2 -0.4 3.1 0.3 2.9 0.9 2.6 1.7 2.4 2.3 2.1 2.9 1.8 3.4 1.5 3.8 1.1 4.2 0.9 4.4 0.5 4.6 0.2 4.5 -0.2 4.5 -0.5 4.2 -0.9 3.8 -1.1 3.4 -1.5 2.9 -1.8 2.3 -2.1 1.6 -2.4 1 -2.6 0.3 -2.9 -0.4 -3.1 -1.1 -3.2 -1.6 -3.5 -2.2 -3.6 -2.6 -3.7 -2.9 -3.8 -3.2 -3.9 -3.3 -3.8 -3.3 -3.9 -3.2 -3.9 -2.9 -3.8 -2.6 -3.7 -2.2 -3.6 -1.6 -3.4 -1.1 -3.3 -0.4 -3.1 0.3 -2.9 1 -2.6 1.6 -2.4 2.3 -2.1 2.9 -1.8 3.4 -1.5 3.8 -1.1 4.2 -0.9 4.4 -0.5 4.6 -0.1 4.5 0.1 4.5 0.5 4.2 0.9 3.8 1.1 3.4 1.5 2.9 1.8 2.3 2.1 1.6 2.4 1 2.6 0.3 2.9 -0.4 3.1 -1.1 3.3 -1.6 3.4 -2.2 3.6 -2.6 3.7 -2.9 3.8 -3.2 3.9 -3.3 3.9 -3.3 3.8 -3.2 3.9 -2.9 3.8 -2.6 3.7 -2.2 3.6 -1.6 3.5 -1.1 3.2 -0.4 3.1 0.3 2.9 1 2.6 1.6 2.4 2.3 2.1 2.9 1.8 3.4 1.5 3.8 1.1 4.2 0.9 4.5 0.5 4.5 0.2 4.6 -0.2 4.4 -0.5 4.2 -0.9 3.8 -1.1 3.4 -1.5 2.9 -1.8 2.3 -2.1 1.6 -2.4 1 -2.6 0.3 -2.9 -0.4 -3.1 -1 -3.2 -1.7 -3.5 -2.1 -3.6 -2.7 -3.7 -2.9 -3.8 -3.2 -3.9 -3.3 -3.8 -3.3 -3.9 -3.2 -3.9 -2.9 -3.8 -2.6 -3.7 -2.2 -3.6 -1.6 -3.4 -1.1 -3.3 -0.4 -3.1 0.3 -2.9 1 -2.6 1.6 -2.4 2.3 -2.1 2.9 -1.8 3.4 -1.5 3.9 -1.1 4.1 -0.9 4.5 -0.5 4.5 -0.1 4.6 0.1 4.4 0.5 4.2 0.9 3.8 1.1 3.4 1.5 2.9 1.8 2.3 2.1 1.7 2.4 0.9 2.6 0.3 2.9 -0.4 3.1 -1 3.3 -1.7 3.4 -2.1 3.6 -2.6 3.7 -3 3.8 -3.2 3.9 -3.3 3.9 -3.3 3.8 -3.2 3.9 -2.9 3.8 -2.6 3.7 -2.2 3.6 -1.6 3.5 -1.1 3.2 -0.4 3.1 0.3 2.9 1 2.6 1.6 2.4 2.3 2.1 2.9 1.8 3.4 1.5 3.9 1.1 4.2 0.9 4.4 0.5 4.5 0.2 4.6 -0.2 4.4 -0.5 4.2 -0.9 3.8 -1.1 3.5 -1.5 2.8 -1.8 2.3 -2.1 1.7 -2.4 0.9 -2.6 0.3 -2.9 -0.4 -3.1 -1 -3.2 -1.7 -3.5 -2.1 -3.6 -2.6 -3.7 -3 -3.8 -3.2 -3.9 -3.3 -3.8"/></defs><g fill="none"><use href="#pat" stroke="#d2effa" stroke-width="2.4"/><use href="#pat" stroke="#4c9dd0" stroke-width="0.95"/></g><circle cx="114.8" cy="56.2" r="1.1" fill="#e8e8e8"/><path d="M564.5 281.3 L574.8 283.5 L574.8 448.1 L564.5 451.3 Z" fill="#c6c6c6"/><path d="M564.6 409.2 L574.8 404.6" stroke="#7a5430" stroke-width="1.1"/><rect x="575.3" y="58.9" width="405.5" height="452" rx="2" fill="#0f1018" stroke="#3a3c46" stroke-width="1"/><text x="578.2" y="73.1" font-size="8.6" fill="#d2d2d2" textLength="50.9" lengthAdjust="spacingAndGlyphs">Python Scripts</text><rect x="645.5" y="62.9" width="74.2" height="14.8" rx="3" fill="#0c0d13" stroke="#50525c" stroke-width="1.1"/><text x="648.2" y="72.3" font-size="5.4" fill="#f2f2f2" textLength="44.6" lengthAdjust="spacingAndGlyphs">Toolpath_Examples</text><path d="M708 69 L713.4 69 L710.7 71.8 Z" fill="#f0f0f0"/><rect x="725.2" y="62.9" width="124.5" height="14.8" rx="3" fill="#0c0d13" stroke="#50525c" stroke-width="1.1"/><text x="727.9000000000001" y="72.3" font-size="5.4" fill="#f2f2f2" textLength="96.4" lengthAdjust="spacingAndGlyphs">Meltpool_Stability\openjob_tracks_test.py</text><path d="M838.3 69 L843.6999999999999 69 L841.0 71.8 Z" fill="#f0f0f0"/><rect x="869.2" y="62.9" width="29.7" height="14.8" rx="3" fill="#0c0d13" stroke="#50525c" stroke-width="1.1"/><text x="884.0500000000001" y="72.9" font-size="6.8" fill="#d0d0d0" text-anchor="middle" textLength="14.3" lengthAdjust="spacingAndGlyphs">Save</text><rect x="908.5" y="62.9" width="29.9" height="14.8" rx="3" fill="#0c0d13" stroke="#50525c" stroke-width="1.1"/><text x="923.45" y="72.9" font-size="6.8" fill="#d0d0d0" text-anchor="middle" textLength="12.5" lengthAdjust="spacingAndGlyphs">Run</text><rect x="948" y="62.9" width="29.6" height="14.8" rx="3" fill="#0c0d13" stroke="#50525c" stroke-width="1.1"/><text x="962.8" y="72.9" font-size="6.8" fill="#d0d0d0" text-anchor="middle" textLength="17" lengthAdjust="spacingAndGlyphs">Close</text><rect x="578.6" y="81.3" width="398.2" height="0.9" fill="#2c2e36"/><rect x="586" y="87.2" width="214" height="6.8" fill="#1b1d26"/><rect x="588.3" y="161.0" width="0.6" height="214.7" fill="#262832"/><rect x="598.6" y="254.9" width="0.6" height="47.0" fill="#262832"/><rect x="598.6" y="335.5" width="0.6" height="20.1" fill="#262832"/><rect x="608.9" y="342.2" width="0.6" height="13.4" fill="#262832"/><rect x="800.2" y="84.8" width="40.3" height="291.5" fill="#383c52"/><g class="code" transform="scale(0.8 1)" font-size="5.4" font-family="Liberation Mono"><text x="729.25" y="92.60" class="ln1" text-anchor="end">1</text><text y="92.60" xml:space="preserve"><tspan x="733.75" class="k">import</tspan><tspan x="756.41" class="i">sys</tspan></text><text x="729.25" y="99.31" class="ln" text-anchor="end">2</text><text y="99.31" xml:space="preserve"><tspan x="733.75" class="h">########################</tspan></text><text x="729.25" y="106.02" class="ln" text-anchor="end">3</text><text y="106.02" xml:space="preserve"><tspan x="733.75" class="i">sys</tspan><tspan x="743.46" class="i">.</tspan><tspan x="746.70" class="i">path</tspan><tspan x="759.65" class="i">.</tspan><tspan x="762.89" class="i">insert</tspan><tspan x="782.31" class="i">(</tspan><tspan x="785.55" class="n">0</tspan><tspan x="788.79" class="i">,</tspan><tspan x="792.02" class="s">&quot;C:/git/config&quot;</tspan><tspan x="840.59" class="i">)</tspan></text><text x="729.25" y="112.73" class="ln" text-anchor="end">4</text><text y="112.73" xml:space="preserve"><tspan x="733.75" class="k">import</tspan><tspan x="756.41" class="i">spark_directoryconfig</tspan></text><text x="729.25" y="119.44" class="ln" text-anchor="end">5</text><text y="119.44" xml:space="preserve"><tspan x="733.75" class="h">########################</tspan></text><text x="729.25" y="126.15" class="ln" text-anchor="end">6</text><text y="126.15" xml:space="preserve"><tspan x="733.75" class="k">import</tspan><tspan x="756.41" class="i">dyndrite</tspan></text><text x="729.25" y="132.86" class="ln" text-anchor="end">7</text><text y="132.86" xml:space="preserve"><tspan x="733.75" class="k">import</tspan><tspan x="756.41" class="i">os</tspan></text><text x="729.25" y="139.57" class="ln" text-anchor="end">8</text><text y="139.57" xml:space="preserve"><tspan x="733.75" class="k">import</tspan><tspan x="756.41" class="i">time</tspan></text><text x="729.25" y="146.28" class="ln" text-anchor="end">9</text><text x="729.25" y="152.99" class="ln" text-anchor="end">10</text><text x="729.25" y="159.70" class="ln" text-anchor="end">11</text><text y="159.70" xml:space="preserve"><tspan x="733.75" class="d">def</tspan><tspan x="746.70" class="i">main</tspan><tspan x="759.65" class="i">(</tspan><tspan x="762.89" class="i">)</tspan><tspan x="766.12" class="i">:</tspan></text><text x="729.25" y="166.41" class="ln" text-anchor="end">12</text><text y="166.41" xml:space="preserve"><tspan x="746.70" class="i">dyn</tspan><tspan x="759.65" class="i">=</tspan><tspan x="766.12" class="i">dyndrite</tspan><tspan x="792.02" class="i">.</tspan><tspan x="795.26" class="i">launch</tspan><tspan x="814.69" class="i">(</tspan><tspan x="817.92" class="i">)</tspan></text><text x="729.25" y="173.12" class="ln" text-anchor="end">13</text><text x="729.25" y="179.83" class="ln" text-anchor="end">14</text><text y="179.83" xml:space="preserve"><tspan x="746.70" class="i">vp</tspan><tspan x="756.41" class="i">=</tspan><tspan x="762.89" class="i">dyn</tspan><tspan x="772.60" class="i">.</tspan><tspan x="775.84" class="i">new_process</tspan><tspan x="811.45" class="i">(</tspan><tspan x="814.69" class="i">dyn</tspan><tspan x="824.40" class="i">.</tspan><tspan x="827.64" class="i">VectorProcess</tspan><tspan x="869.72" class="i">)</tspan></text><text x="729.25" y="186.54" class="ln" text-anchor="end">15</text><text y="186.54" xml:space="preserve"><tspan x="746.70" class="i">vp</tspan><tspan x="753.17" class="i">.</tspan><tspan x="756.41" class="i">finalize</tspan><tspan x="782.31" class="i">(</tspan><tspan x="785.55" class="i">)</tspan></text><text x="729.25" y="193.25" class="ln" text-anchor="end">16</text><text x="729.25" y="199.96" class="ln" text-anchor="end">17</text><text y="199.96" xml:space="preserve"><tspan x="746.70" class="i">open_job_settings</tspan><tspan x="804.98" class="i">=</tspan><tspan x="811.45" class="i">vp</tspan><tspan x="817.92" class="i">.</tspan><tspan x="821.16" class="i">get_or_create_open_job_settings</tspan><tspan x="921.52" class="i">(</tspan><tspan x="924.76" class="i">)</tspan></text><text x="729.25" y="206.67" class="ln" text-anchor="end">18</text><text y="206.67" xml:space="preserve"><tspan x="746.70" class="i">open_job_settings</tspan><tspan x="801.74" class="i">.</tspan><tspan x="804.98" class="i">set_target_printer</tspan><tspan x="863.25" class="i">(</tspan><tspan x="866.49" class="s">&quot;EOS 504&quot;</tspan><tspan x="895.62" class="i">)</tspan></text><text x="729.25" y="213.38" class="ln" text-anchor="end">19</text><text y="213.38" xml:space="preserve"><tspan x="746.70" class="i">open_job_settings</tspan><tspan x="801.74" class="i">.</tspan><tspan x="804.98" class="i">set_material_set</tspan><tspan x="856.77" class="i">(</tspan><tspan x="860.01" class="s">&quot;DebugMaterialSet&quot;</tspan><tspan x="918.29" class="i">,</tspan><tspan x="924.76" class="s">&quot;debug version&quot;</tspan><tspan x="973.32" class="i">,</tspan></text><text y="220.09" xml:space="preserve"><tspan x="733.75" class="s">&quot;debug material name&quot;</tspan><tspan x="801.74" class="i">,</tspan><tspan x="808.21" class="n">0.04</tspan><tspan x="821.16" class="i">)</tspan></text><text x="729.25" y="226.80" class="ln" text-anchor="end">20</text><text y="226.80" xml:space="preserve"><tspan x="746.70" class="i">open_job_settings</tspan><tspan x="801.74" class="i">.</tspan><tspan x="804.98" class="i">set_overlap_settings</tspan><tspan x="869.72" class="i">(</tspan><tspan x="872.96" class="i">open_job_settings</tspan><tspan x="928.00" class="i">.</tspan><tspan x="931.24" class="i">OverlapFunction</tspan><tspan x="979.80" class="i">.</tspan></text><text y="233.51" xml:space="preserve"><tspan x="733.75" class="i">SINE</tspan><tspan x="746.70" class="i">,</tspan><tspan x="753.17" class="n">1.5</tspan><tspan x="762.89" class="i">,</tspan><tspan x="769.36" class="n">1.6</tspan><tspan x="779.07" class="i">,</tspan><tspan x="785.55" class="n">1.7</tspan><tspan x="795.26" class="i">)</tspan></text><text x="729.25" y="240.22" class="ln" text-anchor="end">21</text><text x="729.25" y="246.93" class="ln" text-anchor="end">22</text><text y="246.93" xml:space="preserve"><tspan x="746.70" class="i">tracks_and_names</tspan><tspan x="801.74" class="i">=</tspan><tspan x="808.21" class="i">[</tspan><tspan x="811.45" class="i">]</tspan></text><text x="729.25" y="253.64" class="ln" text-anchor="end">23</text><text y="253.64" xml:space="preserve"><tspan x="746.70" class="d">for</tspan><tspan x="759.65" class="i">i</tspan><tspan x="766.12" class="b">in</tspan><tspan x="775.84" class="b">range</tspan><tspan x="792.02" class="i">(</tspan><tspan x="795.26" class="n">10</tspan><tspan x="801.74" class="i">)</tspan><tspan x="804.98" class="i">:</tspan></text><text x="729.25" y="260.35" class="ln" text-anchor="end">24</text><text y="260.35" xml:space="preserve"><tspan x="759.65" class="i">tracks_and_names</tspan><tspan x="811.45" class="i">.</tspan><tspan x="814.69" class="i">append</tspan><tspan x="834.11" class="i">(</tspan><tspan x="837.35" class="i">(</tspan><tspan x="840.59" class="i">[</tspan><tspan x="843.82" class="i">(</tspan><tspan x="847.06" class="i">i</tspan><tspan x="853.54" class="i">*</tspan><tspan x="860.01" class="n">5</tspan><tspan x="863.25" class="i">,</tspan><tspan x="869.72" class="n">0</tspan><tspan x="872.96" class="i">)</tspan><tspan x="876.20" class="i">,</tspan><tspan x="882.67" class="i">(</tspan><tspan x="885.91" class="i">i</tspan><tspan x="892.39" class="i">*</tspan><tspan x="898.86" class="n">7</tspan><tspan x="902.10" class="i">,</tspan><tspan x="908.57" class="n">10</tspan><tspan x="915.05" class="i">)</tspan><tspan x="918.29" class="i">]</tspan><tspan x="921.52" class="i">,</tspan><tspan x="928.00" class="s">&quot;track_&quot;</tspan><tspan x="957.14" class="i">+</tspan><tspan x="963.61" class="b">str</tspan><tspan x="973.32" class="i">(</tspan><tspan x="976.56" class="i">i</tspan><tspan x="979.80" class="i">)</tspan><tspan x="983.04" class="i">)</tspan><tspan x="986.27" class="i">)</tspan></text><text x="729.25" y="267.06" class="ln" text-anchor="end">25</text><text y="267.06" xml:space="preserve"><tspan x="759.65" class="i">open_job_settings</tspan><tspan x="814.69" class="i">.</tspan><tspan x="817.92" class="i">set_segment_exposure_set</tspan><tspan x="895.62" class="i">(</tspan><tspan x="898.86" class="i">i</tspan><tspan x="902.10" class="i">,</tspan><tspan x="908.57" class="s">&quot;track: &quot;</tspan><tspan x="940.95" class="i">+</tspan><tspan x="947.43" class="b">str</tspan><tspan x="957.14" class="i">(</tspan><tspan x="960.37" class="i">i</tspan><tspan x="963.61" class="i">)</tspan><tspan x="970.09" class="i">+</tspan><tspan x="976.56" class="s">&quot;</tspan></text><text y="273.77" xml:space="preserve"><tspan x="733.75" class="s">Debug Set&quot;</tspan><tspan x="766.12" class="i">)</tspan></text><text x="729.25" y="280.48" class="ln" text-anchor="end">26</text><text y="280.48" xml:space="preserve"><tspan x="759.65" class="i">open_job_settings</tspan><tspan x="814.69" class="i">.</tspan><tspan x="817.92" class="i">set_segment_manual_laser_assignment</tspan><tspan x="931.24" class="i">(</tspan><tspan x="934.47" class="i">i</tspan><tspan x="937.71" class="i">,</tspan><tspan x="944.19" class="i">i</tspan><tspan x="950.66" class="i">%</tspan><tspan x="957.14" class="n">4</tspan><tspan x="963.61" class="i">+</tspan><tspan x="970.09" class="n">1</tspan><tspan x="973.32" class="i">)</tspan></text><text x="729.25" y="287.19" class="ln" text-anchor="end">27</text><text y="287.19" xml:space="preserve"><tspan x="759.65" class="i">open_job_settings</tspan><tspan x="814.69" class="i">.</tspan><tspan x="817.92" class="i">set_segment_beam_compensation</tspan><tspan x="911.81" class="i">(</tspan><tspan x="915.05" class="i">i</tspan><tspan x="918.29" class="i">,</tspan><tspan x="924.76" class="n">1</tspan><tspan x="928.00" class="i">)</tspan></text><text x="729.25" y="293.90" class="ln" text-anchor="end">28</text><text y="293.90" xml:space="preserve"><tspan x="759.65" class="i">open_job_settings</tspan><tspan x="814.69" class="i">.</tspan><tspan x="817.92" class="i">set_segment_scaling</tspan><tspan x="879.44" class="i">(</tspan><tspan x="882.67" class="i">i</tspan><tspan x="885.91" class="i">,</tspan><tspan x="892.39" class="i">(</tspan><tspan x="895.62" class="i">-</tspan><tspan x="898.86" class="n">1</tspan><tspan x="902.10" class="i">,</tspan><tspan x="908.57" class="n">1</tspan><tspan x="911.81" class="i">)</tspan><tspan x="915.05" class="i">)</tspan></text><text x="729.25" y="300.61" class="ln" text-anchor="end">29</text><text y="300.61" xml:space="preserve"><tspan x="759.65" class="i">open_job_settings</tspan><tspan x="814.69" class="i">.</tspan><tspan x="817.92" class="i">set_segment_scaling_reference_point</tspan><tspan x="931.24" class="i">(</tspan><tspan x="934.47" class="i">i</tspan><tspan x="937.71" class="i">,</tspan><tspan x="944.19" class="i">(</tspan><tspan x="947.43" class="n">1</tspan><tspan x="950.66" class="i">,</tspan><tspan x="957.14" class="i">-</tspan><tspan x="960.37" class="n">1</tspan><tspan x="963.61" class="i">)</tspan><tspan x="966.85" class="i">)</tspan></text><text x="729.25" y="307.32" class="ln" text-anchor="end">30</text><text x="729.25" y="314.03" class="ln" text-anchor="end">31</text><text y="314.03" xml:space="preserve"><tspan x="746.70" class="i">out_dir</tspan><tspan x="772.60" class="i">=</tspan><tspan x="779.07" class="i">dyn</tspan><tspan x="788.79" class="i">.</tspan><tspan x="792.02" class="i">work_path</tspan><tspan x="824.40" class="i">/</tspan><tspan x="830.88" class="s">&quot;openjob&quot;</tspan></text><text x="729.25" y="320.74" class="ln" text-anchor="end">32</text><text y="320.74" xml:space="preserve"><tspan x="746.70" class="i">os</tspan><tspan x="753.17" class="i">.</tspan><tspan x="756.41" class="i">makedirs</tspan><tspan x="782.31" class="i">(</tspan><tspan x="785.55" class="i">out_dir</tspan><tspan x="808.21" class="i">,</tspan><tspan x="814.69" class="i">exist_ok</tspan><tspan x="840.59" class="i">=</tspan><tspan x="843.82" class="b">True</tspan><tspan x="856.77" class="i">)</tspan></text><text x="729.25" y="327.45" class="ln" text-anchor="end">33</text><text x="729.25" y="334.16" class="ln" text-anchor="end">34</text><text y="334.16" xml:space="preserve"><tspan x="746.70" class="d">def</tspan><tspan x="759.65" class="i">cb</tspan><tspan x="766.12" class="i">(</tspan><tspan x="769.36" class="i">ctx</tspan><tspan x="779.07" class="i">:</tspan><tspan x="785.55" class="i">dyn</tspan><tspan x="795.26" class="i">.</tspan><tspan x="798.50" class="i">VectorProcess</tspan><tspan x="840.59" class="i">,</tspan><tspan x="847.06" class="i">writer</tspan><tspan x="866.49" class="i">,</tspan><tspan x="872.96" class="i">layer_idx</tspan><tspan x="902.10" class="i">)</tspan><tspan x="905.34" class="i">:</tspan></text><text x="729.25" y="340.87" class="ln" text-anchor="end">35</text><text y="340.87" xml:space="preserve"><tspan x="759.65" class="d">for</tspan><tspan x="772.60" class="b">id</tspan><tspan x="779.07" class="i">,</tspan><tspan x="785.55" class="i">track_and_name</tspan><tspan x="834.11" class="b">in</tspan><tspan x="843.82" class="b">enumerate</tspan><tspan x="872.96" class="i">(</tspan><tspan x="876.20" class="i">tracks_and_names</tspan><tspan x="928.00" class="i">)</tspan><tspan x="931.24" class="i">:</tspan></text><text x="729.25" y="347.58" class="ln" text-anchor="end">36</text><text y="347.58" xml:space="preserve"><tspan x="772.60" class="b">print</tspan><tspan x="788.79" class="i">(</tspan><tspan x="792.02" class="i">track_and_name</tspan><tspan x="837.35" class="i">[</tspan><tspan x="840.59" class="n">1</tspan><tspan x="843.82" class="i">]</tspan><tspan x="847.06" class="i">)</tspan></text><text x="729.25" y="354.29" class="ln" text-anchor="end">37</text><text y="354.29" xml:space="preserve"><tspan x="772.60" class="i">writer</tspan><tspan x="792.02" class="i">.</tspan><tspan x="795.26" class="i">write_polyline</tspan><tspan x="840.59" class="i">(</tspan><tspan x="843.82" class="i">track_and_name</tspan><tspan x="889.15" class="i">[</tspan><tspan x="892.39" class="n">0</tspan><tspan x="895.62" class="i">]</tspan><tspan x="898.86" class="i">,</tspan><tspan x="905.34" class="b">id</tspan><tspan x="911.81" class="i">,</tspan><tspan x="918.29" class="i">track_and_name</tspan><tspan x="963.61" class="i">[</tspan><tspan x="966.85" class="n">1</tspan><tspan x="970.09" class="i">]</tspan><tspan x="973.32" class="i">)</tspan></text><text x="729.25" y="361.00" class="ln" text-anchor="end">38</text><text x="729.25" y="367.71" class="ln" text-anchor="end">39</text><text y="367.71" xml:space="preserve"><tspan x="746.70" class="i">writing_start</tspan><tspan x="792.02" class="i">=</tspan><tspan x="798.50" class="i">time</tspan><tspan x="811.45" class="i">.</tspan><tspan x="814.69" class="i">time</tspan><tspan x="827.64" class="i">(</tspan><tspan x="830.88" class="i">)</tspan></text><text x="729.25" y="374.42" class="ln" text-anchor="end">40</text><text y="374.42" xml:space="preserve"><tspan x="746.70" class="c"># Uses our custom openjz file writer</tspan></text></g><g opacity="0.6"><rect x="801.00" y="85.60" width="2.88" height="0.55" fill="#c8447e"/><rect x="804.36" y="85.60" width="1.44" height="0.55" fill="#e6e6e6"/><rect x="801.00" y="86.81" width="11.52" height="0.55" fill="#8a8a86"/><rect x="801.00" y="88.02" width="1.44" height="0.55" fill="#e6e6e6"/><rect x="802.44" y="88.02" width="0.48" height="0.55" fill="#e6e6e6"/><rect x="802.92" y="88.02" width="1.92" height="0.55" fill="#e6e6e6"/><rect x="804.84" y="88.02" width="0.48" height="0.55" fill="#e6e6e6"/><rect x="805.32" y="88.02" width="2.88" height="0.55" fill="#e6e6e6"/><rect x="808.20" y="88.02" width="0.48" height="0.55" fill="#e6e6e6"/><rect x="808.68" y="88.02" width="0.48" height="0.55" fill="#c2d6b2"/><rect x="809.16" y="88.02" width="0.48" height="0.55" fill="#e6e6e6"/><rect x="809.64" y="88.02" width="7.20" height="0.55" fill="#dcd48a"/><rect x="816.84" y="88.02" width="0.48" height="0.55" fill="#e6e6e6"/><rect x="801.00" y="89.23" width="2.88" height="0.55" fill="#c8447e"/><rect x="804.36" y="89.23" width="10.08" height="0.55" fill="#e6e6e6"/><rect x="801.00" y="90.44" width="11.52" height="0.55" fill="#8a8a86"/><rect x="801.00" y="91.65" width="2.88" height="0.55" fill="#c8447e"/><rect x="804.36" y="91.65" width="3.84" height="0.55" fill="#e6e6e6"/><rect x="801.00" y="92.86" width="2.88" height="0.55" fill="#c8447e"/><rect x="804.36" y="92.86" width="0.96" height="0.55" fill="#e6e6e6"/><rect x="801.00" y="94.07" width="2.88" height="0.55" fill="#c8447e"/><rect x="804.36" y="94.07" width="1.92" height="0.55" fill="#e6e6e6"/><rect x="801.00" y="97.70" width="1.44" height="0.55" fill="#b8306a"/><rect x="802.92" y="97.70" width="1.92" height="0.55" fill="#e6e6e6"/><rect x="804.84" y="97.70" width="0.48" height="0.55" fill="#e6e6e6"/><rect x="805.32" y="97.70" width="0.48" height="0.55" fill="#e6e6e6"/><rect x="805.80" y="97.70" width="0.48" height="0.55" fill="#e6e6e6"/><rect x="802.92" y="98.91" width="1.44" height="0.55" fill="#e6e6e6"/><rect x="804.84" y="98.91" width="0.48" height="0.55" fill="#e6e6e6"/><rect x="805.80" y="98.91" width="3.84" height="0.55" fill="#e6e6e6"/><rect x="809.64" y="98.91" width="0.48" height="0.55" fill="#e6e6e6"/><rect x="810.12" y="98.91" width="2.88" height="0.55" fill="#e6e6e6"/><rect x="813.00" y="98.91" width="0.48" height="0.55" fill="#e6e6e6"/><rect x="813.48" y="98.91" width="0.48" height="0.55" fill="#e6e6e6"/><rect x="802.92" y="101.33" width="0.96" height="0.55" fill="#e6e6e6"/><rect x="804.36" y="101.33" width="0.48" height="0.55" fill="#e6e6e6"/><rect x="805.32" y="101.33" width="1.44" height="0.55" fill="#e6e6e6"/><rect x="806.76" y="101.33" width="0.48" height="0.55" fill="#e6e6e6"/><rect x="807.24" y="101.33" width="5.28" height="0.55" fill="#e6e6e6"/><rect x="812.52" y="101.33" width="0.48" height="0.55" fill="#e6e6e6"/><rect x="813.00" y="101.33" width="1.44" height="0.55" fill="#e6e6e6"/><rect x="814.44" y="101.33" width="0.48" height="0.55" fill="#e6e6e6"/><rect x="814.92" y="101.33" width="6.24" height="0.55" fill="#e6e6e6"/><rect x="821.16" y="101.33" width="0.48" height="0.55" fill="#e6e6e6"/><rect x="802.92" y="102.54" width="0.96" height="0.55" fill="#e6e6e6"/><rect x="803.88" y="102.54" width="0.48" height="0.55" fill="#e6e6e6"/><rect x="804.36" y="102.54" width="3.84" height="0.55" fill="#e6e6e6"/><rect x="808.20" y="102.54" width="0.48" height="0.55" fill="#e6e6e6"/><rect x="808.68" y="102.54" width="0.48" height="0.55" fill="#e6e6e6"/><rect x="802.92" y="104.96" width="8.16" height="0.55" fill="#e6e6e6"/><rect x="811.56" y="104.96" width="0.48" height="0.55" fill="#e6e6e6"/><rect x="812.52" y="104.96" width="0.96" height="0.55" fill="#e6e6e6"/><rect x="813.48" y="104.96" width="0.48" height="0.55" fill="#e6e6e6"/><rect x="813.96" y="104.96" width="14.88" height="0.55" fill="#e6e6e6"/><rect x="828.84" y="104.96" width="0.48" height="0.55" fill="#e6e6e6"/><rect x="829.32" y="104.96" width="0.48" height="0.55" fill="#e6e6e6"/><rect x="802.92" y="106.17" width="8.16" height="0.55" fill="#e6e6e6"/><rect x="811.08" y="106.17" width="0.48" height="0.55" fill="#e6e6e6"/><rect x="811.56" y="106.17" width="8.64" height="0.55" fill="#e6e6e6"/><rect x="820.20" y="106.17" width="0.48" height="0.55" fill="#e6e6e6"/><rect x="820.68" y="106.17" width="4.32" height="0.55" fill="#dcd48a"/><rect x="825.00" y="106.17" width="0.48" height="0.55" fill="#e6e6e6"/><rect x="802.92" y="107.38" width="8.16" height="0.55" fill="#e6e6e6"/><rect x="811.08" y="107.38" width="0.48" height="0.55" fill="#e6e6e6"/><rect x="811.56" y="107.38" width="7.68" height="0.55" fill="#e6e6e6"/><rect x="819.24" y="107.38" width="0.48" height="0.55" fill="#e6e6e6"/><rect x="819.72" y="107.38" width="8.64" height="0.55" fill="#dcd48a"/><rect x="828.36" y="107.38" width="0.48" height="0.55" fill="#e6e6e6"/><rect x="829.32" y="107.38" width="7.20" height="0.55" fill="#dcd48a"/><rect x="836.52" y="107.38" width="0.48" height="0.55" fill="#e6e6e6"/><rect x="801.00" y="108.59" width="10.08" height="0.55" fill="#dcd48a"/><rect x="811.08" y="108.59" width="0.48" height="0.55" fill="#e6e6e6"/><rect x="812.04" y="108.59" width="1.92" height="0.55" fill="#c2d6b2"/><rect x="813.96" y="108.59" width="0.48" height="0.55" fill="#e6e6e6"/><rect x="802.92" y="109.80" width="8.16" height="0.55" fill="#e6e6e6"/><rect x="811.08" y="109.80" width="0.48" height="0.55" fill="#e6e6e6"/><rect x="811.56" y="109.80" width="9.60" height="0.55" fill="#e6e6e6"/><rect x="821.16" y="109.80" width="0.48" height="0.55" fill="#e6e6e6"/><rect x="821.64" y="109.80" width="8.16" height="0.55" fill="#e6e6e6"/><rect x="829.80" y="109.80" width="0.48" height="0.55" fill="#e6e6e6"/><rect x="830.28" y="109.80" width="7.20" height="0.55" fill="#e6e6e6"/><rect x="837.48" y="109.80" width="0.48" height="0.55" fill="#e6e6e6"/><rect x="801.00" y="111.01" width="1.92" height="0.55" fill="#e6e6e6"/><rect x="802.92" y="111.01" width="0.48" height="0.55" fill="#e6e6e6"/><rect x="803.88" y="111.01" width="1.44" height="0.55" fill="#c2d6b2"/><rect x="805.32" y="111.01" width="0.48" height="0.55" fill="#e6e6e6"/><rect x="806.28" y="111.01" width="1.44" height="0.55" fill="#c2d6b2"/><rect x="807.72" y="111.01" width="0.48" height="0.55" fill="#e6e6e6"/><rect x="808.68" y="111.01" width="1.44" height="0.55" fill="#c2d6b2"/><rect x="810.12" y="111.01" width="0.48" height="0.55" fill="#e6e6e6"/><rect x="802.92" y="113.43" width="7.68" height="0.55" fill="#e6e6e6"/><rect x="811.08" y="113.43" width="0.48" height="0.55" fill="#e6e6e6"/><rect x="812.04" y="113.43" width="0.48" height="0.55" fill="#e6e6e6"/><rect x="812.52" y="113.43" width="0.48" height="0.55" fill="#e6e6e6"/><rect x="802.92" y="114.64" width="1.44" height="0.55" fill="#b8306a"/><rect x="804.84" y="114.64" width="0.48" height="0.55" fill="#e6e6e6"/><rect x="805.80" y="114.64" width="0.96" height="0.55" fill="#b83c88"/><rect x="807.24" y="114.64" width="2.40" height="0.55" fill="#b83c88"/><rect x="809.64" y="114.64" width="0.48" height="0.55" fill="#e6e6e6"/><rect x="810.12" y="114.64" width="0.96" height="0.55" fill="#c2d6b2"/><rect x="811.08" y="114.64" width="0.48" height="0.55" fill="#e6e6e6"/><rect x="811.56" y="114.64" width="0.48" height="0.55" fill="#e6e6e6"/><rect x="804.84" y="115.85" width="7.68" height="0.55" fill="#e6e6e6"/><rect x="812.52" y="115.85" width="0.48" height="0.55" fill="#e6e6e6"/><rect x="813.00" y="115.85" width="2.88" height="0.55" fill="#e6e6e6"/><rect x="815.88" y="115.85" width="0.48" height="0.55" fill="#e6e6e6"/><rect x="816.36" y="115.85" width="0.48" height="0.55" fill="#e6e6e6"/><rect x="816.84" y="115.85" width="0.48" height="0.55" fill="#e6e6e6"/><rect x="817.32" y="115.85" width="0.48" height="0.55" fill="#e6e6e6"/><rect x="817.80" y="115.85" width="0.48" height="0.55" fill="#e6e6e6"/><rect x="818.76" y="115.85" width="0.48" height="0.55" fill="#e6e6e6"/><rect x="819.72" y="115.85" width="0.48" height="0.55" fill="#c2d6b2"/><rect x="820.20" y="115.85" width="0.48" height="0.55" fill="#e6e6e6"/><rect x="821.16" y="115.85" width="0.48" height="0.55" fill="#c2d6b2"/><rect x="821.64" y="115.85" width="0.48" height="0.55" fill="#e6e6e6"/><rect x="822.12" y="115.85" width="0.48" height="0.55" fill="#e6e6e6"/><rect x="823.08" y="115.85" width="0.48" height="0.55" fill="#e6e6e6"/><rect x="823.56" y="115.85" width="0.48" height="0.55" fill="#e6e6e6"/><rect x="824.52" y="115.85" width="0.48" height="0.55" fill="#e6e6e6"/><rect x="825.48" y="115.85" width="0.48" height="0.55" fill="#c2d6b2"/><rect x="825.96" y="115.85" width="0.48" height="0.55" fill="#e6e6e6"/><rect x="826.92" y="115.85" width="0.96" height="0.55" fill="#c2d6b2"/><rect x="827.88" y="115.85" width="0.48" height="0.55" fill="#e6e6e6"/><rect x="828.36" y="115.85" width="0.48" height="0.55" fill="#e6e6e6"/><rect x="828.84" y="115.85" width="0.48" height="0.55" fill="#e6e6e6"/><rect x="829.80" y="115.85" width="3.84" height="0.55" fill="#dcd48a"/><rect x="834.12" y="115.85" width="0.48" height="0.55" fill="#e6e6e6"/><rect x="835.08" y="115.85" width="1.44" height="0.55" fill="#b83c88"/><rect x="836.52" y="115.85" width="0.48" height="0.55" fill="#e6e6e6"/><rect x="837.00" y="115.85" width="0.48" height="0.55" fill="#e6e6e6"/><rect x="837.48" y="115.85" width="0.48" height="0.55" fill="#e6e6e6"/><rect x="837.96" y="115.85" width="0.48" height="0.55" fill="#e6e6e6"/><rect x="838.44" y="115.85" width="0.48" height="0.55" fill="#e6e6e6"/><rect x="804.84" y="117.06" width="8.16" height="0.55" fill="#e6e6e6"/><rect x="813.00" y="117.06" width="0.48" height="0.55" fill="#e6e6e6"/><rect x="813.48" y="117.06" width="11.52" height="0.55" fill="#e6e6e6"/><rect x="825.00" y="117.06" width="0.48" height="0.55" fill="#e6e6e6"/><rect x="825.48" y="117.06" width="0.48" height="0.55" fill="#e6e6e6"/><rect x="825.96" y="117.06" width="0.48" height="0.55" fill="#e6e6e6"/><rect x="826.92" y="117.06" width="4.32" height="0.55" fill="#dcd48a"/><rect x="831.72" y="117.06" width="0.48" height="0.55" fill="#e6e6e6"/><rect x="832.68" y="117.06" width="1.44" height="0.55" fill="#b83c88"/><rect x="834.12" y="117.06" width="0.48" height="0.55" fill="#e6e6e6"/><rect x="834.60" y="117.06" width="0.48" height="0.55" fill="#e6e6e6"/><rect x="835.08" y="117.06" width="0.48" height="0.55" fill="#e6e6e6"/><rect x="836.04" y="117.06" width="0.48" height="0.55" fill="#e6e6e6"/><rect x="837.00" y="117.06" width="0.48" height="0.55" fill="#dcd48a"/><rect x="801.00" y="118.27" width="4.80" height="0.55" fill="#dcd48a"/><rect x="805.80" y="118.27" width="0.48" height="0.55" fill="#e6e6e6"/><rect x="804.84" y="119.48" width="8.16" height="0.55" fill="#e6e6e6"/><rect x="813.00" y="119.48" width="0.48" height="0.55" fill="#e6e6e6"/><rect x="813.48" y="119.48" width="16.80" height="0.55" fill="#e6e6e6"/><rect x="830.28" y="119.48" width="0.48" height="0.55" fill="#e6e6e6"/><rect x="830.76" y="119.48" width="0.48" height="0.55" fill="#e6e6e6"/><rect x="831.24" y="119.48" width="0.48" height="0.55" fill="#e6e6e6"/><rect x="832.20" y="119.48" width="0.48" height="0.55" fill="#e6e6e6"/><rect x="833.16" y="119.48" width="0.48" height="0.55" fill="#e6e6e6"/><rect x="834.12" y="119.48" width="0.48" height="0.55" fill="#c2d6b2"/><rect x="835.08" y="119.48" width="0.48" height="0.55" fill="#e6e6e6"/><rect x="836.04" y="119.48" width="0.48" height="0.55" fill="#c2d6b2"/><rect x="836.52" y="119.48" width="0.48" height="0.55" fill="#e6e6e6"/><rect x="804.84" y="120.69" width="8.16" height="0.55" fill="#e6e6e6"/><rect x="813.00" y="120.69" width="0.48" height="0.55" fill="#e6e6e6"/><rect x="813.48" y="120.69" width="13.92" height="0.55" fill="#e6e6e6"/><rect x="827.40" y="120.69" width="0.48" height="0.55" fill="#e6e6e6"/><rect x="827.88" y="120.69" width="0.48" height="0.55" fill="#e6e6e6"/><rect x="828.36" y="120.69" width="0.48" height="0.55" fill="#e6e6e6"/><rect x="829.32" y="120.69" width="0.48" height="0.55" fill="#c2d6b2"/><rect x="829.80" y="120.69" width="0.48" height="0.55" fill="#e6e6e6"/><rect x="804.84" y="121.90" width="8.16" height="0.55" fill="#e6e6e6"/><rect x="813.00" y="121.90" width="0.48" height="0.55" fill="#e6e6e6"/><rect x="813.48" y="121.90" width="9.12" height="0.55" fill="#e6e6e6"/><rect x="822.60" y="121.90" width="0.48" height="0.55" fill="#e6e6e6"/><rect x="823.08" y="121.90" width="0.48" height="0.55" fill="#e6e6e6"/><rect x="823.56" y="121.90" width="0.48" height="0.55" fill="#e6e6e6"/><rect x="824.52" y="121.90" width="0.48" height="0.55" fill="#e6e6e6"/><rect x="825.00" y="121.90" width="0.48" height="0.55" fill="#e6e6e6"/><rect x="825.48" y="121.90" width="0.48" height="0.55" fill="#c2d6b2"/><rect x="825.96" y="121.90" width="0.48" height="0.55" fill="#e6e6e6"/><rect x="826.92" y="121.90" width="0.48" height="0.55" fill="#c2d6b2"/><rect x="827.40" y="121.90" width="0.48" height="0.55" fill="#e6e6e6"/><rect x="827.88" y="121.90" width="0.48" height="0.55" fill="#e6e6e6"/><rect x="804.84" y="123.11" width="8.16" height="0.55" fill="#e6e6e6"/><rect x="813.00" y="123.11" width="0.48" height="0.55" fill="#e6e6e6"/><rect x="813.48" y="123.11" width="16.80" height="0.55" fill="#e6e6e6"/><rect x="830.28" y="123.11" width="0.48" height="0.55" fill="#e6e6e6"/><rect x="830.76" y="123.11" width="0.48" height="0.55" fill="#e6e6e6"/><rect x="831.24" y="123.11" width="0.48" height="0.55" fill="#e6e6e6"/><rect x="832.20" y="123.11" width="0.48" height="0.55" fill="#e6e6e6"/><rect x="832.68" y="123.11" width="0.48" height="0.55" fill="#c2d6b2"/><rect x="833.16" y="123.11" width="0.48" height="0.55" fill="#e6e6e6"/><rect x="834.12" y="123.11" width="0.48" height="0.55" fill="#e6e6e6"/><rect x="834.60" y="123.11" width="0.48" height="0.55" fill="#c2d6b2"/><rect x="835.08" y="123.11" width="0.48" height="0.55" fill="#e6e6e6"/><rect x="835.56" y="123.11" width="0.48" height="0.55" fill="#e6e6e6"/><rect x="802.92" y="125.53" width="3.36" height="0.55" fill="#e6e6e6"/><rect x="806.76" y="125.53" width="0.48" height="0.55" fill="#e6e6e6"/><rect x="807.72" y="125.53" width="1.44" height="0.55" fill="#e6e6e6"/><rect x="809.16" y="125.53" width="0.48" height="0.55" fill="#e6e6e6"/><rect x="809.64" y="125.53" width="4.32" height="0.55" fill="#e6e6e6"/><rect x="814.44" y="125.53" width="0.48" height="0.55" fill="#e6e6e6"/><rect x="815.40" y="125.53" width="4.32" height="0.55" fill="#dcd48a"/><rect x="802.92" y="126.74" width="0.96" height="0.55" fill="#e6e6e6"/><rect x="803.88" y="126.74" width="0.48" height="0.55" fill="#e6e6e6"/><rect x="804.36" y="126.74" width="3.84" height="0.55" fill="#e6e6e6"/><rect x="808.20" y="126.74" width="0.48" height="0.55" fill="#e6e6e6"/><rect x="808.68" y="126.74" width="3.36" height="0.55" fill="#e6e6e6"/><rect x="812.04" y="126.74" width="0.48" height="0.55" fill="#e6e6e6"/><rect x="813.00" y="126.74" width="3.84" height="0.55" fill="#e6e6e6"/><rect x="816.84" y="126.74" width="0.48" height="0.55" fill="#e6e6e6"/><rect x="817.32" y="126.74" width="1.92" height="0.55" fill="#b83c88"/><rect x="819.24" y="126.74" width="0.48" height="0.55" fill="#e6e6e6"/><rect x="802.92" y="129.16" width="1.44" height="0.55" fill="#b8306a"/><rect x="804.84" y="129.16" width="0.96" height="0.55" fill="#e6e6e6"/><rect x="805.80" y="129.16" width="0.48" height="0.55" fill="#e6e6e6"/><rect x="806.28" y="129.16" width="1.44" height="0.55" fill="#e6e6e6"/><rect x="807.72" y="129.16" width="0.48" height="0.55" fill="#e6e6e6"/><rect x="808.68" y="129.16" width="1.44" height="0.55" fill="#e6e6e6"/><rect x="810.12" y="129.16" width="0.48" height="0.55" fill="#e6e6e6"/><rect x="810.60" y="129.16" width="6.24" height="0.55" fill="#e6e6e6"/><rect x="816.84" y="129.16" width="0.48" height="0.55" fill="#e6e6e6"/><rect x="817.80" y="129.16" width="2.88" height="0.55" fill="#e6e6e6"/><rect x="820.68" y="129.16" width="0.48" height="0.55" fill="#e6e6e6"/><rect x="821.64" y="129.16" width="4.32" height="0.55" fill="#e6e6e6"/><rect x="825.96" y="129.16" width="0.48" height="0.55" fill="#e6e6e6"/><rect x="826.44" y="129.16" width="0.48" height="0.55" fill="#e6e6e6"/><rect x="804.84" y="130.37" width="1.44" height="0.55" fill="#b8306a"/><rect x="806.76" y="130.37" width="0.96" height="0.55" fill="#b83c88"/><rect x="807.72" y="130.37" width="0.48" height="0.55" fill="#e6e6e6"/><rect x="808.68" y="130.37" width="6.72" height="0.55" fill="#e6e6e6"/><rect x="815.88" y="130.37" width="0.96" height="0.55" fill="#b83c88"/><rect x="817.32" y="130.37" width="4.32" height="0.55" fill="#b83c88"/><rect x="821.64" y="130.37" width="0.48" height="0.55" fill="#e6e6e6"/><rect x="822.12" y="130.37" width="7.68" height="0.55" fill="#e6e6e6"/><rect x="829.80" y="130.37" width="0.48" height="0.55" fill="#e6e6e6"/><rect x="830.28" y="130.37" width="0.48" height="0.55" fill="#e6e6e6"/><rect x="806.76" y="131.58" width="2.40" height="0.55" fill="#b83c88"/><rect x="809.16" y="131.58" width="0.48" height="0.55" fill="#e6e6e6"/><rect x="809.64" y="131.58" width="6.72" height="0.55" fill="#e6e6e6"/><rect x="816.36" y="131.58" width="0.48" height="0.55" fill="#e6e6e6"/><rect x="816.84" y="131.58" width="0.48" height="0.55" fill="#c2d6b2"/><rect x="817.32" y="131.58" width="0.48" height="0.55" fill="#e6e6e6"/><rect x="817.80" y="131.58" width="0.48" height="0.55" fill="#e6e6e6"/><rect x="806.76" y="132.79" width="2.88" height="0.55" fill="#e6e6e6"/><rect x="809.64" y="132.79" width="0.48" height="0.55" fill="#e6e6e6"/><rect x="810.12" y="132.79" width="6.72" height="0.55" fill="#e6e6e6"/><rect x="816.84" y="132.79" width="0.48" height="0.55" fill="#e6e6e6"/><rect x="817.32" y="132.79" width="6.72" height="0.55" fill="#e6e6e6"/><rect x="824.04" y="132.79" width="0.48" height="0.55" fill="#e6e6e6"/><rect x="824.52" y="132.79" width="0.48" height="0.55" fill="#c2d6b2"/><rect x="825.00" y="132.79" width="0.48" height="0.55" fill="#e6e6e6"/><rect x="825.48" y="132.79" width="0.48" height="0.55" fill="#e6e6e6"/><rect x="826.44" y="132.79" width="0.96" height="0.55" fill="#b83c88"/><rect x="827.40" y="132.79" width="0.48" height="0.55" fill="#e6e6e6"/><rect x="828.36" y="132.79" width="6.72" height="0.55" fill="#e6e6e6"/><rect x="835.08" y="132.79" width="0.48" height="0.55" fill="#e6e6e6"/><rect x="835.56" y="132.79" width="0.48" height="0.55" fill="#c2d6b2"/><rect x="836.04" y="132.79" width="0.48" height="0.55" fill="#e6e6e6"/><rect x="836.52" y="132.79" width="0.48" height="0.55" fill="#e6e6e6"/><rect x="802.92" y="135.21" width="6.24" height="0.55" fill="#e6e6e6"/><rect x="809.64" y="135.21" width="0.48" height="0.55" fill="#e6e6e6"/><rect x="810.60" y="135.21" width="1.92" height="0.55" fill="#e6e6e6"/><rect x="812.52" y="135.21" width="0.48" height="0.55" fill="#e6e6e6"/><rect x="813.00" y="135.21" width="1.92" height="0.55" fill="#e6e6e6"/><rect x="814.92" y="135.21" width="0.48" height="0.55" fill="#e6e6e6"/><rect x="815.40" y="135.21" width="0.48" height="0.55" fill="#e6e6e6"/><rect x="802.92" y="136.42" width="17.28" height="0.55" fill="#6c6c6c"/></g><rect x="0" y="522.5" width="1000" height="48.5" fill="#000"/><rect x="9" y="525" width="297" height="7" fill="#121317"/><text transform="scale(0.8 1)" x="5.9" y="530.8" font-size="5.4" font-family="Liberation Mono" fill="#a8a8a8" text-anchor="end">1</text><rect x="450.5" y="527.5" width="44" height="10.8" rx="2.2" fill="#0e1220" stroke="#55575f" stroke-width="1"/><text x="458" y="535.4" font-size="7.3" fill="#b8b8b8" textLength="28.5" lengthAdjust="spacingAndGlyphs">Run Code</text><text x="508" y="535.4" font-size="7.3" fill="#a8a8a8" textLength="21" lengthAdjust="spacingAndGlyphs">Output:</text><rect x="537" y="525" width="300" height="7" fill="#121317"/><g class="code" transform="scale(0.8 1)" font-size="5.4" font-family="Liberation Mono"><text x="669.00" y="530.40" class="ln1" text-anchor="end">1</text><text y="530.40" xml:space="preserve"><tspan x="674.38" class="i">Python</tspan><tspan x="696.86" class="n">3.8</tspan><tspan x="706.50" class="i">.</tspan><tspan x="709.71" class="n">10</tspan><tspan x="719.35" class="i">(</tspan><tspan x="722.56" class="i">tags</tspan><tspan x="735.41" class="i">/</tspan><tspan x="738.62" class="i">v3</tspan><tspan x="745.05" class="i">.</tspan><tspan x="748.26" class="n">8.10</tspan><tspan x="761.11" class="i">:</tspan><tspan x="764.33" class="i">3</tspan><tspan x="767.54" class="i">d8993a</tspan><tspan x="786.81" class="i">,</tspan><tspan x="793.24" class="i">May</tspan><tspan x="809.30" class="n">3</tspan><tspan x="815.73" class="n">2021</tspan><tspan x="828.57" class="i">,</tspan><tspan x="835.00" class="n">11</tspan><tspan x="841.42" class="i">:</tspan><tspan x="844.64" class="n">48</tspan><tspan x="851.06" class="i">:</tspan><tspan x="854.27" class="n">03</tspan><tspan x="860.70" class="i">)</tspan><tspan x="867.12" class="i">[</tspan><tspan x="870.34" class="i">MSC</tspan><tspan x="883.19" class="i">v</tspan><tspan x="886.40" class="i">.</tspan><tspan x="889.61" class="n">1928</tspan><tspan x="905.67" class="n">64</tspan><tspan x="915.31" class="i">bit</tspan><tspan x="928.16" class="i">(</tspan><tspan x="931.38" class="i">AMD64</tspan><tspan x="947.44" class="i">)</tspan><tspan x="950.65" class="i">]</tspan><tspan x="957.07" class="i">on</tspan><tspan x="966.71" class="i">win32</tspan></text><text x="669.00" y="536.80" class="ln" text-anchor="end">2</text><text y="536.80" xml:space="preserve"><tspan x="674.38" class="i">Type</tspan><tspan x="690.44" class="s">&quot;help&quot;</tspan><tspan x="709.71" class="i">,</tspan><tspan x="716.14" class="s">&quot;copyright&quot;</tspan><tspan x="751.47" class="i">,</tspan><tspan x="757.90" class="s">&quot;credits&quot;</tspan><tspan x="790.02" class="k">or</tspan><tspan x="799.66" class="s">&quot;license&quot;</tspan><tspan x="831.79" class="d">for</tspan><tspan x="844.64" class="i">more</tspan><tspan x="860.70" class="i">information</tspan><tspan x="896.04" class="i">.</tspan></text><text x="669.00" y="543.20" class="ln" text-anchor="end">3</text></g></svg></body></html>
